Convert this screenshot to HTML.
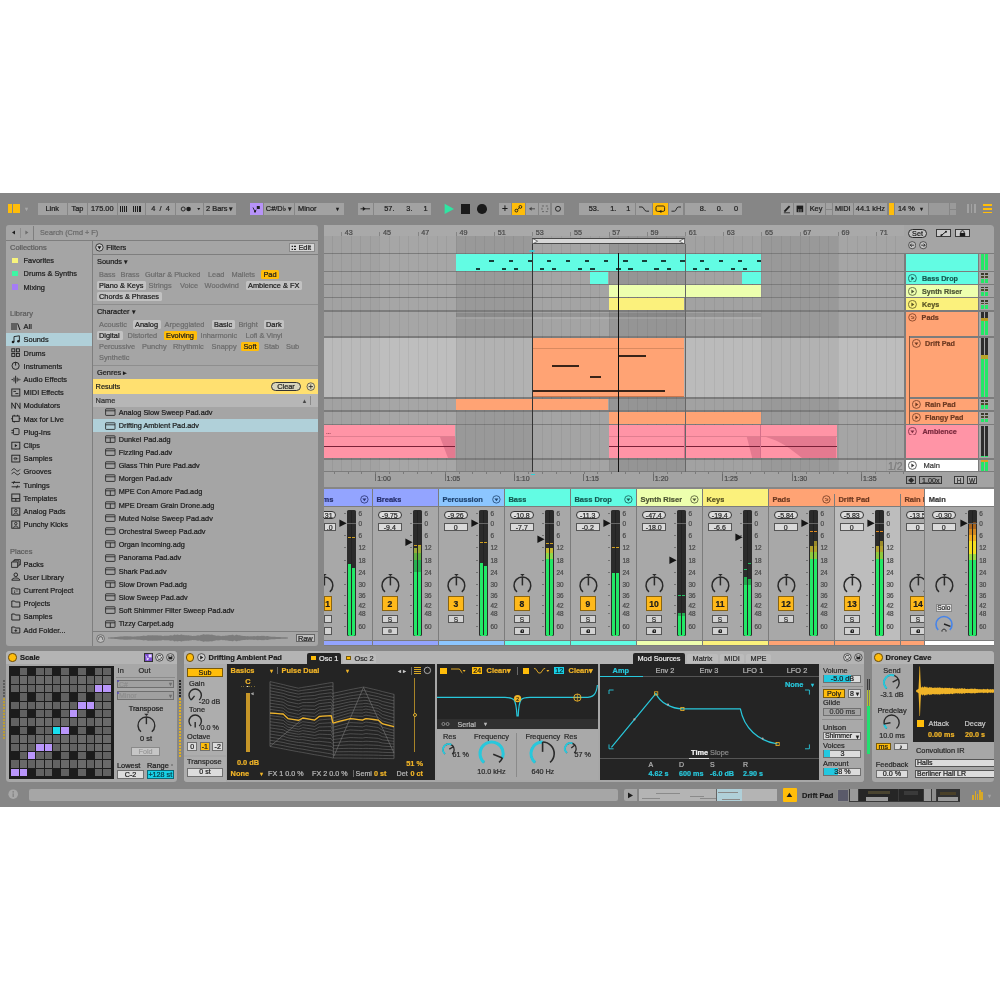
<!DOCTYPE html>
<html><head><meta charset="utf-8"><title>Live</title>
<style>
html,body{margin:0;padding:0;background:#fff;}
body{width:1000px;height:1000px;position:relative;overflow:hidden;font-family:"Liberation Sans",sans-serif;}
#app{position:absolute;left:0;top:0;width:1000px;height:1000px;overflow:hidden;will-change:transform;}
#app div,#app span,#app svg{position:absolute;box-sizing:border-box;}
#app span{white-space:nowrap;-webkit-text-stroke:0.22px currentColor;}
</style></head><body><div id="app">
<div style="left:0px;top:193px;width:1000px;height:614px;background:#868686;"></div>
<div style="left:8px;top:203.8px;width:3.6px;height:9.4px;background:#ffbd0a;"></div>
<div style="left:12.6px;top:203.8px;width:7.6px;height:9.4px;background:#ffbd0a;"></div>
<span style="top:204px;font-size:6px;line-height:10px;color:#a8a8a8;left:26px;transform:translateX(-50%);">&#9662;</span>
<div style="left:37.5px;top:203px;width:29.5px;height:11.6px;background:#a2a2a2;"></div>
<span style="top:204px;font-size:7.4px;line-height:10px;color:#1c1c1c;left:52.25px;transform:translateX(-50%);">Link</span>
<div style="left:68px;top:203px;width:19px;height:11.6px;background:#a2a2a2;"></div>
<span style="top:204px;font-size:7.4px;line-height:10px;color:#1c1c1c;left:77.5px;transform:translateX(-50%);">Tap</span>
<div style="left:88px;top:203px;width:28.5px;height:11.6px;background:#a2a2a2;"></div>
<span style="top:204px;font-size:7.4px;line-height:10px;color:#1c1c1c;left:102.25px;transform:translateX(-50%);">175.00</span>
<div style="left:117.5px;top:203px;width:27px;height:11.6px;background:#a2a2a2;"></div>
<div style="left:120px;top:205.5px;width:1px;height:6.6px;background:#1c1c1c;"></div>
<div style="left:122px;top:205.5px;width:1px;height:6.6px;background:#1c1c1c;"></div>
<div style="left:124px;top:205.5px;width:1px;height:6.6px;background:#1c1c1c;"></div>
<div style="left:126px;top:205.5px;width:1px;height:6.6px;background:#1c1c1c;"></div>
<div style="left:133px;top:205.5px;width:1px;height:6.6px;background:#1c1c1c;"></div>
<div style="left:135px;top:205.5px;width:1px;height:6.6px;background:#1c1c1c;"></div>
<div style="left:137px;top:205.5px;width:1px;height:6.6px;background:#1c1c1c;"></div>
<div style="left:139px;top:205.5px;width:1.6px;height:6.6px;background:#1c1c1c;"></div>
<div style="left:146px;top:203px;width:29px;height:11.6px;background:#a2a2a2;"></div>
<span style="top:204px;font-size:7.4px;line-height:10px;color:#1c1c1c;left:160.5px;transform:translateX(-50%);">4 &nbsp;/ &nbsp;4</span>
<div style="left:176px;top:203px;width:27px;height:11.6px;background:#a2a2a2;"></div>
<svg style="left:179px;top:204px;" width="24" height="10" viewBox="0 0 24 10"><circle cx="4.2" cy="5" r="2" fill="none" stroke="#1c1c1c" stroke-width="0.9"/><circle cx="9.6" cy="5" r="2.3" fill="#1c1c1c"/><path d="M18.2 4 l3 0 l-1.5 2.2z" fill="#1c1c1c"/></svg>
<div style="left:204px;top:203px;width:31.5px;height:11.6px;background:#a2a2a2;"></div>
<span style="top:204px;font-size:7.4px;line-height:10px;color:#1c1c1c;left:219.75px;transform:translateX(-50%);">2 Bars &#9662;</span>
<div style="left:250px;top:203px;width:12.5px;height:11.6px;background:#b793f8;"></div>
<svg style="left:250px;top:203px;" width="12.5" height="11.6" viewBox="0 0 12.5 11.6"><rect x="6.8" y="3" width="3" height="3" fill="#222"/><path d="M3 4.5 L4.6 7.8 L6.5 7" stroke="#222" stroke-width="0.9" fill="none"/><rect x="4" y="7.4" width="2" height="2" fill="#222"/></svg>
<div style="left:263.5px;top:203px;width:30.5px;height:11.6px;background:#a2a2a2;"></div>
<span style="top:204px;font-size:7.4px;line-height:10px;color:#1c1c1c;left:278.75px;transform:translateX(-50%);">C#/D&#9837; &#9662;</span>
<div style="left:295px;top:203px;width:48.8px;height:11.6px;background:#a2a2a2;"></div>
<span style="top:204px;font-size:7.4px;line-height:10px;color:#1c1c1c;left:298px;">Minor</span>
<span style="top:204px;font-size:6px;line-height:10px;color:#1c1c1c;left:337.5px;transform:translateX(-50%);">&#9662;</span>
<div style="left:358px;top:203px;width:15px;height:11.6px;background:#a2a2a2;"></div>
<svg style="left:358px;top:203px;" width="15" height="11.6" viewBox="0 0 15 11.6"><path d="M2.5 5.8 L12 5.8" stroke="#1c1c1c" stroke-width="0.9"/><path d="M4.8 3.6 L7.6 5.8 L4.8 8z" fill="#1c1c1c"/></svg>
<div style="left:374px;top:203px;width:56.8px;height:11.6px;background:#a2a2a2;"></div>
<span style="top:204px;font-size:7.4px;line-height:10px;color:#1c1c1c;left:394.5px;transform:translateX(-100%);">57.</span>
<span style="top:204px;font-size:7.4px;line-height:10px;color:#1c1c1c;left:412.5px;transform:translateX(-100%);">3.</span>
<span style="top:204px;font-size:7.4px;line-height:10px;color:#1c1c1c;left:427.5px;transform:translateX(-100%);">1</span>
<svg style="left:444px;top:203px;" width="11" height="12" viewBox="0 0 11 12"><path d="M0.6 0.8 L10 5.9 L0.6 11z" fill="#2fe5a3"/></svg>
<div style="left:460.5px;top:204px;width:9.6px;height:9.6px;background:#1a1a1a;"></div>
<div style="left:477px;top:204px;width:9.6px;height:9.6px;background:#1a1a1a;border-radius:50%;"></div>
<div style="left:499px;top:203px;width:12px;height:11.6px;background:#a2a2a2;"></div>
<span style="top:204px;font-size:10px;line-height:10px;color:#1c1c1c;left:505px;transform:translateX(-50%);">+</span>
<div style="left:512px;top:203px;width:12.5px;height:11.6px;background:#ffbd0a;"></div>
<svg style="left:512px;top:203px;" width="12.5" height="11.6" viewBox="0 0 12.5 11.6"><circle cx="4.4" cy="7.6" r="1.4" fill="none" stroke="#1c1c1c" stroke-width="0.9"/><circle cx="8.4" cy="3.9" r="1.4" fill="none" stroke="#1c1c1c" stroke-width="0.9"/><path d="M5.4 6.6 L7.4 4.9" stroke="#1c1c1c" stroke-width="0.9"/></svg>
<div style="left:525.5px;top:203px;width:12px;height:11.6px;background:#a2a2a2;"></div>
<svg style="left:525.5px;top:203px;" width="12" height="11.6" viewBox="0 0 12 11.6"><path d="M3.5 5.8 L9 5.8" stroke="#444" stroke-width="0.9"/><path d="M5.6 3.8 L3.2 5.8 L5.6 7.8z" fill="#444"/></svg>
<div style="left:538.8px;top:203px;width:11.7px;height:11.6px;background:#a2a2a2;"></div>
<svg style="left:538.8px;top:203px;" width="11.7" height="11.6" viewBox="0 0 11.7 11.6"><rect x="3" y="3" width="5.8" height="5.6" fill="none" stroke="#555" stroke-width="0.8" stroke-dasharray="2 1.8"/></svg>
<div style="left:551.8px;top:203px;width:12px;height:11.6px;background:#a2a2a2;"></div>
<svg style="left:551.8px;top:203px;" width="12" height="11.6" viewBox="0 0 12 11.6"><circle cx="6" cy="5.8" r="2.5" fill="none" stroke="#1c1c1c" stroke-width="0.9"/></svg>
<div style="left:578.8px;top:203px;width:56.2px;height:11.6px;background:#a2a2a2;"></div>
<span style="top:204px;font-size:7.4px;line-height:10px;color:#1c1c1c;left:599px;transform:translateX(-100%);">53.</span>
<span style="top:204px;font-size:7.4px;line-height:10px;color:#1c1c1c;left:616.4px;transform:translateX(-100%);">1.</span>
<span style="top:204px;font-size:7.4px;line-height:10px;color:#1c1c1c;left:630.4px;transform:translateX(-100%);">1</span>
<div style="left:636px;top:203px;width:16px;height:11.6px;background:#a2a2a2;"></div>
<svg style="left:636px;top:203px;" width="16" height="11.6" viewBox="0 0 16 11.6"><path d="M3 4 L6 4 C8 4 8 8.2 10.5 8.2 L13 8.2" stroke="#1c1c1c" stroke-width="0.9" fill="none"/></svg>
<div style="left:653px;top:203px;width:14.5px;height:11.6px;background:#ffbd0a;"></div>
<svg style="left:653px;top:203px;" width="14.5" height="11.6" viewBox="0 0 14.5 11.6"><rect x="3" y="3" width="8.6" height="5.4" rx="1.4" fill="none" stroke="#1c1c1c" stroke-width="0.9"/><path d="M6 8.4 l2.4 -1.6 l0 3.2z" fill="#1c1c1c"/></svg>
<div style="left:668.8px;top:203px;width:14.2px;height:11.6px;background:#a2a2a2;"></div>
<svg style="left:668.8px;top:203px;" width="14.2" height="11.6" viewBox="0 0 14.2 11.6"><path d="M2.5 8.2 L5.4 8.2 C7.6 8.2 7 4 9.4 4 L12 4" stroke="#1c1c1c" stroke-width="0.9" fill="none"/></svg>
<div style="left:685px;top:203px;width:56.5px;height:11.6px;background:#a2a2a2;"></div>
<span style="top:204px;font-size:7.4px;line-height:10px;color:#1c1c1c;left:706px;transform:translateX(-100%);">8.</span>
<span style="top:204px;font-size:7.4px;line-height:10px;color:#1c1c1c;left:723px;transform:translateX(-100%);">0.</span>
<span style="top:204px;font-size:7.4px;line-height:10px;color:#1c1c1c;left:738px;transform:translateX(-100%);">0</span>
<div style="left:780.5px;top:203px;width:12px;height:11.6px;background:#a2a2a2;"></div>
<svg style="left:780.5px;top:203px;" width="12" height="11.6" viewBox="0 0 12 11.6"><path d="M3.4 8.6 L8.6 3.2" stroke="#1c1c1c" stroke-width="1.8"/><path d="M2.8 9.8 L9 9.8" stroke="#1c1c1c" stroke-width="0.8"/></svg>
<div style="left:793.8px;top:203px;width:11.7px;height:11.6px;background:#a2a2a2;"></div>
<svg style="left:793.8px;top:203px;" width="11.7" height="11.6" viewBox="0 0 11.7 11.6"><rect x="2.6" y="2.6" width="6.6" height="6.6" fill="#1c1c1c"/><path d="M4.8 6 L4.8 9.2 M7 6 L7 9.2" stroke="#a2a2a2" stroke-width="0.7"/></svg>
<div style="left:807px;top:203px;width:18px;height:11.6px;background:#a2a2a2;"></div>
<span style="top:204px;font-size:7.4px;line-height:10px;color:#1c1c1c;left:816px;transform:translateX(-50%);">Key</span>
<div style="left:826px;top:203px;width:6px;height:11.6px;background:#a2a2a2;"></div>
<div style="left:826px;top:208.5px;width:6px;height:0.8px;background:#868686;"></div>
<div style="left:833px;top:203px;width:19.5px;height:11.6px;background:#a2a2a2;"></div>
<span style="top:204px;font-size:7.4px;line-height:10px;color:#1c1c1c;left:842.75px;transform:translateX(-50%);">MIDI</span>
<div style="left:853.8px;top:203px;width:33.2px;height:11.6px;background:#a2a2a2;"></div>
<span style="top:204px;font-size:7.4px;line-height:10px;color:#1c1c1c;left:870.4px;transform:translateX(-50%);">44.1 kHz</span>
<div style="left:888.8px;top:203px;width:5.5px;height:11.6px;background:#ffbd0a;"></div>
<div style="left:895px;top:203px;width:33px;height:11.6px;background:#a2a2a2;"></div>
<span style="top:204px;font-size:7.4px;line-height:10px;color:#1c1c1c;left:898px;">14 %</span>
<span style="top:204px;font-size:6px;line-height:10px;color:#1c1c1c;left:921.5px;transform:translateX(-50%);">&#9662;</span>
<div style="left:929px;top:203px;width:19.8px;height:11.6px;background:#9a9a9a;"></div>
<div style="left:950px;top:203px;width:5.5px;height:11.6px;background:#9a9a9a;"></div>
<div style="left:950px;top:208.5px;width:5.5px;height:0.8px;background:#868686;"></div>
<div style="left:967px;top:204.4px;width:1.6px;height:9px;background:#a2a2a2;"></div>
<div style="left:970.6px;top:204.4px;width:1.6px;height:9px;background:#a2a2a2;"></div>
<div style="left:974.2px;top:204.4px;width:1.6px;height:9px;background:#a2a2a2;"></div>
<div style="left:982.6px;top:204px;width:9.4px;height:1.8px;background:#ffbd0a;"></div>
<div style="left:982.6px;top:207.8px;width:9.4px;height:1.8px;background:#ffbd0a;"></div>
<div style="left:982.6px;top:211.6px;width:9.4px;height:1.8px;background:#ffbd0a;"></div>
<div style="left:6px;top:225px;width:311.6px;height:420.6px;background:#a5a5a5;border-radius:3px 3px 3px 3px;"></div>
<div style="left:6px;top:240px;width:311.6px;height:1px;background:#7e7e7e;"></div>
<svg style="left:10px;top:228px;" width="30" height="10" viewBox="0 0 30 10"><path d="M5 4.6 L2 2.6 L5 0.6z" transform="translate(0,2)" fill="#1c1c1c"/><path d="M15.4 2.6 L18.4 4.6 L15.4 6.6z" fill="#6c6c6c"/></svg>
<div style="left:19.6px;top:228px;width:0.8px;height:10px;background:#8e8e8e;"></div>
<div style="left:33.4px;top:226px;width:1px;height:14px;background:#7e7e7e;"></div>
<span style="top:228px;font-size:7.3px;line-height:10px;color:#6a6a6a;left:40px;">Search (Cmd + F)</span>
<div style="left:91.6px;top:241px;width:1.4px;height:404.6px;background:#7e7e7e;"></div>
<span style="top:243px;font-size:7.5px;line-height:10px;color:#5c5c5c;left:10px;">Collections</span>
<div style="left:12.4px;top:258px;width:5.2px;height:5.2px;background:#f7f47c;"></div>
<span style="top:256px;font-size:7.4px;line-height:10px;color:#1c1c1c;left:23.6px;">Favorites</span>
<div style="left:12.4px;top:271.2px;width:5.2px;height:5.2px;background:#3df5a4;"></div>
<span style="top:269px;font-size:7.4px;line-height:10px;color:#1c1c1c;left:23.6px;">Drums &amp; Synths</span>
<div style="left:12.4px;top:284.4px;width:5.2px;height:5.2px;background:#a57cf6;"></div>
<span style="top:283px;font-size:7.4px;line-height:10px;color:#1c1c1c;left:23.6px;">Mixing</span>
<span style="top:309px;font-size:7.5px;line-height:10px;color:#5c5c5c;left:10px;">Library</span>
<svg style="left:10.6px;top:321.8px;" width="10" height="10" viewBox="0 0 10 10"><path d="M1 1 V8 M3 1 V8 M5 1 V8 M6.6 1.4 L9 8" stroke="#1c1c1c" stroke-width="1" fill="none"/></svg>
<span style="top:322px;font-size:7.4px;line-height:10px;color:#1c1c1c;left:23.6px;">All</span>
<div style="left:6px;top:333.2px;width:85.6px;height:13.2px;background:#b0d0d9;"></div>
<svg style="left:10.6px;top:335px;" width="10" height="10" viewBox="0 0 10 10"><path d="M3 7 V1.6 L8.4 0.8 V6" stroke="#1c1c1c" stroke-width="0.9" fill="none"/><circle cx="2" cy="7" r="1.3" fill="#1c1c1c"/><circle cx="7.4" cy="6.2" r="1.3" fill="#1c1c1c"/></svg>
<span style="top:335px;font-size:7.4px;line-height:10px;color:#1c1c1c;left:23.6px;">Sounds</span>
<svg style="left:10.6px;top:348.2px;" width="10" height="10" viewBox="0 0 10 10"><rect x="0.8" y="0.8" width="3" height="3" fill="none" stroke="#1c1c1c" stroke-width="0.9"/><rect x="5.4" y="0.8" width="3" height="3" fill="none" stroke="#1c1c1c" stroke-width="0.9"/><rect x="0.8" y="5.4" width="3" height="3" fill="none" stroke="#1c1c1c" stroke-width="0.9"/><rect x="5.4" y="5.4" width="3" height="3" fill="none" stroke="#1c1c1c" stroke-width="0.9"/></svg>
<span style="top:349px;font-size:7.4px;line-height:10px;color:#1c1c1c;left:23.6px;">Drums</span>
<svg style="left:10.6px;top:361.4px;" width="10" height="10" viewBox="0 0 10 10"><circle cx="4.6" cy="4.8" r="3.6" fill="none" stroke="#1c1c1c" stroke-width="0.9"/><path d="M4.6 1 V4.6" stroke="#1c1c1c" stroke-width="0.9"/></svg>
<span style="top:362px;font-size:7.4px;line-height:10px;color:#1c1c1c;left:23.6px;">Instruments</span>
<svg style="left:10.6px;top:374.6px;" width="10" height="10" viewBox="0 0 10 10"><path d="M0.5 4.6 H2 M3 2.6 V6.6 M4.6 0.8 V8.4 M6.2 2.6 V6.6 M7.8 3.6 V5.6 M8.6 4.6 H9.4" stroke="#1c1c1c" stroke-width="0.9"/></svg>
<span style="top:375px;font-size:7.4px;line-height:10px;color:#1c1c1c;left:23.6px;">Audio Effects</span>
<svg style="left:10.6px;top:387.8px;" width="10" height="10" viewBox="0 0 10 10"><rect x="0.8" y="1" width="8" height="7" fill="none" stroke="#1c1c1c" stroke-width="0.9"/><path d="M2.4 3.4 H5 M4.4 5.6 H7.4" stroke="#1c1c1c" stroke-width="0.9"/></svg>
<span style="top:388px;font-size:7.4px;line-height:10px;color:#1c1c1c;left:23.6px;">MIDI Effects</span>
<svg style="left:10.6px;top:401px;" width="10" height="10" viewBox="0 0 10 10"><path d="M0.8 7.6 V1.8 L4.4 7.6 V1.8 M5.4 1.8 L9 7.6 V1.8" stroke="#1c1c1c" stroke-width="0.9" fill="none"/></svg>
<span style="top:401px;font-size:7.4px;line-height:10px;color:#1c1c1c;left:23.6px;">Modulators</span>
<svg style="left:10.6px;top:414.2px;" width="10" height="10" viewBox="0 0 10 10"><rect x="1.6" y="2" width="6.6" height="5.4" fill="none" stroke="#1c1c1c" stroke-width="0.9"/><path d="M0.2 4.7 H1.6 M8.2 4.7 H9.6 M3.2 0.8 V2 M6.6 0.8 V2 M3.2 7.4 V8.6" stroke="#1c1c1c" stroke-width="0.9"/></svg>
<span style="top:415px;font-size:7.4px;line-height:10px;color:#1c1c1c;left:23.6px;">Max for Live</span>
<svg style="left:10.6px;top:427.4px;" width="10" height="10" viewBox="0 0 10 10"><rect x="2.4" y="1.6" width="5.6" height="6" rx="1" fill="none" stroke="#1c1c1c" stroke-width="0.9"/><path d="M0.4 3.4 H2.4 M0.4 5.8 H2.4" stroke="#1c1c1c" stroke-width="0.9"/></svg>
<span style="top:428px;font-size:7.4px;line-height:10px;color:#1c1c1c;left:23.6px;">Plug-Ins</span>
<svg style="left:10.6px;top:440.6px;" width="10" height="10" viewBox="0 0 10 10"><rect x="0.8" y="1.2" width="8" height="6.8" fill="none" stroke="#1c1c1c" stroke-width="0.9"/><path d="M3.8 3 L6.4 4.6 L3.8 6.2z" fill="#1c1c1c"/></svg>
<span style="top:441px;font-size:7.4px;line-height:10px;color:#1c1c1c;left:23.6px;">Clips</span>
<svg style="left:10.6px;top:453.8px;" width="10" height="10" viewBox="0 0 10 10"><rect x="0.8" y="1.2" width="8" height="6.8" fill="none" stroke="#1c1c1c" stroke-width="0.9"/><path d="M2.6 4.6 H3.4 M4 3 V6.2 M5.6 3.6 V5.6 M6.6 4.6 H7.2" stroke="#1c1c1c" stroke-width="0.9"/></svg>
<span style="top:454px;font-size:7.4px;line-height:10px;color:#1c1c1c;left:23.6px;">Samples</span>
<svg style="left:10.6px;top:467px;" width="10" height="10" viewBox="0 0 10 10"><path d="M0.6 3.6 C2.4 1 3.6 1.4 4.8 3 C6 4.6 7.4 4.6 9 2.4 M0.6 7.2 C2.4 4.6 3.6 5 4.8 6.6 C6 8.2 7.4 8.2 9 6" stroke="#1c1c1c" stroke-width="0.9" fill="none"/></svg>
<span style="top:467px;font-size:7.4px;line-height:10px;color:#1c1c1c;left:23.6px;">Grooves</span>
<svg style="left:10.6px;top:480.2px;" width="10" height="10" viewBox="0 0 10 10"><path d="M0.6 2.4 H9 M0.6 6.8 H9 M3.4 1 L2.4 3.8 M6.6 5.4 L5.6 8.2" stroke="#1c1c1c" stroke-width="0.9" fill="none"/></svg>
<span style="top:481px;font-size:7.4px;line-height:10px;color:#1c1c1c;left:23.6px;">Tunings</span>
<svg style="left:10.6px;top:493.4px;" width="10" height="10" viewBox="0 0 10 10"><rect x="0.8" y="1" width="8" height="7.2" fill="none" stroke="#1c1c1c" stroke-width="0.9"/><path d="M0.8 5.6 H8.8 M4.8 5.6 V8.2" stroke="#1c1c1c" stroke-width="0.9"/></svg>
<span style="top:494px;font-size:7.4px;line-height:10px;color:#1c1c1c;left:23.6px;">Templates</span>
<svg style="left:10.6px;top:506.6px;" width="10" height="10" viewBox="0 0 10 10"><rect x="0.8" y="1" width="8" height="7.2" fill="none" stroke="#1c1c1c" stroke-width="0.9"/><circle cx="4.8" cy="3.6" r="1.2" fill="none" stroke="#1c1c1c" stroke-width="0.8"/><path d="M2.6 7.8 C2.8 5.4 6.8 5.4 7 7.8" stroke="#1c1c1c" stroke-width="0.8" fill="none"/></svg>
<span style="top:507px;font-size:7.4px;line-height:10px;color:#1c1c1c;left:23.6px;">Analog Pads</span>
<svg style="left:10.6px;top:519.8px;" width="10" height="10" viewBox="0 0 10 10"><rect x="0.8" y="1" width="8" height="7.2" fill="none" stroke="#1c1c1c" stroke-width="0.9"/><circle cx="4.8" cy="3.6" r="1.2" fill="none" stroke="#1c1c1c" stroke-width="0.8"/><path d="M2.6 7.8 C2.8 5.4 6.8 5.4 7 7.8" stroke="#1c1c1c" stroke-width="0.8" fill="none"/></svg>
<span style="top:520px;font-size:7.4px;line-height:10px;color:#1c1c1c;left:23.6px;">Punchy Kicks</span>
<span style="top:547px;font-size:7.5px;line-height:10px;color:#5c5c5c;left:10px;">Places</span>
<svg style="left:10.6px;top:559.2px;" width="10" height="10" viewBox="0 0 10 10"><path d="M0.6 3 H6.6 V8.4 H0.6z M2 3 V1.8 H8 V7 H6.6 M3.4 1.8 V0.6 H9.4 V5.8 H8" fill="none" stroke="#1c1c1c" stroke-width="0.8"/></svg>
<span style="top:560px;font-size:7.4px;line-height:10px;color:#1c1c1c;left:23.6px;">Packs</span>
<svg style="left:10.6px;top:572.4px;" width="10" height="10" viewBox="0 0 10 10"><circle cx="4.8" cy="2.8" r="1.8" fill="none" stroke="#1c1c1c" stroke-width="0.9"/><path d="M0.8 8.2 C1 5.2 8.6 5.2 8.8 8.2z" stroke="#1c1c1c" stroke-width="0.9" fill="none"/></svg>
<span style="top:573px;font-size:7.4px;line-height:10px;color:#1c1c1c;left:23.6px;">User Library</span>
<svg style="left:10.6px;top:585.6px;" width="10" height="10" viewBox="0 0 10 10"><path d="M0.8 2 H3.6 L4.4 3 H8.8 V8 H0.8z" fill="none" stroke="#1c1c1c" stroke-width="0.9"/><path d="M3 5 H4.2 M5.4 5 H6.6 M3 6.4 H4.2" stroke="#1c1c1c" stroke-width="0.8"/></svg>
<span style="top:586px;font-size:7.4px;line-height:10px;color:#1c1c1c;left:23.6px;">Current Project</span>
<svg style="left:10.6px;top:598.8px;" width="10" height="10" viewBox="0 0 10 10"><path d="M0.8 2 H3.6 L4.4 3 H8.8 V8 H0.8z" fill="none" stroke="#1c1c1c" stroke-width="0.9"/></svg>
<span style="top:599px;font-size:7.4px;line-height:10px;color:#1c1c1c;left:23.6px;">Projects</span>
<svg style="left:10.6px;top:612px;" width="10" height="10" viewBox="0 0 10 10"><path d="M0.8 2 H3.6 L4.4 3 H8.8 V8 H0.8z" fill="none" stroke="#1c1c1c" stroke-width="0.9"/></svg>
<span style="top:612px;font-size:7.4px;line-height:10px;color:#1c1c1c;left:23.6px;">Samples</span>
<svg style="left:10.6px;top:625.2px;" width="10" height="10" viewBox="0 0 10 10"><path d="M0.8 2 H3.6 L4.4 3 H8.8 V8 H0.8z" fill="none" stroke="#1c1c1c" stroke-width="0.9"/><path d="M4.8 4.2 V7 M3.4 5.6 H6.2" stroke="#1c1c1c" stroke-width="0.8"/></svg>
<span style="top:626px;font-size:7.4px;line-height:10px;color:#1c1c1c;left:23.6px;">Add Folder...</span>
<svg style="left:95.4px;top:243.2px;" width="9" height="9" viewBox="0 0 9 9"><circle cx="4.4" cy="4.4" r="3.7" fill="#c8c8c8" stroke="#1c1c1c" stroke-width="0.8"/><path d="M2.4 3.2 H6.4 L4.4 6.4z" fill="#1c1c1c"/></svg>
<span style="top:243px;font-size:7.4px;line-height:10px;color:#1c1c1c;left:106.2px;">Filters</span>
<div style="left:289px;top:243.4px;width:26.4px;height:8.6px;background:#d6d6d6;border:0.6px solid #8a8a8a;"></div>
<svg style="left:291px;top:244.6px;" width="6" height="6" viewBox="0 0 6 6"><path d="M0.6 1.4 H2 M0.6 4.4 H2 M3 1.4 H5 M3 4.4 H5" stroke="#1c1c1c" stroke-width="1.2"/></svg>
<span style="top:243px;font-size:7.4px;line-height:10px;color:#1c1c1c;left:298.4px;">Edit</span>
<div style="left:93px;top:254.4px;width:224.6px;height:0.8px;background:#7e7e7e;"></div>
<span style="top:257px;font-size:7.4px;line-height:10px;color:#1c1c1c;left:97px;">Sounds &#9662;</span>
<span style="top:270px;font-size:7.4px;line-height:10px;color:#6c6c6c;left:99px;">Bass</span>
<span style="top:270px;font-size:7.4px;line-height:10px;color:#6c6c6c;left:120.6px;">Brass</span>
<span style="top:270px;font-size:7.4px;line-height:10px;color:#6c6c6c;left:145px;">Guitar &amp; Plucked</span>
<span style="top:270px;font-size:7.4px;line-height:10px;color:#6c6c6c;left:208px;">Lead</span>
<span style="top:270px;font-size:7.4px;line-height:10px;color:#6c6c6c;left:231.6px;">Mallets</span>
<div style="left:261.4px;top:269.5px;width:17.77px;height:9px;background:#ffbd0a;border-radius:1.5px;"></div>
<span style="top:270px;font-size:7.4px;line-height:10px;color:#1c1c1c;left:263.4px;">Pad</span>
<div style="left:97px;top:280.5px;width:49.03px;height:9px;background:#c2c2c2;border-radius:1.5px;"></div>
<span style="top:281px;font-size:7.4px;line-height:10px;color:#1c1c1c;left:99px;">Piano &amp; Keys</span>
<span style="top:281px;font-size:7.4px;line-height:10px;color:#6c6c6c;left:148.6px;">Strings</span>
<span style="top:281px;font-size:7.4px;line-height:10px;color:#6c6c6c;left:180px;">Voice</span>
<span style="top:281px;font-size:7.4px;line-height:10px;color:#6c6c6c;left:204.6px;">Woodwind</span>
<div style="left:246px;top:280.5px;width:56.01px;height:9px;background:#c2c2c2;border-radius:1.5px;"></div>
<span style="top:281px;font-size:7.4px;line-height:10px;color:#1c1c1c;left:248px;">Ambience &amp; FX</span>
<div style="left:97px;top:291.7px;width:64.65px;height:9px;background:#c2c2c2;border-radius:1.5px;"></div>
<span style="top:292px;font-size:7.4px;line-height:10px;color:#1c1c1c;left:99px;">Chords &amp; Phrases</span>
<div style="left:93px;top:304.4px;width:224.6px;height:0.8px;background:#8e8e8e;"></div>
<span style="top:307px;font-size:7.4px;line-height:10px;color:#1c1c1c;left:97px;">Character &#9662;</span>
<span style="top:320px;font-size:7.4px;line-height:10px;color:#6c6c6c;left:99px;">Acoustic</span>
<div style="left:133px;top:319.5px;width:27.64px;height:9px;background:#c2c2c2;border-radius:1.5px;"></div>
<span style="top:320px;font-size:7.4px;line-height:10px;color:#1c1c1c;left:135px;">Analog</span>
<span style="top:320px;font-size:7.4px;line-height:10px;color:#6c6c6c;left:164.6px;">Arpeggiated</span>
<div style="left:212px;top:319.5px;width:22.7px;height:9px;background:#c2c2c2;border-radius:1.5px;"></div>
<span style="top:320px;font-size:7.4px;line-height:10px;color:#1c1c1c;left:214px;">Basic</span>
<span style="top:320px;font-size:7.4px;line-height:10px;color:#6c6c6c;left:238.4px;">Bright</span>
<div style="left:264px;top:319.5px;width:20.22px;height:9px;background:#c2c2c2;border-radius:1.5px;"></div>
<span style="top:320px;font-size:7.4px;line-height:10px;color:#1c1c1c;left:266px;">Dark</span>
<div style="left:97px;top:330.7px;width:25.6px;height:9px;background:#c2c2c2;border-radius:1.5px;"></div>
<span style="top:331px;font-size:7.4px;line-height:10px;color:#1c1c1c;left:99px;">Digital</span>
<span style="top:331px;font-size:7.4px;line-height:10px;color:#6c6c6c;left:127.6px;">Distorted</span>
<div style="left:164px;top:330.7px;width:32.57px;height:9px;background:#ffbd0a;border-radius:1.5px;"></div>
<span style="top:331px;font-size:7.4px;line-height:10px;color:#1c1c1c;left:166px;">Evolving</span>
<span style="top:331px;font-size:7.4px;line-height:10px;color:#6c6c6c;left:200.6px;">Inharmonic</span>
<span style="top:331px;font-size:7.4px;line-height:10px;color:#6c6c6c;left:245.6px;">Lofi &amp; Vinyl</span>
<span style="top:342px;font-size:7.4px;line-height:10px;color:#6c6c6c;left:99px;">Percussive</span>
<span style="top:342px;font-size:7.4px;line-height:10px;color:#6c6c6c;left:142px;">Punchy</span>
<span style="top:342px;font-size:7.4px;line-height:10px;color:#6c6c6c;left:173px;">Rhythmic</span>
<span style="top:342px;font-size:7.4px;line-height:10px;color:#6c6c6c;left:211.6px;">Snappy</span>
<div style="left:241.4px;top:341.7px;width:17.76px;height:9px;background:#ffbd0a;border-radius:1.5px;"></div>
<span style="top:342px;font-size:7.4px;line-height:10px;color:#1c1c1c;left:243.4px;">Soft</span>
<span style="top:342px;font-size:7.4px;line-height:10px;color:#6c6c6c;left:264px;">Stab</span>
<span style="top:342px;font-size:7.4px;line-height:10px;color:#6c6c6c;left:286px;">Sub</span>
<span style="top:353px;font-size:7.4px;line-height:10px;color:#6c6c6c;left:99px;">Synthetic</span>
<div style="left:93px;top:365.4px;width:224.6px;height:0.8px;background:#8e8e8e;"></div>
<span style="top:368px;font-size:7.4px;line-height:10px;color:#1c1c1c;left:97px;">Genres &#9656;</span>
<div style="left:93px;top:378.6px;width:224.6px;height:0.8px;background:#7e7e7e;"></div>
<div style="left:93px;top:379.4px;width:224.6px;height:14.6px;background:#ffe070;"></div>
<span style="top:382px;font-size:7.4px;line-height:10px;color:#1c1c1c;left:95.6px;">Results</span>
<div style="left:271px;top:382.4px;width:30px;height:8.6px;background:#d8d4bc;border:0.7px solid #333;border-radius:4.5px;"></div>
<span style="top:382px;font-size:7.4px;line-height:10px;color:#1c1c1c;left:286px;transform:translateX(-50%);">Clear</span>
<svg style="left:305.6px;top:382.2px;" width="10" height="10" viewBox="0 0 10 10"><circle cx="4.8" cy="4.6" r="3.8" fill="#e8e0b8" stroke="#333" stroke-width="0.7"/><path d="M4.8 2.4 V6.8 M2.6 4.6 H7" stroke="#1c1c1c" stroke-width="0.8"/></svg>
<div style="left:93px;top:394px;width:224.6px;height:12.6px;background:#b6b6b6;"></div>
<span style="top:396px;font-size:7.4px;line-height:10px;color:#333;left:95.6px;">Name</span>
<span style="top:396px;font-size:5.5px;line-height:10px;color:#444;left:304.4px;transform:translateX(-50%);">&#9650;</span>
<div style="left:309.6px;top:396px;width:0.8px;height:9px;background:#8a8a8a;"></div>
<svg style="left:105px;top:408.4px;" width="11" height="9" viewBox="0 0 11 9"><rect x="0.6" y="0.8" width="9.4" height="6.6" rx="0.6" fill="none" stroke="#1c1c1c" stroke-width="0.8"/><path d="M0.6 2.8 H10" stroke="#1c1c1c" stroke-width="0.8"/></svg>
<span style="top:408px;font-size:7.3px;line-height:10px;color:#1c1c1c;left:118.7px;">Analog Slow Sweep Pad.adv</span>
<div style="left:93px;top:419.2px;width:224.6px;height:13.2px;background:#b0d0d9;"></div>
<svg style="left:105px;top:421.6px;" width="11" height="9" viewBox="0 0 11 9"><rect x="0.6" y="0.8" width="9.4" height="6.6" rx="0.6" fill="none" stroke="#1c1c1c" stroke-width="0.8"/><path d="M0.6 2.8 H10" stroke="#1c1c1c" stroke-width="0.8"/></svg>
<span style="top:421px;font-size:7.3px;line-height:10px;color:#1c1c1c;left:118.7px;">Drifting Ambient Pad.adv</span>
<svg style="left:105px;top:434.8px;" width="11" height="9" viewBox="0 0 11 9"><rect x="0.6" y="0.8" width="9.4" height="6.6" rx="0.6" fill="none" stroke="#1c1c1c" stroke-width="0.8"/><path d="M0.6 2.8 H10 M5.3 2.8 V7.4" stroke="#1c1c1c" stroke-width="0.8"/></svg>
<span style="top:435px;font-size:7.3px;line-height:10px;color:#1c1c1c;left:118.7px;">Dunkel Pad.adg</span>
<svg style="left:105px;top:448px;" width="11" height="9" viewBox="0 0 11 9"><rect x="0.6" y="0.8" width="9.4" height="6.6" rx="0.6" fill="none" stroke="#1c1c1c" stroke-width="0.8"/><path d="M0.6 2.8 H10" stroke="#1c1c1c" stroke-width="0.8"/></svg>
<span style="top:448px;font-size:7.3px;line-height:10px;color:#1c1c1c;left:118.7px;">Fizzling Pad.adv</span>
<svg style="left:105px;top:461.2px;" width="11" height="9" viewBox="0 0 11 9"><rect x="0.6" y="0.8" width="9.4" height="6.6" rx="0.6" fill="none" stroke="#1c1c1c" stroke-width="0.8"/><path d="M0.6 2.8 H10" stroke="#1c1c1c" stroke-width="0.8"/></svg>
<span style="top:461px;font-size:7.3px;line-height:10px;color:#1c1c1c;left:118.7px;">Glass Thin Pure Pad.adv</span>
<svg style="left:105px;top:474.4px;" width="11" height="9" viewBox="0 0 11 9"><rect x="0.6" y="0.8" width="9.4" height="6.6" rx="0.6" fill="none" stroke="#1c1c1c" stroke-width="0.8"/><path d="M0.6 2.8 H10" stroke="#1c1c1c" stroke-width="0.8"/></svg>
<span style="top:474px;font-size:7.3px;line-height:10px;color:#1c1c1c;left:118.7px;">Morgen Pad.adv</span>
<svg style="left:105px;top:487.6px;" width="11" height="9" viewBox="0 0 11 9"><rect x="0.6" y="0.8" width="9.4" height="6.6" rx="0.6" fill="none" stroke="#1c1c1c" stroke-width="0.8"/><path d="M0.6 2.8 H10 M5.3 2.8 V7.4" stroke="#1c1c1c" stroke-width="0.8"/></svg>
<span style="top:487px;font-size:7.3px;line-height:10px;color:#1c1c1c;left:118.7px;">MPE Con Amore Pad.adg</span>
<svg style="left:105px;top:500.8px;" width="11" height="9" viewBox="0 0 11 9"><rect x="0.6" y="0.8" width="9.4" height="6.6" rx="0.6" fill="none" stroke="#1c1c1c" stroke-width="0.8"/><path d="M0.6 2.8 H10 M5.3 2.8 V7.4" stroke="#1c1c1c" stroke-width="0.8"/></svg>
<span style="top:501px;font-size:7.3px;line-height:10px;color:#1c1c1c;left:118.7px;">MPE Dream Grain Drone.adg</span>
<svg style="left:105px;top:514px;" width="11" height="9" viewBox="0 0 11 9"><rect x="0.6" y="0.8" width="9.4" height="6.6" rx="0.6" fill="none" stroke="#1c1c1c" stroke-width="0.8"/><path d="M0.6 2.8 H10" stroke="#1c1c1c" stroke-width="0.8"/></svg>
<span style="top:514px;font-size:7.3px;line-height:10px;color:#1c1c1c;left:118.7px;">Muted Noise Sweep Pad.adv</span>
<svg style="left:105px;top:527.2px;" width="11" height="9" viewBox="0 0 11 9"><rect x="0.6" y="0.8" width="9.4" height="6.6" rx="0.6" fill="none" stroke="#1c1c1c" stroke-width="0.8"/><path d="M0.6 2.8 H10" stroke="#1c1c1c" stroke-width="0.8"/></svg>
<span style="top:527px;font-size:7.3px;line-height:10px;color:#1c1c1c;left:118.7px;">Orchestral Sweep Pad.adv</span>
<svg style="left:105px;top:540.4px;" width="11" height="9" viewBox="0 0 11 9"><rect x="0.6" y="0.8" width="9.4" height="6.6" rx="0.6" fill="none" stroke="#1c1c1c" stroke-width="0.8"/><path d="M0.6 2.8 H10 M5.3 2.8 V7.4" stroke="#1c1c1c" stroke-width="0.8"/></svg>
<span style="top:540px;font-size:7.3px;line-height:10px;color:#1c1c1c;left:118.7px;">Organ Incoming.adg</span>
<svg style="left:105px;top:553.6px;" width="11" height="9" viewBox="0 0 11 9"><rect x="0.6" y="0.8" width="9.4" height="6.6" rx="0.6" fill="none" stroke="#1c1c1c" stroke-width="0.8"/><path d="M0.6 2.8 H10" stroke="#1c1c1c" stroke-width="0.8"/></svg>
<span style="top:553px;font-size:7.3px;line-height:10px;color:#1c1c1c;left:118.7px;">Panorama Pad.adv</span>
<svg style="left:105px;top:566.8px;" width="11" height="9" viewBox="0 0 11 9"><rect x="0.6" y="0.8" width="9.4" height="6.6" rx="0.6" fill="none" stroke="#1c1c1c" stroke-width="0.8"/><path d="M0.6 2.8 H10" stroke="#1c1c1c" stroke-width="0.8"/></svg>
<span style="top:567px;font-size:7.3px;line-height:10px;color:#1c1c1c;left:118.7px;">Shark Pad.adv</span>
<svg style="left:105px;top:580px;" width="11" height="9" viewBox="0 0 11 9"><rect x="0.6" y="0.8" width="9.4" height="6.6" rx="0.6" fill="none" stroke="#1c1c1c" stroke-width="0.8"/><path d="M0.6 2.8 H10 M5.3 2.8 V7.4" stroke="#1c1c1c" stroke-width="0.8"/></svg>
<span style="top:580px;font-size:7.3px;line-height:10px;color:#1c1c1c;left:118.7px;">Slow Drown Pad.adg</span>
<svg style="left:105px;top:593.2px;" width="11" height="9" viewBox="0 0 11 9"><rect x="0.6" y="0.8" width="9.4" height="6.6" rx="0.6" fill="none" stroke="#1c1c1c" stroke-width="0.8"/><path d="M0.6 2.8 H10" stroke="#1c1c1c" stroke-width="0.8"/></svg>
<span style="top:593px;font-size:7.3px;line-height:10px;color:#1c1c1c;left:118.7px;">Slow Sweep Pad.adv</span>
<svg style="left:105px;top:606.4px;" width="11" height="9" viewBox="0 0 11 9"><rect x="0.6" y="0.8" width="9.4" height="6.6" rx="0.6" fill="none" stroke="#1c1c1c" stroke-width="0.8"/><path d="M0.6 2.8 H10" stroke="#1c1c1c" stroke-width="0.8"/></svg>
<span style="top:606px;font-size:7.3px;line-height:10px;color:#1c1c1c;left:118.7px;">Soft Shimmer Filter Sweep Pad.adv</span>
<svg style="left:105px;top:619.6px;" width="11" height="9" viewBox="0 0 11 9"><rect x="0.6" y="0.8" width="9.4" height="6.6" rx="0.6" fill="none" stroke="#1c1c1c" stroke-width="0.8"/><path d="M0.6 2.8 H10 M5.3 2.8 V7.4" stroke="#1c1c1c" stroke-width="0.8"/></svg>
<span style="top:619px;font-size:7.3px;line-height:10px;color:#1c1c1c;left:118.7px;">Tizzy Carpet.adg</span>
<div style="left:93px;top:630.6px;width:224.6px;height:0.8px;background:#7e7e7e;"></div>
<svg style="left:95.6px;top:633.6px;" width="10" height="10" viewBox="0 0 10 10"><circle cx="4.6" cy="4.6" r="3.9" fill="#bcbcbc" stroke="#555" stroke-width="0.7"/><path d="M2.6 5.6 V4.6 C2.6 2 6.6 2 6.6 4.6 V5.6" stroke="#444" stroke-width="0.9" fill="none"/></svg>
<svg style="left:108px;top:634.2px;" width="182" height="8" viewBox="0 0 182 8"><path d="M0 3.6 L1 3.49 L2 3.43 L3 3.34 L4 3.27 L5 3.27 L6 3.21 L7 2.97 L8 3.01 L9 2.93 L10 2.63 L11 2.69 L12 2.49 L13 2.54 L14 2.41 L15 2.56 L16 2.32 L17 2.2 L18 2.34 L19 2.25 L20 2.29 L21 2.58 L22 2.32 L23 2.42 L24 2.56 L25 2.69 L26 2.39 L27 2.54 L28 2.43 L29 2.34 L30 2.35 L31 2.2 L32 2.34 L33 2.05 L34 2.12 L35 1.72 L36 1.62 L37 2 L38 1.87 L39 1.72 L40 1.06 L41 1.39 L42 1.19 L43 1.43 L44 1.25 L45 1.37 L46 1.44 L47 1.31 L48 1.39 L49 1.24 L50 1.5 L51 1.43 L52 1.58 L53 1.58 L54 1.83 L55 2.17 L56 1.78 L57 1.71 L58 1.7 L59 1.83 L60 1.65 L61 1.87 L62 1.31 L63 1.36 L64 1.46 L65 1.52 L66 0.69 L67 0.43 L68 1.21 L69 0.42 L70 0.77 L71 1.02 L72 0.88 L73 0.44 L74 0.41 L75 1.31 L76 0.87 L77 1.5 L78 1.04 L79 1.48 L80 1.18 L81 1.23 L82 1.66 L83 1.39 L84 1.88 L85 2.04 L86 1.68 L87 2.01 L88 1.83 L89 1.59 L90 1.32 L91 1.56 L92 1.54 L93 0.67 L94 1.06 L95 0.31 L96 0.27 L97 0.74 L98 0.62 L99 0.54 L100 0.44 L101 0.54 L102 0.66 L103 0.7 L104 0.53 L105 1.07 L106 1.27 L107 1.18 L108 1.68 L109 1.75 L110 1.39 L111 1.77 L112 1.81 L113 2.17 L114 1.92 L115 1.79 L116 2.09 L117 1.63 L118 1.52 L119 1.84 L120 1.31 L121 1.33 L122 1.05 L123 1.25 L124 0.86 L125 0.78 L126 1.42 L127 1.39 L128 0.86 L129 0.66 L130 1.37 L131 1.29 L132 1.29 L133 1.63 L134 1.72 L135 1.88 L136 1.96 L137 1.94 L138 2.2 L139 2.23 L140 2.1 L141 2.49 L142 2.26 L143 2.18 L144 2.35 L145 2.36 L146 2.03 L147 2.26 L148 2.24 L149 2.05 L150 1.85 L151 2.16 L152 2.01 L153 1.99 L154 1.7 L155 1.96 L156 1.77 L157 2.22 L158 2.19 L159 2.12 L160 2.11 L161 2.41 L162 2.6 L163 2.72 L164 2.67 L165 2.86 L166 2.77 L167 2.84 L168 3.04 L169 3.07 L170 3 L171 3.07 L172 3.07 L173 3.17 L174 3.22 L175 3.23 L176 3.2 L177 3.31 L178 3.36 L179 3.44 L180 3.6 L180 4.4 L179 4.56 L178 4.64 L177 4.69 L176 4.8 L175 4.77 L174 4.78 L173 4.83 L172 4.93 L171 4.93 L170 5 L169 4.93 L168 4.96 L167 5.16 L166 5.23 L165 5.14 L164 5.33 L163 5.28 L162 5.4 L161 5.59 L160 5.89 L159 5.88 L158 5.81 L157 5.78 L156 6.23 L155 6.04 L154 6.3 L153 6.01 L152 5.99 L151 5.84 L150 6.15 L149 5.95 L148 5.76 L147 5.74 L146 5.97 L145 5.64 L144 5.65 L143 5.82 L142 5.74 L141 5.51 L140 5.9 L139 5.77 L138 5.8 L137 6.06 L136 6.04 L135 6.12 L134 6.28 L133 6.37 L132 6.71 L131 6.71 L130 6.63 L129 7.34 L128 7.14 L127 6.61 L126 6.58 L125 7.22 L124 7.14 L123 6.75 L122 6.95 L121 6.67 L120 6.69 L119 6.16 L118 6.48 L117 6.37 L116 5.91 L115 6.21 L114 6.08 L113 5.83 L112 6.19 L111 6.23 L110 6.61 L109 6.25 L108 6.32 L107 6.82 L106 6.73 L105 6.93 L104 7.47 L103 7.3 L102 7.34 L101 7.46 L100 7.56 L99 7.46 L98 7.38 L97 7.26 L96 7.73 L95 7.69 L94 6.94 L93 7.33 L92 6.46 L91 6.44 L90 6.68 L89 6.41 L88 6.17 L87 5.99 L86 6.32 L85 5.96 L84 6.12 L83 6.61 L82 6.34 L81 6.77 L80 6.82 L79 6.52 L78 6.96 L77 6.5 L76 7.13 L75 6.69 L74 7.59 L73 7.56 L72 7.12 L71 6.98 L70 7.23 L69 7.58 L68 6.79 L67 7.57 L66 7.31 L65 6.48 L64 6.54 L63 6.64 L62 6.69 L61 6.13 L60 6.35 L59 6.17 L58 6.3 L57 6.29 L56 6.22 L55 5.83 L54 6.17 L53 6.42 L52 6.42 L51 6.57 L50 6.5 L49 6.76 L48 6.61 L47 6.69 L46 6.56 L45 6.63 L44 6.75 L43 6.57 L42 6.81 L41 6.61 L40 6.94 L39 6.28 L38 6.13 L37 6 L36 6.38 L35 6.28 L34 5.88 L33 5.95 L32 5.66 L31 5.8 L30 5.65 L29 5.66 L28 5.57 L27 5.46 L26 5.61 L25 5.31 L24 5.44 L23 5.58 L22 5.68 L21 5.42 L20 5.71 L19 5.75 L18 5.66 L17 5.8 L16 5.68 L15 5.44 L14 5.59 L13 5.46 L12 5.51 L11 5.31 L10 5.37 L9 5.07 L8 4.99 L7 5.03 L6 4.79 L5 4.73 L4 4.73 L3 4.66 L2 4.57 L1 4.51 L0 4.4z" fill="#7c7c7c"/></svg>
<div style="left:296px;top:633.6px;width:18.6px;height:8.8px;background:#c0c0c0;border:0.6px solid #666;"></div>
<span style="top:634px;font-size:7.4px;line-height:10px;color:#1c1c1c;left:305.3px;transform:translateX(-50%);">Raw</span>
<div style="left:323.6px;top:225px;width:670.4px;height:262px;background:#7c7c7c;border-radius:0 3.5px 0 0;"></div>
<div style="left:323.6px;top:225px;width:580.4px;height:11.4px;background:#a9a9a9;"></div>
<div style="left:340.5px;top:231.5px;width:1px;height:5.5px;background:#858585;"></div>
<span style="top:228px;font-size:7.2px;line-height:10px;color:#4a4a4a;left:344.85px;">43</span>
<div style="left:378.5px;top:231.5px;width:1px;height:5.5px;background:#858585;"></div>
<span style="top:228px;font-size:7.2px;line-height:10px;color:#4a4a4a;left:383.05px;">45</span>
<div style="left:417.5px;top:231.5px;width:1px;height:5.5px;background:#858585;"></div>
<span style="top:228px;font-size:7.2px;line-height:10px;color:#4a4a4a;left:421.25px;">47</span>
<div style="left:455.5px;top:231.5px;width:1px;height:5.5px;background:#858585;"></div>
<span style="top:228px;font-size:7.2px;line-height:10px;color:#4a4a4a;left:459.45px;">49</span>
<div style="left:493.5px;top:231.5px;width:1px;height:5.5px;background:#858585;"></div>
<span style="top:228px;font-size:7.2px;line-height:10px;color:#4a4a4a;left:497.65px;">51</span>
<div style="left:531.5px;top:231.5px;width:1px;height:5.5px;background:#858585;"></div>
<span style="top:228px;font-size:7.2px;line-height:10px;color:#4a4a4a;left:535.85px;">53</span>
<div style="left:569.5px;top:231.5px;width:1px;height:5.5px;background:#858585;"></div>
<span style="top:228px;font-size:7.2px;line-height:10px;color:#4a4a4a;left:574.05px;">55</span>
<div style="left:608.5px;top:231.5px;width:1px;height:5.5px;background:#858585;"></div>
<span style="top:228px;font-size:7.2px;line-height:10px;color:#4a4a4a;left:612.25px;">57</span>
<div style="left:646.5px;top:231.5px;width:1px;height:5.5px;background:#858585;"></div>
<span style="top:228px;font-size:7.2px;line-height:10px;color:#4a4a4a;left:650.45px;">59</span>
<div style="left:684.5px;top:231.5px;width:1px;height:5.5px;background:#858585;"></div>
<span style="top:228px;font-size:7.2px;line-height:10px;color:#4a4a4a;left:688.65px;">61</span>
<div style="left:722.5px;top:231.5px;width:1px;height:5.5px;background:#858585;"></div>
<span style="top:228px;font-size:7.2px;line-height:10px;color:#4a4a4a;left:726.85px;">63</span>
<div style="left:760.5px;top:231.5px;width:1px;height:5.5px;background:#858585;"></div>
<span style="top:228px;font-size:7.2px;line-height:10px;color:#4a4a4a;left:765.05px;">65</span>
<div style="left:799.5px;top:231.5px;width:1px;height:5.5px;background:#858585;"></div>
<span style="top:228px;font-size:7.2px;line-height:10px;color:#4a4a4a;left:803.25px;">67</span>
<div style="left:837.5px;top:231.5px;width:1px;height:5.5px;background:#858585;"></div>
<span style="top:228px;font-size:7.2px;line-height:10px;color:#4a4a4a;left:841.45px;">69</span>
<div style="left:875.5px;top:231.5px;width:1px;height:5.5px;background:#858585;"></div>
<span style="top:228px;font-size:7.2px;line-height:10px;color:#4a4a4a;left:879.65px;">71</span>
<div style="left:323.6px;top:236.4px;width:55.85px;height:16.4px;background:#a2a2a2;"></div>
<div style="left:379.45px;top:236.4px;width:76.4px;height:16.4px;background:#a6a6a6;"></div>
<div style="left:455.85px;top:236.4px;width:76.4px;height:16.4px;background:#999999;"></div>
<div style="left:532.25px;top:236.4px;width:76.4px;height:16.4px;background:#a4a4a4;"></div>
<div style="left:608.65px;top:236.4px;width:76.4px;height:16.4px;background:#959595;"></div>
<div style="left:685.05px;top:236.4px;width:76.4px;height:16.4px;background:#a2a2a2;"></div>
<div style="left:761.45px;top:236.4px;width:76.4px;height:16.4px;background:#999999;"></div>
<div style="left:837.85px;top:236.4px;width:66.15px;height:16.4px;background:#a5a5a5;"></div>
<div style="left:323.6px;top:253.6px;width:55.85px;height:17.4px;background:#a2a2a2;"></div>
<div style="left:379.45px;top:253.6px;width:76.4px;height:17.4px;background:#a6a6a6;"></div>
<div style="left:455.85px;top:253.6px;width:76.4px;height:17.4px;background:#999999;"></div>
<div style="left:532.25px;top:253.6px;width:76.4px;height:17.4px;background:#a4a4a4;"></div>
<div style="left:608.65px;top:253.6px;width:76.4px;height:17.4px;background:#959595;"></div>
<div style="left:685.05px;top:253.6px;width:76.4px;height:17.4px;background:#a2a2a2;"></div>
<div style="left:761.45px;top:253.6px;width:76.4px;height:17.4px;background:#999999;"></div>
<div style="left:837.85px;top:253.6px;width:66.15px;height:17.4px;background:#a5a5a5;"></div>
<div style="left:323.6px;top:272px;width:55.85px;height:12px;background:#a2a2a2;"></div>
<div style="left:379.45px;top:272px;width:76.4px;height:12px;background:#a6a6a6;"></div>
<div style="left:455.85px;top:272px;width:76.4px;height:12px;background:#999999;"></div>
<div style="left:532.25px;top:272px;width:76.4px;height:12px;background:#a4a4a4;"></div>
<div style="left:608.65px;top:272px;width:76.4px;height:12px;background:#959595;"></div>
<div style="left:685.05px;top:272px;width:76.4px;height:12px;background:#a2a2a2;"></div>
<div style="left:761.45px;top:272px;width:76.4px;height:12px;background:#999999;"></div>
<div style="left:837.85px;top:272px;width:66.15px;height:12px;background:#a5a5a5;"></div>
<div style="left:323.6px;top:285.2px;width:55.85px;height:12px;background:#a2a2a2;"></div>
<div style="left:379.45px;top:285.2px;width:76.4px;height:12px;background:#a6a6a6;"></div>
<div style="left:455.85px;top:285.2px;width:76.4px;height:12px;background:#999999;"></div>
<div style="left:532.25px;top:285.2px;width:76.4px;height:12px;background:#a4a4a4;"></div>
<div style="left:608.65px;top:285.2px;width:76.4px;height:12px;background:#959595;"></div>
<div style="left:685.05px;top:285.2px;width:76.4px;height:12px;background:#a2a2a2;"></div>
<div style="left:761.45px;top:285.2px;width:76.4px;height:12px;background:#999999;"></div>
<div style="left:837.85px;top:285.2px;width:66.15px;height:12px;background:#a5a5a5;"></div>
<div style="left:323.6px;top:298.4px;width:55.85px;height:12px;background:#a2a2a2;"></div>
<div style="left:379.45px;top:298.4px;width:76.4px;height:12px;background:#a6a6a6;"></div>
<div style="left:455.85px;top:298.4px;width:76.4px;height:12px;background:#999999;"></div>
<div style="left:532.25px;top:298.4px;width:76.4px;height:12px;background:#a4a4a4;"></div>
<div style="left:608.65px;top:298.4px;width:76.4px;height:12px;background:#959595;"></div>
<div style="left:685.05px;top:298.4px;width:76.4px;height:12px;background:#a2a2a2;"></div>
<div style="left:761.45px;top:298.4px;width:76.4px;height:12px;background:#999999;"></div>
<div style="left:837.85px;top:298.4px;width:66.15px;height:12px;background:#a5a5a5;"></div>
<div style="left:323.6px;top:311.6px;width:55.85px;height:24.4px;background:#a2a2a2;"></div>
<div style="left:379.45px;top:311.6px;width:76.4px;height:24.4px;background:#a6a6a6;"></div>
<div style="left:455.85px;top:311.6px;width:76.4px;height:24.4px;background:#999999;"></div>
<div style="left:532.25px;top:311.6px;width:76.4px;height:24.4px;background:#a4a4a4;"></div>
<div style="left:608.65px;top:311.6px;width:76.4px;height:24.4px;background:#959595;"></div>
<div style="left:685.05px;top:311.6px;width:76.4px;height:24.4px;background:#a2a2a2;"></div>
<div style="left:761.45px;top:311.6px;width:76.4px;height:24.4px;background:#999999;"></div>
<div style="left:837.85px;top:311.6px;width:66.15px;height:24.4px;background:#a5a5a5;"></div>
<div style="left:323.6px;top:337.6px;width:55.85px;height:59.8px;background:#bababa;"></div>
<div style="left:379.45px;top:337.6px;width:76.4px;height:59.8px;background:#bebebe;"></div>
<div style="left:455.85px;top:337.6px;width:76.4px;height:59.8px;background:#b2b2b2;"></div>
<div style="left:532.25px;top:337.6px;width:76.4px;height:59.8px;background:#bcbcbc;"></div>
<div style="left:608.65px;top:337.6px;width:76.4px;height:59.8px;background:#b0b0b0;"></div>
<div style="left:685.05px;top:337.6px;width:76.4px;height:59.8px;background:#bbbbbb;"></div>
<div style="left:761.45px;top:337.6px;width:76.4px;height:59.8px;background:#b2b2b2;"></div>
<div style="left:837.85px;top:337.6px;width:66.15px;height:59.8px;background:#bdbdbd;"></div>
<div style="left:323.6px;top:398.6px;width:55.85px;height:11.8px;background:#a2a2a2;"></div>
<div style="left:379.45px;top:398.6px;width:76.4px;height:11.8px;background:#a6a6a6;"></div>
<div style="left:455.85px;top:398.6px;width:76.4px;height:11.8px;background:#999999;"></div>
<div style="left:532.25px;top:398.6px;width:76.4px;height:11.8px;background:#a4a4a4;"></div>
<div style="left:608.65px;top:398.6px;width:76.4px;height:11.8px;background:#959595;"></div>
<div style="left:685.05px;top:398.6px;width:76.4px;height:11.8px;background:#a2a2a2;"></div>
<div style="left:761.45px;top:398.6px;width:76.4px;height:11.8px;background:#999999;"></div>
<div style="left:837.85px;top:398.6px;width:66.15px;height:11.8px;background:#a5a5a5;"></div>
<div style="left:323.6px;top:412px;width:55.85px;height:11.6px;background:#a2a2a2;"></div>
<div style="left:379.45px;top:412px;width:76.4px;height:11.6px;background:#a6a6a6;"></div>
<div style="left:455.85px;top:412px;width:76.4px;height:11.6px;background:#999999;"></div>
<div style="left:532.25px;top:412px;width:76.4px;height:11.6px;background:#a4a4a4;"></div>
<div style="left:608.65px;top:412px;width:76.4px;height:11.6px;background:#959595;"></div>
<div style="left:685.05px;top:412px;width:76.4px;height:11.6px;background:#a2a2a2;"></div>
<div style="left:761.45px;top:412px;width:76.4px;height:11.6px;background:#999999;"></div>
<div style="left:837.85px;top:412px;width:66.15px;height:11.6px;background:#a5a5a5;"></div>
<div style="left:323.6px;top:425px;width:55.85px;height:33px;background:#a2a2a2;"></div>
<div style="left:379.45px;top:425px;width:76.4px;height:33px;background:#a6a6a6;"></div>
<div style="left:455.85px;top:425px;width:76.4px;height:33px;background:#999999;"></div>
<div style="left:532.25px;top:425px;width:76.4px;height:33px;background:#a4a4a4;"></div>
<div style="left:608.65px;top:425px;width:76.4px;height:33px;background:#959595;"></div>
<div style="left:685.05px;top:425px;width:76.4px;height:33px;background:#a2a2a2;"></div>
<div style="left:761.45px;top:425px;width:76.4px;height:33px;background:#999999;"></div>
<div style="left:837.85px;top:425px;width:66.15px;height:33px;background:#a5a5a5;"></div>
<div style="left:323.6px;top:459.6px;width:55.85px;height:11.8px;background:#a2a2a2;"></div>
<div style="left:379.45px;top:459.6px;width:76.4px;height:11.8px;background:#a6a6a6;"></div>
<div style="left:455.85px;top:459.6px;width:76.4px;height:11.8px;background:#999999;"></div>
<div style="left:532.25px;top:459.6px;width:76.4px;height:11.8px;background:#a4a4a4;"></div>
<div style="left:608.65px;top:459.6px;width:76.4px;height:11.8px;background:#959595;"></div>
<div style="left:685.05px;top:459.6px;width:76.4px;height:11.8px;background:#a2a2a2;"></div>
<div style="left:761.45px;top:459.6px;width:76.4px;height:11.8px;background:#999999;"></div>
<div style="left:837.85px;top:459.6px;width:66.15px;height:11.8px;background:#a5a5a5;"></div>
<div style="left:331.5px;top:236.4px;width:1px;height:235px;background:rgba(0,0,0,0.05);"></div>
<div style="left:340.5px;top:236.4px;width:1px;height:235px;background:rgba(0,0,0,0.05);"></div>
<div style="left:350.5px;top:236.4px;width:1px;height:235px;background:rgba(0,0,0,0.05);"></div>
<div style="left:359.5px;top:236.4px;width:1px;height:235px;background:rgba(0,0,0,0.05);"></div>
<div style="left:369.5px;top:236.4px;width:1px;height:235px;background:rgba(0,0,0,0.05);"></div>
<div style="left:378.5px;top:236.4px;width:1px;height:235px;background:rgba(0,0,0,0.05);"></div>
<div style="left:388.5px;top:236.4px;width:1px;height:235px;background:rgba(0,0,0,0.05);"></div>
<div style="left:398.5px;top:236.4px;width:1px;height:235px;background:rgba(0,0,0,0.05);"></div>
<div style="left:407.5px;top:236.4px;width:1px;height:235px;background:rgba(0,0,0,0.05);"></div>
<div style="left:417.5px;top:236.4px;width:1px;height:235px;background:rgba(0,0,0,0.05);"></div>
<div style="left:426.5px;top:236.4px;width:1px;height:235px;background:rgba(0,0,0,0.05);"></div>
<div style="left:436.5px;top:236.4px;width:1px;height:235px;background:rgba(0,0,0,0.05);"></div>
<div style="left:445.5px;top:236.4px;width:1px;height:235px;background:rgba(0,0,0,0.05);"></div>
<div style="left:455.5px;top:236.4px;width:1px;height:235px;background:rgba(0,0,0,0.05);"></div>
<div style="left:464.5px;top:236.4px;width:1px;height:235px;background:rgba(0,0,0,0.05);"></div>
<div style="left:474.5px;top:236.4px;width:1px;height:235px;background:rgba(0,0,0,0.05);"></div>
<div style="left:483.5px;top:236.4px;width:1px;height:235px;background:rgba(0,0,0,0.05);"></div>
<div style="left:493.5px;top:236.4px;width:1px;height:235px;background:rgba(0,0,0,0.05);"></div>
<div style="left:503.5px;top:236.4px;width:1px;height:235px;background:rgba(0,0,0,0.05);"></div>
<div style="left:512.5px;top:236.4px;width:1px;height:235px;background:rgba(0,0,0,0.05);"></div>
<div style="left:522.5px;top:236.4px;width:1px;height:235px;background:rgba(0,0,0,0.05);"></div>
<div style="left:531.5px;top:236.4px;width:1px;height:235px;background:rgba(0,0,0,0.05);"></div>
<div style="left:541.5px;top:236.4px;width:1px;height:235px;background:rgba(0,0,0,0.05);"></div>
<div style="left:550.5px;top:236.4px;width:1px;height:235px;background:rgba(0,0,0,0.05);"></div>
<div style="left:560.5px;top:236.4px;width:1px;height:235px;background:rgba(0,0,0,0.05);"></div>
<div style="left:569.5px;top:236.4px;width:1px;height:235px;background:rgba(0,0,0,0.05);"></div>
<div style="left:579.5px;top:236.4px;width:1px;height:235px;background:rgba(0,0,0,0.05);"></div>
<div style="left:589.5px;top:236.4px;width:1px;height:235px;background:rgba(0,0,0,0.05);"></div>
<div style="left:598.5px;top:236.4px;width:1px;height:235px;background:rgba(0,0,0,0.05);"></div>
<div style="left:608.5px;top:236.4px;width:1px;height:235px;background:rgba(0,0,0,0.05);"></div>
<div style="left:617.5px;top:236.4px;width:1px;height:235px;background:rgba(0,0,0,0.05);"></div>
<div style="left:627.5px;top:236.4px;width:1px;height:235px;background:rgba(0,0,0,0.05);"></div>
<div style="left:636.5px;top:236.4px;width:1px;height:235px;background:rgba(0,0,0,0.05);"></div>
<div style="left:646.5px;top:236.4px;width:1px;height:235px;background:rgba(0,0,0,0.05);"></div>
<div style="left:655.5px;top:236.4px;width:1px;height:235px;background:rgba(0,0,0,0.05);"></div>
<div style="left:665.5px;top:236.4px;width:1px;height:235px;background:rgba(0,0,0,0.05);"></div>
<div style="left:675.5px;top:236.4px;width:1px;height:235px;background:rgba(0,0,0,0.05);"></div>
<div style="left:684.5px;top:236.4px;width:1px;height:235px;background:rgba(0,0,0,0.05);"></div>
<div style="left:694.5px;top:236.4px;width:1px;height:235px;background:rgba(0,0,0,0.05);"></div>
<div style="left:703.5px;top:236.4px;width:1px;height:235px;background:rgba(0,0,0,0.05);"></div>
<div style="left:713.5px;top:236.4px;width:1px;height:235px;background:rgba(0,0,0,0.05);"></div>
<div style="left:722.5px;top:236.4px;width:1px;height:235px;background:rgba(0,0,0,0.05);"></div>
<div style="left:732.5px;top:236.4px;width:1px;height:235px;background:rgba(0,0,0,0.05);"></div>
<div style="left:741.5px;top:236.4px;width:1px;height:235px;background:rgba(0,0,0,0.05);"></div>
<div style="left:751.5px;top:236.4px;width:1px;height:235px;background:rgba(0,0,0,0.05);"></div>
<div style="left:760.5px;top:236.4px;width:1px;height:235px;background:rgba(0,0,0,0.05);"></div>
<div style="left:770.5px;top:236.4px;width:1px;height:235px;background:rgba(0,0,0,0.05);"></div>
<div style="left:780.5px;top:236.4px;width:1px;height:235px;background:rgba(0,0,0,0.05);"></div>
<div style="left:789.5px;top:236.4px;width:1px;height:235px;background:rgba(0,0,0,0.05);"></div>
<div style="left:799.5px;top:236.4px;width:1px;height:235px;background:rgba(0,0,0,0.05);"></div>
<div style="left:808.5px;top:236.4px;width:1px;height:235px;background:rgba(0,0,0,0.05);"></div>
<div style="left:818.5px;top:236.4px;width:1px;height:235px;background:rgba(0,0,0,0.05);"></div>
<div style="left:827.5px;top:236.4px;width:1px;height:235px;background:rgba(0,0,0,0.05);"></div>
<div style="left:837.5px;top:236.4px;width:1px;height:235px;background:rgba(0,0,0,0.05);"></div>
<div style="left:846.5px;top:236.4px;width:1px;height:235px;background:rgba(0,0,0,0.05);"></div>
<div style="left:856.5px;top:236.4px;width:1px;height:235px;background:rgba(0,0,0,0.05);"></div>
<div style="left:865.5px;top:236.4px;width:1px;height:235px;background:rgba(0,0,0,0.05);"></div>
<div style="left:875.5px;top:236.4px;width:1px;height:235px;background:rgba(0,0,0,0.05);"></div>
<div style="left:885.5px;top:236.4px;width:1px;height:235px;background:rgba(0,0,0,0.05);"></div>
<div style="left:894.5px;top:236.4px;width:1px;height:235px;background:rgba(0,0,0,0.05);"></div>
<div style="left:455.85px;top:253.6px;width:305px;height:17.4px;background:#62fce3;"></div>
<div style="left:475.55px;top:267.8px;width:4.4px;height:2px;background:#15403a;"></div>
<div style="left:513.75px;top:267.8px;width:4.4px;height:2px;background:#15403a;"></div>
<div style="left:551.95px;top:267.8px;width:4.4px;height:2px;background:#15403a;"></div>
<div style="left:590.15px;top:267.8px;width:4.4px;height:2px;background:#15403a;"></div>
<div style="left:628.35px;top:267.8px;width:4.4px;height:2px;background:#15403a;"></div>
<div style="left:666.55px;top:267.8px;width:4.4px;height:2px;background:#15403a;"></div>
<div style="left:704.75px;top:267.8px;width:4.4px;height:2px;background:#15403a;"></div>
<div style="left:742.95px;top:267.8px;width:4.4px;height:2px;background:#15403a;"></div>
<div style="left:501.69px;top:267.8px;width:4.4px;height:2px;background:#15403a;"></div>
<div style="left:539.89px;top:267.8px;width:4.4px;height:2px;background:#15403a;"></div>
<div style="left:578.09px;top:267.8px;width:4.4px;height:2px;background:#15403a;"></div>
<div style="left:616.29px;top:267.8px;width:4.4px;height:2px;background:#15403a;"></div>
<div style="left:654.49px;top:267.8px;width:4.4px;height:2px;background:#15403a;"></div>
<div style="left:692.69px;top:267.8px;width:4.4px;height:2px;background:#15403a;"></div>
<div style="left:730.89px;top:267.8px;width:4.4px;height:2px;background:#15403a;"></div>
<div style="left:489.47px;top:259.5px;width:4.4px;height:2px;background:#15403a;"></div>
<div style="left:508.57px;top:259.5px;width:4.4px;height:2px;background:#15403a;"></div>
<div style="left:527.67px;top:259.5px;width:4.4px;height:2px;background:#15403a;"></div>
<div style="left:546.77px;top:259.5px;width:4.4px;height:2px;background:#15403a;"></div>
<div style="left:565.87px;top:259.5px;width:4.4px;height:2px;background:#15403a;"></div>
<div style="left:584.97px;top:259.5px;width:4.4px;height:2px;background:#15403a;"></div>
<div style="left:604.07px;top:259.5px;width:4.4px;height:2px;background:#15403a;"></div>
<div style="left:623.17px;top:259.5px;width:4.4px;height:2px;background:#15403a;"></div>
<div style="left:642.27px;top:259.5px;width:4.4px;height:2px;background:#15403a;"></div>
<div style="left:661.37px;top:259.5px;width:4.4px;height:2px;background:#15403a;"></div>
<div style="left:680.47px;top:259.5px;width:4.4px;height:2px;background:#15403a;"></div>
<div style="left:699.57px;top:259.5px;width:4.4px;height:2px;background:#15403a;"></div>
<div style="left:718.67px;top:259.5px;width:4.4px;height:2px;background:#15403a;"></div>
<div style="left:737.77px;top:259.5px;width:4.4px;height:2px;background:#15403a;"></div>
<div style="left:756.87px;top:259.5px;width:4.4px;height:2px;background:#15403a;"></div>
<div style="left:589.55px;top:272px;width:18.5px;height:12px;background:#62fce3;"></div>
<div style="left:742.35px;top:272px;width:18.5px;height:12px;background:#62fce3;"></div>
<div style="left:608.65px;top:285.2px;width:152.2px;height:12px;background:#edffae;"></div>
<div style="left:608.65px;top:298.4px;width:75.8px;height:12px;background:#fbf17c;"></div>
<div style="left:455.85px;top:312.5px;width:305.6px;height:4.7px;background:rgba(0,0,0,0.09);"></div>
<div style="left:455.85px;top:317.2px;width:305.6px;height:2.2px;background:rgba(255,255,255,0.10);"></div>
<div style="left:532.25px;top:337.6px;width:152.2px;height:59.8px;background:#ffa374;"></div>
<div style="left:532.25px;top:348px;width:152.2px;height:0.7px;background:#d98a60;"></div>
<div style="left:552px;top:365.2px;width:26.6px;height:1.9px;background:#3a2418;"></div>
<div style="left:590px;top:375.8px;width:11.4px;height:1.9px;background:#3a2418;"></div>
<div style="left:618.6px;top:354.8px;width:27.4px;height:1.9px;background:#3a2418;"></div>
<div style="left:532.4px;top:390.4px;width:132.6px;height:1.9px;background:#3a2418;"></div>
<div style="left:532.25px;top:396.4px;width:152.2px;height:1px;background:#c87850;"></div>
<div style="left:455.85px;top:398.6px;width:152.2px;height:11.8px;background:#ffa374;"></div>
<div style="left:608.65px;top:412px;width:152.2px;height:11.6px;background:#ffa374;"></div>
<div style="left:323.6px;top:425px;width:131.65px;height:33px;background:#ff94a6;"></div>
<div style="left:608.65px;top:425px;width:75.8px;height:33px;background:#ff94a6;"></div>
<div style="left:685.05px;top:425px;width:75.8px;height:33px;background:#ff94a6;"></div>
<div style="left:761.45px;top:425px;width:75.8px;height:33px;background:#ff94a6;"></div>
<div style="left:323.6px;top:436.2px;width:131.65px;height:0.7px;background:#e07e90;"></div>
<div style="left:608.65px;top:436.2px;width:228.6px;height:0.7px;background:#e07e90;"></div>
<span style="top:427px;font-size:6px;line-height:10px;color:#7a3040;left:326px;">...</span>
<svg style="left:436px;top:436px;" width="21" height="22.2" viewBox="0 0 21 22.2"><path d="M4 0.9 H19.4 V22 H12z" fill="#e47a90"/></svg>
<svg style="left:740px;top:436px;" width="98" height="22.2" viewBox="0 0 98 22.2"><path d="M6.8 0.9 H20.8 V22 H12.2z" fill="#e47a90"/><path d="M26 0.9 H96.2 V22 H62 C50 12 40 5 26 0.9z" fill="#e47a90"/></svg>
<div style="left:323.6px;top:445.8px;width:131.65px;height:1.4px;background:#7a2038;"></div>
<div style="left:608.65px;top:445.8px;width:228.6px;height:1.4px;background:#7a2038;"></div>
<div style="left:684px;top:425px;width:1px;height:33px;background:#d4708a;"></div>
<div style="left:760px;top:425px;width:1px;height:33px;background:#d4708a;"></div>
<div style="left:532.25px;top:237.8px;width:153.2px;height:6.4px;background:#d6d6d6;border:0.7px solid #4a4a4a;"></div>
<svg style="left:532.25px;top:237.8px;" width="7" height="6.4" viewBox="0 0 7 6.4"><path d="M0.4 0.4 L5.6 3.2 L0.4 6z" fill="#f0f0f0" stroke="#333" stroke-width="0.6"/></svg>
<svg style="left:678.45px;top:237.8px;" width="7" height="6.4" viewBox="0 0 7 6.4"><path d="M6.6 0.4 L1.4 3.2 L6.6 6z" fill="#f0f0f0" stroke="#333" stroke-width="0.6"/></svg>
<div style="left:532px;top:244px;width:0.9px;height:228px;background:#333;"></div>
<div style="left:685.2px;top:244px;width:0.9px;height:228px;background:#666;"></div>
<div style="left:618.2px;top:253px;width:0.9px;height:219px;background:#111;"></div>
<div style="left:529px;top:250px;width:6px;height:2px;background:#30d0d8;border-radius:50%;"></div>
<div style="left:323.6px;top:472px;width:580.4px;height:15px;background:#a3a3a3;"></div>
<div style="left:375.2px;top:474px;width:0.8px;height:6.6px;background:#6a6a6a;"></div>
<span style="top:474px;font-size:7px;line-height:10px;color:#4a4a4a;left:377.2px;">1:00</span>
<div style="left:444.6px;top:474px;width:0.8px;height:6.6px;background:#6a6a6a;"></div>
<span style="top:474px;font-size:7px;line-height:10px;color:#4a4a4a;left:446.6px;">1:05</span>
<div style="left:514px;top:474px;width:0.8px;height:6.6px;background:#6a6a6a;"></div>
<span style="top:474px;font-size:7px;line-height:10px;color:#4a4a4a;left:516px;">1:10</span>
<div style="left:583.4px;top:474px;width:0.8px;height:6.6px;background:#6a6a6a;"></div>
<span style="top:474px;font-size:7px;line-height:10px;color:#4a4a4a;left:585.4px;">1:15</span>
<div style="left:652.8px;top:474px;width:0.8px;height:6.6px;background:#6a6a6a;"></div>
<span style="top:474px;font-size:7px;line-height:10px;color:#4a4a4a;left:654.8px;">1:20</span>
<div style="left:722.2px;top:474px;width:0.8px;height:6.6px;background:#6a6a6a;"></div>
<span style="top:474px;font-size:7px;line-height:10px;color:#4a4a4a;left:724.2px;">1:25</span>
<div style="left:791.6px;top:474px;width:0.8px;height:6.6px;background:#6a6a6a;"></div>
<span style="top:474px;font-size:7px;line-height:10px;color:#4a4a4a;left:793.6px;">1:30</span>
<div style="left:861px;top:474px;width:0.8px;height:6.6px;background:#6a6a6a;"></div>
<span style="top:474px;font-size:7px;line-height:10px;color:#4a4a4a;left:863px;">1:35</span>
<div style="left:333.66px;top:472px;width:0.6px;height:1.6px;background:#7a7a7a;"></div>
<div style="left:347.54px;top:472px;width:0.6px;height:1.6px;background:#7a7a7a;"></div>
<div style="left:361.42px;top:472px;width:0.6px;height:1.6px;background:#7a7a7a;"></div>
<div style="left:375.3px;top:472px;width:0.6px;height:1.6px;background:#7a7a7a;"></div>
<div style="left:389.18px;top:472px;width:0.6px;height:1.6px;background:#7a7a7a;"></div>
<div style="left:403.06px;top:472px;width:0.6px;height:1.6px;background:#7a7a7a;"></div>
<div style="left:416.94px;top:472px;width:0.6px;height:1.6px;background:#7a7a7a;"></div>
<div style="left:430.82px;top:472px;width:0.6px;height:1.6px;background:#7a7a7a;"></div>
<div style="left:444.7px;top:472px;width:0.6px;height:1.6px;background:#7a7a7a;"></div>
<div style="left:458.58px;top:472px;width:0.6px;height:1.6px;background:#7a7a7a;"></div>
<div style="left:472.46px;top:472px;width:0.6px;height:1.6px;background:#7a7a7a;"></div>
<div style="left:486.34px;top:472px;width:0.6px;height:1.6px;background:#7a7a7a;"></div>
<div style="left:500.22px;top:472px;width:0.6px;height:1.6px;background:#7a7a7a;"></div>
<div style="left:514.1px;top:472px;width:0.6px;height:1.6px;background:#7a7a7a;"></div>
<div style="left:527.98px;top:472px;width:0.6px;height:1.6px;background:#7a7a7a;"></div>
<div style="left:541.86px;top:472px;width:0.6px;height:1.6px;background:#7a7a7a;"></div>
<div style="left:555.74px;top:472px;width:0.6px;height:1.6px;background:#7a7a7a;"></div>
<div style="left:569.62px;top:472px;width:0.6px;height:1.6px;background:#7a7a7a;"></div>
<div style="left:583.5px;top:472px;width:0.6px;height:1.6px;background:#7a7a7a;"></div>
<div style="left:597.38px;top:472px;width:0.6px;height:1.6px;background:#7a7a7a;"></div>
<div style="left:611.26px;top:472px;width:0.6px;height:1.6px;background:#7a7a7a;"></div>
<div style="left:625.14px;top:472px;width:0.6px;height:1.6px;background:#7a7a7a;"></div>
<div style="left:639.02px;top:472px;width:0.6px;height:1.6px;background:#7a7a7a;"></div>
<div style="left:652.9px;top:472px;width:0.6px;height:1.6px;background:#7a7a7a;"></div>
<div style="left:666.78px;top:472px;width:0.6px;height:1.6px;background:#7a7a7a;"></div>
<div style="left:680.66px;top:472px;width:0.6px;height:1.6px;background:#7a7a7a;"></div>
<div style="left:694.54px;top:472px;width:0.6px;height:1.6px;background:#7a7a7a;"></div>
<div style="left:708.42px;top:472px;width:0.6px;height:1.6px;background:#7a7a7a;"></div>
<div style="left:722.3px;top:472px;width:0.6px;height:1.6px;background:#7a7a7a;"></div>
<div style="left:736.18px;top:472px;width:0.6px;height:1.6px;background:#7a7a7a;"></div>
<div style="left:750.06px;top:472px;width:0.6px;height:1.6px;background:#7a7a7a;"></div>
<div style="left:763.94px;top:472px;width:0.6px;height:1.6px;background:#7a7a7a;"></div>
<div style="left:777.82px;top:472px;width:0.6px;height:1.6px;background:#7a7a7a;"></div>
<div style="left:791.7px;top:472px;width:0.6px;height:1.6px;background:#7a7a7a;"></div>
<div style="left:805.58px;top:472px;width:0.6px;height:1.6px;background:#7a7a7a;"></div>
<div style="left:819.46px;top:472px;width:0.6px;height:1.6px;background:#7a7a7a;"></div>
<div style="left:833.34px;top:472px;width:0.6px;height:1.6px;background:#7a7a7a;"></div>
<div style="left:847.22px;top:472px;width:0.6px;height:1.6px;background:#7a7a7a;"></div>
<div style="left:861.1px;top:472px;width:0.6px;height:1.6px;background:#7a7a7a;"></div>
<div style="left:874.98px;top:472px;width:0.6px;height:1.6px;background:#7a7a7a;"></div>
<div style="left:888.86px;top:472px;width:0.6px;height:1.6px;background:#7a7a7a;"></div>
<div style="left:902.74px;top:472px;width:0.6px;height:1.6px;background:#7a7a7a;"></div>
<div style="left:531px;top:473.6px;width:3.6px;height:1.8px;background:#30d0d8;"></div>
<div style="left:904px;top:225px;width:90px;height:28px;background:#a5a5a5;border-radius:0 3.5px 0 0;"></div>
<div style="left:904px;top:253px;width:1.6px;height:234px;background:#7c7c7c;"></div>
<div style="left:978px;top:253px;width:16px;height:219px;background:#a5a5a5;"></div>
<div style="left:978px;top:253px;width:1px;height:219px;background:#7c7c7c;"></div>
<div style="left:978px;top:252.8px;width:16px;height:0.8px;background:#7c7c7c;"></div>
<div style="left:978px;top:271px;width:16px;height:1px;background:#7c7c7c;"></div>
<div style="left:978px;top:284px;width:16px;height:1.2px;background:#7c7c7c;"></div>
<div style="left:978px;top:297.2px;width:16px;height:1.2px;background:#7c7c7c;"></div>
<div style="left:978px;top:310.4px;width:16px;height:1.2px;background:#7c7c7c;"></div>
<div style="left:978px;top:336px;width:16px;height:1.6px;background:#7c7c7c;"></div>
<div style="left:978px;top:397.4px;width:16px;height:1.2px;background:#7c7c7c;"></div>
<div style="left:978px;top:410.4px;width:16px;height:1.6px;background:#7c7c7c;"></div>
<div style="left:978px;top:423.6px;width:16px;height:1.4px;background:#7c7c7c;"></div>
<div style="left:978px;top:458px;width:16px;height:1.6px;background:#7c7c7c;"></div>
<div style="left:978px;top:471.4px;width:16px;height:0.6px;background:#7c7c7c;"></div>
<div style="left:904px;top:472px;width:90px;height:15px;background:#a3a3a3;"></div>
<div style="left:907.6px;top:228.6px;width:19.8px;height:9px;background:#c2c2c2;border:0.7px solid #2a2a2a;border-radius:4.6px;"></div>
<span style="top:229px;font-size:7.2px;line-height:10px;color:#1c1c1c;left:917.5px;transform:translateX(-50%);">Set</span>
<div style="left:935.6px;top:228.6px;width:15.4px;height:8.8px;background:#cacaca;border:0.7px solid #3a3a3a;"></div>
<svg style="left:935.6px;top:228.6px;" width="15.4" height="8.8" viewBox="0 0 15.4 8.8"><path d="M5.4 6.4 L10 2.6" stroke="#1c1c1c" stroke-width="1"/><circle cx="5.4" cy="6.2" r="1" fill="#1c1c1c"/><circle cx="10" cy="2.8" r="1" fill="#1c1c1c"/></svg>
<div style="left:955px;top:228.6px;width:15px;height:8.8px;background:#cacaca;border:0.7px solid #3a3a3a;"></div>
<svg style="left:955px;top:228.6px;" width="15" height="8.8" viewBox="0 0 15 8.8"><rect x="4.8" y="4" width="5.4" height="3.4" fill="#1c1c1c"/><path d="M5.8 4 V3 C5.8 1.2 9.2 1.2 9.2 3 V4" stroke="#1c1c1c" stroke-width="0.9" fill="none"/></svg>
<svg style="left:907.8px;top:241.2px;" width="8.4" height="8.4" viewBox="0 0 8.4 8.4"><circle cx="4.2" cy="4.2" r="3.6" fill="#c4c4c4" stroke="#2a2a2a" stroke-width="0.7"/><path d="M6.2 4.2 H2.2 M3.8000000000000003 2.6 L2.2 4.2 L3.8000000000000003 5.8" stroke="#1c1c1c" stroke-width="0.8" fill="none"/></svg>
<svg style="left:918.8px;top:241.2px;" width="8.4" height="8.4" viewBox="0 0 8.4 8.4"><circle cx="4.2" cy="4.2" r="3.6" fill="#c4c4c4" stroke="#2a2a2a" stroke-width="0.7"/><path d="M2.2 4.2 H6.2 M4.6000000000000005 2.6 L6.2 4.2 L4.6000000000000005 5.8" stroke="#1c1c1c" stroke-width="0.8" fill="none"/></svg>
<div style="left:905.6px;top:253.6px;width:72.4px;height:17.4px;background:#62fce3;"></div>
<div style="left:905.6px;top:272px;width:72.4px;height:12px;background:#62fce3;"></div>
<svg style="left:908px;top:273.6px;" width="8.8" height="8.8" viewBox="0 0 8.8 8.8"><circle cx="4.4" cy="4.4" r="4" fill="none" stroke="#155a52" stroke-width="0.8"/><path d="M3.4 2.4 L6.4 4.4 L3.4 6.4z" fill="#155a52"/></svg>
<span style="top:274px;font-size:7.2px;line-height:10px;color:#155a52;left:922px;font-weight:bold;">Bass Drop</span>
<div style="left:905.6px;top:285.2px;width:72.4px;height:12px;background:#edffae;"></div>
<svg style="left:908px;top:286.8px;" width="8.8" height="8.8" viewBox="0 0 8.8 8.8"><circle cx="4.4" cy="4.4" r="4" fill="none" stroke="#4c5434" stroke-width="0.8"/><path d="M3.4 2.4 L6.4 4.4 L3.4 6.4z" fill="#4c5434"/></svg>
<span style="top:287px;font-size:7.2px;line-height:10px;color:#4c5434;left:922px;font-weight:bold;">Synth Riser</span>
<div style="left:905.6px;top:298.4px;width:72.4px;height:12px;background:#fbf17c;"></div>
<svg style="left:908px;top:300px;" width="8.8" height="8.8" viewBox="0 0 8.8 8.8"><circle cx="4.4" cy="4.4" r="4" fill="none" stroke="#5a5424" stroke-width="0.8"/><path d="M3.4 2.4 L6.4 4.4 L3.4 6.4z" fill="#5a5424"/></svg>
<span style="top:300px;font-size:7.2px;line-height:10px;color:#5a5424;left:922px;font-weight:bold;">Keys</span>
<div style="left:905.6px;top:311.6px;width:72.4px;height:24.4px;background:#ffa374;"></div>
<div style="left:905.6px;top:336px;width:4px;height:87.6px;background:#ffa374;"></div>
<svg style="left:908px;top:313.4px;" width="8.8" height="8.8" viewBox="0 0 8.8 8.8"><circle cx="4.4" cy="4.4" r="3.7" fill="none" stroke="#7a3c22" stroke-width="0.8"/><path d="M2.8 3.2 L5.8 4.4 M3.2 5.4 H5.8 V3.6" stroke="#7a3c22" stroke-width="0.7" fill="none"/></svg>
<span style="top:313px;font-size:7.2px;line-height:10px;color:#6e3a22;left:921.6px;font-weight:bold;">Pads</span>
<div style="left:909.6px;top:337.6px;width:68.4px;height:59.8px;background:#ffa374;"></div>
<div style="left:909.6px;top:336px;width:68.4px;height:1.6px;background:#7c7c7c;"></div>
<div style="left:909px;top:336px;width:1px;height:87.6px;background:#8a5a40;"></div>
<svg style="left:912px;top:339px;" width="8.8" height="8.8" viewBox="0 0 8.8 8.8"><circle cx="4.4" cy="4.4" r="4" fill="none" stroke="#6e3a22" stroke-width="0.8"/><path d="M2.4 3.4 H6.4 L4.4 6.2z" fill="#6e3a22"/></svg>
<span style="top:339px;font-size:7.2px;line-height:10px;color:#6e3a22;left:925px;font-weight:bold;">Drift Pad</span>
<div style="left:909.6px;top:398.6px;width:68.4px;height:11.8px;background:#ffa374;"></div>
<svg style="left:912px;top:400.1px;" width="8.8" height="8.8" viewBox="0 0 8.8 8.8"><circle cx="4.4" cy="4.4" r="4" fill="none" stroke="#6e3a22" stroke-width="0.8"/><path d="M3.4 2.4 L6.4 4.4 L3.4 6.4z" fill="#6e3a22"/></svg>
<span style="top:400px;font-size:7.2px;line-height:10px;color:#6e3a22;left:925px;font-weight:bold;">Rain Pad</span>
<div style="left:909.6px;top:412px;width:68.4px;height:11.6px;background:#ffa374;"></div>
<svg style="left:912px;top:413.4px;" width="8.8" height="8.8" viewBox="0 0 8.8 8.8"><circle cx="4.4" cy="4.4" r="4" fill="none" stroke="#6e3a22" stroke-width="0.8"/><path d="M3.4 2.4 L6.4 4.4 L3.4 6.4z" fill="#6e3a22"/></svg>
<span style="top:413px;font-size:7.2px;line-height:10px;color:#6e3a22;left:925px;font-weight:bold;">Flangy Pad</span>
<div style="left:905.6px;top:425px;width:72.4px;height:33px;background:#ff94a6;"></div>
<svg style="left:908.4px;top:426.6px;" width="8.8" height="8.8" viewBox="0 0 8.8 8.8"><circle cx="4.4" cy="4.4" r="4" fill="none" stroke="#7a2a3e" stroke-width="0.8"/><path d="M2.4 3.4 H6.4 L4.4 6.2z" fill="#7a2a3e"/></svg>
<span style="top:427px;font-size:7.2px;line-height:10px;color:#7a2a3e;left:922.4px;font-weight:bold;">Ambience</span>
<div style="left:905.6px;top:459.6px;width:72.4px;height:11.8px;background:#ffffff;"></div>
<svg style="left:908.4px;top:461.1px;" width="8.8" height="8.8" viewBox="0 0 8.8 8.8"><circle cx="4.4" cy="4.4" r="4" fill="none" stroke="#3a3a3a" stroke-width="0.8"/><path d="M3.4 2.4 L6.4 4.4 L3.4 6.4z" fill="#3a3a3a"/></svg>
<span style="top:461px;font-size:7.5px;line-height:10px;color:#3a3a3a;left:923.6px;">Main</span>
<span style="top:461px;font-size:10.5px;line-height:10px;color:#7c7c7c;left:902.5px;transform:translateX(-100%);">1/2</span>
<div style="left:981px;top:254.4px;width:3px;height:15.6px;background:#22e866;"></div>
<div style="left:985px;top:254.4px;width:3px;height:15.6px;background:#22e866;"></div>
<div style="left:981.4px;top:273.4px;width:2.2px;height:1.8px;background:#3a3a2a;"></div>
<div style="left:985.4px;top:273.4px;width:2.2px;height:1.8px;background:#3a3a2a;"></div>
<div style="left:981.4px;top:276.2px;width:2.2px;height:1.8px;background:#4a4a2a;"></div>
<div style="left:985.4px;top:276.2px;width:2.2px;height:1.8px;background:#4a4a2a;"></div>
<div style="left:981.4px;top:278.8px;width:2.2px;height:4px;background:#22e866;"></div>
<div style="left:985.4px;top:278.8px;width:2.2px;height:4px;background:#22e866;"></div>
<div style="left:981.4px;top:286.6px;width:2.2px;height:1.8px;background:#3a3a2a;"></div>
<div style="left:985.4px;top:286.6px;width:2.2px;height:1.8px;background:#3a3a2a;"></div>
<div style="left:981.4px;top:289.4px;width:2.2px;height:1.8px;background:#4a4a2a;"></div>
<div style="left:985.4px;top:289.4px;width:2.2px;height:1.8px;background:#4a4a2a;"></div>
<div style="left:981.4px;top:292px;width:2.2px;height:4px;background:#22e866;"></div>
<div style="left:985.4px;top:292px;width:2.2px;height:4px;background:#22e866;"></div>
<div style="left:981.4px;top:299.8px;width:2.2px;height:1.8px;background:#3a3a2a;"></div>
<div style="left:985.4px;top:299.8px;width:2.2px;height:1.8px;background:#3a3a2a;"></div>
<div style="left:981.4px;top:302.6px;width:2.2px;height:1.8px;background:#4a4a2a;"></div>
<div style="left:985.4px;top:302.6px;width:2.2px;height:1.8px;background:#4a4a2a;"></div>
<div style="left:981.4px;top:305.2px;width:2.2px;height:4px;background:#22e866;"></div>
<div style="left:985.4px;top:305.2px;width:2.2px;height:4px;background:#22e866;"></div>
<div style="left:981.4px;top:400px;width:2.2px;height:1.8px;background:#3a3a2a;"></div>
<div style="left:985.4px;top:400px;width:2.2px;height:1.8px;background:#3a3a2a;"></div>
<div style="left:981.4px;top:402.8px;width:2.2px;height:1.8px;background:#4a4a2a;"></div>
<div style="left:985.4px;top:402.8px;width:2.2px;height:1.8px;background:#4a4a2a;"></div>
<div style="left:981.4px;top:405.4px;width:2.2px;height:3.8px;background:#22e866;"></div>
<div style="left:985.4px;top:405.4px;width:2.2px;height:3.8px;background:#22e866;"></div>
<div style="left:981.4px;top:413.4px;width:2.2px;height:1.8px;background:#3a3a2a;"></div>
<div style="left:985.4px;top:413.4px;width:2.2px;height:1.8px;background:#3a3a2a;"></div>
<div style="left:981.4px;top:416.2px;width:2.2px;height:1.8px;background:#4a4a2a;"></div>
<div style="left:985.4px;top:416.2px;width:2.2px;height:1.8px;background:#4a4a2a;"></div>
<div style="left:981.4px;top:418.8px;width:2.2px;height:3.6px;background:#22e866;"></div>
<div style="left:985.4px;top:418.8px;width:2.2px;height:3.6px;background:#22e866;"></div>
<div style="left:981px;top:312.4px;width:3px;height:22.8px;background:#2c2c2c;"></div>
<div style="left:985px;top:312.4px;width:3px;height:22.8px;background:#2c2c2c;"></div>
<div style="left:981px;top:321px;width:3px;height:14.2px;background:#22e866;"></div>
<div style="left:985px;top:321px;width:3px;height:14.2px;background:#22e866;"></div>
<div style="left:981px;top:318px;width:7px;height:3px;background:#b89a20;"></div>
<div style="left:981px;top:338.4px;width:3px;height:58.2px;background:#2c2c2c;"></div>
<div style="left:985px;top:338.4px;width:3px;height:58.2px;background:#2c2c2c;"></div>
<div style="left:981px;top:359px;width:3px;height:37.6px;background:#22e866;"></div>
<div style="left:985px;top:359px;width:3px;height:37.6px;background:#22e866;"></div>
<div style="left:981px;top:354.6px;width:7px;height:4.4px;background:#b8a428;"></div>
<div style="left:981px;top:426px;width:3px;height:31.2px;background:#2c2c2c;"></div>
<div style="left:985px;top:426px;width:3px;height:31.2px;background:#2c2c2c;"></div>
<div style="left:981px;top:455.6px;width:3px;height:1.6px;background:#22e866;"></div>
<div style="left:985px;top:455.6px;width:3px;height:1.6px;background:#22e866;"></div>
<div style="left:981px;top:460.4px;width:3px;height:10.2px;background:#22e866;"></div>
<div style="left:985px;top:460.4px;width:3px;height:10.2px;background:#22e866;"></div>
<div style="left:981px;top:460.4px;width:7px;height:1.2px;background:#e0a020;"></div>
<div style="left:906px;top:476px;width:10.4px;height:8.4px;background:#9c9c9c;border:0.7px solid #3a3a3a;"></div>
<svg style="left:906px;top:476px;" width="10.4" height="8.4" viewBox="0 0 10.4 8.4"><path d="M5.2 1.4 L8.2 4.2 L5.2 7 L2.2 4.2z" fill="#2a2a2a"/></svg>
<div style="left:919px;top:476px;width:23.4px;height:8.4px;background:#9c9c9c;border:0.7px solid #3a3a3a;"></div>
<span style="top:476px;font-size:7.2px;line-height:10px;color:#2a2a2a;left:930.7px;transform:translateX(-50%);">1.00x</span>
<div style="left:954.4px;top:476px;width:9.6px;height:8.4px;background:#b4b4b4;border:0.7px solid #3a3a3a;"></div>
<span style="top:476px;font-size:6.6px;line-height:10px;color:#2a2a2a;left:959.2px;transform:translateX(-50%);">H</span>
<div style="left:967px;top:476px;width:10px;height:8.4px;background:#b4b4b4;border:0.7px solid #3a3a3a;"></div>
<span style="top:476px;font-size:6.6px;line-height:10px;color:#2a2a2a;left:972px;transform:translateX(-50%);">W</span>
<div style="left:323.6px;top:489px;width:670.4px;height:156.6px;background:#7c7c7c;"></div>
<div style="left:323.6px;top:489px;width:48px;height:16.6px;background:#93a4ff;"></div>
<div style="left:323.6px;top:489px;width:40px;height:16.6px;overflow:hidden;">
<span style="top:6px;font-size:7.5px;line-height:10px;color:#27306e;left:-14px;font-weight:bold;">Drums</span>
</div>
<svg style="left:360px;top:495px;" width="8.8" height="8.8" viewBox="0 0 8.8 8.8"><circle cx="4.4" cy="4.4" r="3.7" fill="none" stroke="#27306e" stroke-width="0.8"/><path d="M2.4 3.4 H6.4 L4.4 6.2z" fill="#27306e"/></svg>
<div style="left:323.6px;top:507px;width:48px;height:133px;background:#a8a8a8;"></div>
<div style="left:323.6px;top:641px;width:48px;height:4.4px;background:#93a4ff;"></div>
<div style="left:323.6px;top:511px;width:12px;height:8.2px;overflow:hidden;"><div style="left:-11.6px;top:0;width:23.6px;height:8.2px;background:#dcdcdc;border:0.7px solid #333;border-radius:4.2px;"></div></div>
<span style="top:511px;font-size:7px;line-height:10px;color:#2a2a2a;left:332.6px;transform:translateX(-100%);">.31</span>
<div style="left:323.6px;top:523.4px;width:12px;height:8px;background:#dadada;border:0.6px solid #555;"></div>
<span style="top:523px;font-size:7px;line-height:10px;color:#2a2a2a;left:332.6px;transform:translateX(-100%);">.0</span>
<div style="left:347px;top:510px;width:9px;height:125.6px;background:#2b2b2b;border-radius:1.6px;"></div>
<div style="left:347.6px;top:564px;width:3.6px;height:70.6px;background:#22e866;"></div>
<div style="left:351.9px;top:568.4px;width:3.5px;height:66.2px;background:#22e866;"></div>
<div style="left:347.6px;top:536.6px;width:3.6px;height:1px;background:#d0a020;"></div>
<div style="left:351.9px;top:536.6px;width:3.5px;height:1px;background:#d0a020;"></div>
<div style="left:347.6px;top:634.4px;width:7.8px;height:1.2px;background:#22e866;border-radius:0 0 1.4px 1.4px;"></div>
<div style="left:351.2px;top:510.6px;width:0.7px;height:124.4px;background:#222;"></div>
<div style="left:347px;top:523.2px;width:9px;height:0.8px;background:#666;"></div>
<span style="top:509px;font-size:6.4px;line-height:10px;color:#4a4a4a;left:358.4px;">6</span>
<div style="left:344px;top:513.3px;width:2px;height:0.6px;background:#707070;"></div>
<span style="top:519px;font-size:6.4px;line-height:10px;color:#4a4a4a;left:358.4px;">0</span>
<div style="left:344px;top:523.3px;width:2px;height:0.6px;background:#707070;"></div>
<span style="top:531px;font-size:6.4px;line-height:10px;color:#4a4a4a;left:358.4px;">6</span>
<div style="left:344px;top:535.1px;width:2px;height:0.6px;background:#707070;"></div>
<span style="top:543px;font-size:6.4px;line-height:10px;color:#4a4a4a;left:358.4px;">12</span>
<div style="left:344px;top:547.3px;width:2px;height:0.6px;background:#707070;"></div>
<span style="top:556px;font-size:6.4px;line-height:10px;color:#4a4a4a;left:358.4px;">18</span>
<div style="left:344px;top:560.1px;width:2px;height:0.6px;background:#707070;"></div>
<span style="top:568px;font-size:6.4px;line-height:10px;color:#4a4a4a;left:358.4px;">24</span>
<div style="left:344px;top:572.1px;width:2px;height:0.6px;background:#707070;"></div>
<span style="top:580px;font-size:6.4px;line-height:10px;color:#4a4a4a;left:358.4px;">30</span>
<div style="left:344px;top:584.3px;width:2px;height:0.6px;background:#707070;"></div>
<span style="top:591px;font-size:6.4px;line-height:10px;color:#4a4a4a;left:358.4px;">36</span>
<div style="left:344px;top:595.3px;width:2px;height:0.6px;background:#707070;"></div>
<span style="top:601px;font-size:6.4px;line-height:10px;color:#4a4a4a;left:358.4px;">42</span>
<div style="left:344px;top:604.7px;width:2px;height:0.6px;background:#707070;"></div>
<span style="top:609px;font-size:6.4px;line-height:10px;color:#4a4a4a;left:358.4px;">48</span>
<div style="left:344px;top:612.9px;width:2px;height:0.6px;background:#707070;"></div>
<span style="top:622px;font-size:6.4px;line-height:10px;color:#4a4a4a;left:358.4px;">60</span>
<div style="left:344px;top:626.3px;width:2px;height:0.6px;background:#707070;"></div>
<svg style="left:338.8px;top:519.4px;" width="8" height="8.4" viewBox="0 0 8 8.4"><path d="M0.4 0.4 L7.6 4.2 L0.4 8z" fill="#151515"/></svg>
<div style="left:323.6px;top:570px;width:12.4px;height:30px;overflow:hidden;">
<svg style="left:-11px;top:4.2px;" width="22.8" height="22.8" viewBox="0 0 22.8 22.8"><path d="M6 17.83 A8.4 8.4 0 1 1 16.8 17.83" fill="none" stroke="#2a2a2a" stroke-width="1.5"/><path d="M11.4 11.4 V3" stroke="#2a2a2a" stroke-width="1.5"/><path d="M9.2 0 H13.600000000000001 L11.4 2.2z" fill="#2a2a2a"/></svg>
</div>
<div style="left:323.6px;top:596.4px;width:8px;height:15px;background:#ffb91a;border:0.5px solid #8a6410;"></div>
<span style="top:599px;font-size:8.6px;line-height:10px;color:#1c1c1c;left:330.1px;transform:translateX(-100%);font-weight:bold;">1</span>
<div style="left:323.6px;top:615px;width:8px;height:8.4px;background:#d2d2d2;border:0.6px solid #555;"></div>
<div style="left:323.6px;top:626.6px;width:8px;height:8.8px;background:#d2d2d2;border:0.6px solid #555;"></div>
<div style="left:373px;top:489px;width:64.6px;height:16.6px;background:#93a4ff;"></div>
<span style="top:495px;font-size:7.5px;line-height:10px;color:#27306e;left:376.4px;font-weight:bold;max-width:60.6px;overflow:hidden;">Breaks</span>
<div style="left:373px;top:507px;width:64.6px;height:133px;background:#a8a8a8;"></div>
<div style="left:373px;top:641px;width:64.6px;height:4.4px;background:#93a4ff;"></div>
<div style="left:378px;top:511px;width:23.6px;height:8.2px;overflow:hidden;"><div style="left:0px;top:0;width:23.6px;height:8.2px;background:#dcdcdc;border:0.7px solid #333;border-radius:4.2px;"></div></div>
<span style="top:511px;font-size:7px;line-height:10px;color:#2a2a2a;left:389.8px;transform:translateX(-50%);">-9.75</span>
<div style="left:378px;top:523.4px;width:23.6px;height:8px;background:#dadada;border:0.6px solid #555;"></div>
<span style="top:523px;font-size:7px;line-height:10px;color:#2a2a2a;left:389.8px;transform:translateX(-50%);">-9.4</span>
<div style="left:413px;top:510px;width:9px;height:125.6px;background:#2b2b2b;border-radius:1.6px;"></div>
<div style="left:413.6px;top:572px;width:3.6px;height:62.6px;background:#22e866;"></div>
<div style="left:417.9px;top:572px;width:3.5px;height:62.6px;background:#22e866;"></div>
<div style="left:413.6px;top:560px;width:3.6px;height:12px;background:#26b050;"></div>
<div style="left:417.9px;top:560px;width:3.5px;height:12px;background:#26b050;"></div>
<div style="left:413.6px;top:553px;width:3.6px;height:7px;background:#5cae40;"></div>
<div style="left:417.9px;top:553px;width:3.5px;height:7px;background:#5cae40;"></div>
<div style="left:413.6px;top:547.6px;width:3.6px;height:5.4px;background:#9aa838;"></div>
<div style="left:417.9px;top:545.8px;width:3.5px;height:7.2px;background:#9aa838;"></div>
<div style="left:413.6px;top:544.6px;width:3.6px;height:0.8px;background:#d0a020;"></div>
<div style="left:417.9px;top:544.6px;width:3.5px;height:0.8px;background:#d0a020;"></div>
<div style="left:413.6px;top:634.4px;width:7.8px;height:1.2px;background:#22e866;border-radius:0 0 1.4px 1.4px;"></div>
<div style="left:417.2px;top:510.6px;width:0.7px;height:124.4px;background:#222;"></div>
<div style="left:413px;top:523.2px;width:9px;height:0.8px;background:#666;"></div>
<span style="top:509px;font-size:6.4px;line-height:10px;color:#4a4a4a;left:424.4px;">6</span>
<div style="left:410px;top:513.3px;width:2px;height:0.6px;background:#707070;"></div>
<span style="top:519px;font-size:6.4px;line-height:10px;color:#4a4a4a;left:424.4px;">0</span>
<div style="left:410px;top:523.3px;width:2px;height:0.6px;background:#707070;"></div>
<span style="top:531px;font-size:6.4px;line-height:10px;color:#4a4a4a;left:424.4px;">6</span>
<div style="left:410px;top:535.1px;width:2px;height:0.6px;background:#707070;"></div>
<span style="top:543px;font-size:6.4px;line-height:10px;color:#4a4a4a;left:424.4px;">12</span>
<div style="left:410px;top:547.3px;width:2px;height:0.6px;background:#707070;"></div>
<span style="top:556px;font-size:6.4px;line-height:10px;color:#4a4a4a;left:424.4px;">18</span>
<div style="left:410px;top:560.1px;width:2px;height:0.6px;background:#707070;"></div>
<span style="top:568px;font-size:6.4px;line-height:10px;color:#4a4a4a;left:424.4px;">24</span>
<div style="left:410px;top:572.1px;width:2px;height:0.6px;background:#707070;"></div>
<span style="top:580px;font-size:6.4px;line-height:10px;color:#4a4a4a;left:424.4px;">30</span>
<div style="left:410px;top:584.3px;width:2px;height:0.6px;background:#707070;"></div>
<span style="top:591px;font-size:6.4px;line-height:10px;color:#4a4a4a;left:424.4px;">36</span>
<div style="left:410px;top:595.3px;width:2px;height:0.6px;background:#707070;"></div>
<span style="top:601px;font-size:6.4px;line-height:10px;color:#4a4a4a;left:424.4px;">42</span>
<div style="left:410px;top:604.7px;width:2px;height:0.6px;background:#707070;"></div>
<span style="top:609px;font-size:6.4px;line-height:10px;color:#4a4a4a;left:424.4px;">48</span>
<div style="left:410px;top:612.9px;width:2px;height:0.6px;background:#707070;"></div>
<span style="top:622px;font-size:6.4px;line-height:10px;color:#4a4a4a;left:424.4px;">60</span>
<div style="left:410px;top:626.3px;width:2px;height:0.6px;background:#707070;"></div>
<svg style="left:404.8px;top:538.4px;" width="8" height="8.4" viewBox="0 0 8 8.4"><path d="M0.4 0.4 L7.6 4.2 L0.4 8z" fill="#151515"/></svg>
<svg style="left:378.6px;top:574.2px;" width="22.8" height="22.8" viewBox="0 0 22.8 22.8"><path d="M6 17.83 A8.4 8.4 0 1 1 16.8 17.83" fill="none" stroke="#2a2a2a" stroke-width="1.5"/><path d="M11.4 11.4 V3" stroke="#2a2a2a" stroke-width="1.5"/><path d="M9.2 0 H13.600000000000001 L11.4 2.2z" fill="#2a2a2a"/></svg>
<div style="left:382.4px;top:596.4px;width:15.2px;height:15px;background:#ffb91a;border:0.5px solid #8a6410;"></div>
<span style="top:599px;font-size:8.6px;line-height:10px;color:#1c1c1c;left:390px;transform:translateX(-50%);font-weight:bold;">2</span>
<div style="left:382.4px;top:615px;width:15.2px;height:8.4px;background:#d2d2d2;border:0.6px solid #555;"></div>
<span style="top:615px;font-size:6.6px;line-height:10px;color:#2a2a2a;left:390px;transform:translateX(-50%);">S</span>
<div style="left:382.4px;top:626.6px;width:15.2px;height:8.8px;background:#d2d2d2;border:0.6px solid #555;"></div>
<div style="left:388.4px;top:629.4px;width:3.2px;height:3.2px;background:#777;border-radius:50%;"></div>
<div style="left:439px;top:489px;width:64.6px;height:16.6px;background:#8cc6ff;"></div>
<span style="top:495px;font-size:7.5px;line-height:10px;color:#1e4470;left:442.4px;font-weight:bold;max-width:60.6px;overflow:hidden;">Percussion</span>
<svg style="left:492px;top:495px;" width="8.8" height="8.8" viewBox="0 0 8.8 8.8"><circle cx="4.4" cy="4.4" r="3.7" fill="none" stroke="#1e4470" stroke-width="0.8"/><path d="M2.4 3.4 H6.4 L4.4 6.2z" fill="#1e4470"/></svg>
<div style="left:439px;top:507px;width:64.6px;height:133px;background:#a8a8a8;"></div>
<div style="left:439px;top:641px;width:64.6px;height:4.4px;background:#8cc6ff;"></div>
<div style="left:444px;top:511px;width:23.6px;height:8.2px;overflow:hidden;"><div style="left:0px;top:0;width:23.6px;height:8.2px;background:#dcdcdc;border:0.7px solid #333;border-radius:4.2px;"></div></div>
<span style="top:511px;font-size:7px;line-height:10px;color:#2a2a2a;left:455.8px;transform:translateX(-50%);">-9.26</span>
<div style="left:444px;top:523.4px;width:23.6px;height:8px;background:#dadada;border:0.6px solid #555;"></div>
<span style="top:523px;font-size:7px;line-height:10px;color:#2a2a2a;left:455.8px;transform:translateX(-50%);">0</span>
<div style="left:479px;top:510px;width:9px;height:125.6px;background:#2b2b2b;border-radius:1.6px;"></div>
<div style="left:479.6px;top:563.4px;width:3.6px;height:71.2px;background:#22e866;"></div>
<div style="left:483.9px;top:566px;width:3.5px;height:68.6px;background:#22e866;"></div>
<div style="left:479.6px;top:542.4px;width:3.6px;height:1px;background:#d0a020;"></div>
<div style="left:483.9px;top:542.4px;width:3.5px;height:1px;background:#d0a020;"></div>
<div style="left:479.6px;top:634.4px;width:7.8px;height:1.2px;background:#22e866;border-radius:0 0 1.4px 1.4px;"></div>
<div style="left:483.2px;top:510.6px;width:0.7px;height:124.4px;background:#222;"></div>
<div style="left:479px;top:523.2px;width:9px;height:0.8px;background:#666;"></div>
<span style="top:509px;font-size:6.4px;line-height:10px;color:#4a4a4a;left:490.4px;">6</span>
<div style="left:476px;top:513.3px;width:2px;height:0.6px;background:#707070;"></div>
<span style="top:519px;font-size:6.4px;line-height:10px;color:#4a4a4a;left:490.4px;">0</span>
<div style="left:476px;top:523.3px;width:2px;height:0.6px;background:#707070;"></div>
<span style="top:531px;font-size:6.4px;line-height:10px;color:#4a4a4a;left:490.4px;">6</span>
<div style="left:476px;top:535.1px;width:2px;height:0.6px;background:#707070;"></div>
<span style="top:543px;font-size:6.4px;line-height:10px;color:#4a4a4a;left:490.4px;">12</span>
<div style="left:476px;top:547.3px;width:2px;height:0.6px;background:#707070;"></div>
<span style="top:556px;font-size:6.4px;line-height:10px;color:#4a4a4a;left:490.4px;">18</span>
<div style="left:476px;top:560.1px;width:2px;height:0.6px;background:#707070;"></div>
<span style="top:568px;font-size:6.4px;line-height:10px;color:#4a4a4a;left:490.4px;">24</span>
<div style="left:476px;top:572.1px;width:2px;height:0.6px;background:#707070;"></div>
<span style="top:580px;font-size:6.4px;line-height:10px;color:#4a4a4a;left:490.4px;">30</span>
<div style="left:476px;top:584.3px;width:2px;height:0.6px;background:#707070;"></div>
<span style="top:591px;font-size:6.4px;line-height:10px;color:#4a4a4a;left:490.4px;">36</span>
<div style="left:476px;top:595.3px;width:2px;height:0.6px;background:#707070;"></div>
<span style="top:601px;font-size:6.4px;line-height:10px;color:#4a4a4a;left:490.4px;">42</span>
<div style="left:476px;top:604.7px;width:2px;height:0.6px;background:#707070;"></div>
<span style="top:609px;font-size:6.4px;line-height:10px;color:#4a4a4a;left:490.4px;">48</span>
<div style="left:476px;top:612.9px;width:2px;height:0.6px;background:#707070;"></div>
<span style="top:622px;font-size:6.4px;line-height:10px;color:#4a4a4a;left:490.4px;">60</span>
<div style="left:476px;top:626.3px;width:2px;height:0.6px;background:#707070;"></div>
<svg style="left:470.8px;top:519.4px;" width="8" height="8.4" viewBox="0 0 8 8.4"><path d="M0.4 0.4 L7.6 4.2 L0.4 8z" fill="#151515"/></svg>
<svg style="left:444.6px;top:574.2px;" width="22.8" height="22.8" viewBox="0 0 22.8 22.8"><path d="M6 17.83 A8.4 8.4 0 1 1 16.8 17.83" fill="none" stroke="#2a2a2a" stroke-width="1.5"/><path d="M11.4 11.4 V3" stroke="#2a2a2a" stroke-width="1.5"/><path d="M9.2 0 H13.600000000000001 L11.4 2.2z" fill="#2a2a2a"/></svg>
<div style="left:448.4px;top:596.4px;width:15.2px;height:15px;background:#ffb91a;border:0.5px solid #8a6410;"></div>
<span style="top:599px;font-size:8.6px;line-height:10px;color:#1c1c1c;left:456px;transform:translateX(-50%);font-weight:bold;">3</span>
<div style="left:448.4px;top:615px;width:15.2px;height:8.4px;background:#d2d2d2;border:0.6px solid #555;"></div>
<span style="top:615px;font-size:6.6px;line-height:10px;color:#2a2a2a;left:456px;transform:translateX(-50%);">S</span>
<div style="left:505px;top:489px;width:64.6px;height:16.6px;background:#62fce3;"></div>
<span style="top:495px;font-size:7.5px;line-height:10px;color:#155a52;left:508.4px;font-weight:bold;max-width:60.6px;overflow:hidden;">Bass</span>
<div style="left:505px;top:507px;width:64.6px;height:133px;background:#a8a8a8;"></div>
<div style="left:505px;top:641px;width:64.6px;height:4.4px;background:#62fce3;"></div>
<div style="left:510px;top:511px;width:23.6px;height:8.2px;overflow:hidden;"><div style="left:0px;top:0;width:23.6px;height:8.2px;background:#dcdcdc;border:0.7px solid #333;border-radius:4.2px;"></div></div>
<span style="top:511px;font-size:7px;line-height:10px;color:#2a2a2a;left:521.8px;transform:translateX(-50%);">-10.8</span>
<div style="left:510px;top:523.4px;width:23.6px;height:8px;background:#dadada;border:0.6px solid #555;"></div>
<span style="top:523px;font-size:7px;line-height:10px;color:#2a2a2a;left:521.8px;transform:translateX(-50%);">-7.7</span>
<div style="left:545px;top:510px;width:9px;height:125.6px;background:#2b2b2b;border-radius:1.6px;"></div>
<div style="left:545.6px;top:558.6px;width:3.6px;height:76px;background:#22e866;"></div>
<div style="left:549.9px;top:558.6px;width:3.5px;height:76px;background:#22e866;"></div>
<div style="left:545.6px;top:553px;width:3.6px;height:5.6px;background:#8cd84a;"></div>
<div style="left:549.9px;top:553px;width:3.5px;height:5.6px;background:#8cd84a;"></div>
<div style="left:545.6px;top:547.6px;width:3.6px;height:5.4px;background:#c4b830;"></div>
<div style="left:549.9px;top:547.6px;width:3.5px;height:5.4px;background:#c4b830;"></div>
<div style="left:545.6px;top:542.6px;width:3.6px;height:1px;background:#d0a020;"></div>
<div style="left:549.9px;top:542.6px;width:3.5px;height:1px;background:#d0a020;"></div>
<div style="left:545.6px;top:634.4px;width:7.8px;height:1.2px;background:#22e866;border-radius:0 0 1.4px 1.4px;"></div>
<div style="left:549.2px;top:510.6px;width:0.7px;height:124.4px;background:#222;"></div>
<div style="left:545px;top:523.2px;width:9px;height:0.8px;background:#666;"></div>
<span style="top:509px;font-size:6.4px;line-height:10px;color:#4a4a4a;left:556.4px;">6</span>
<div style="left:542px;top:513.3px;width:2px;height:0.6px;background:#707070;"></div>
<span style="top:519px;font-size:6.4px;line-height:10px;color:#4a4a4a;left:556.4px;">0</span>
<div style="left:542px;top:523.3px;width:2px;height:0.6px;background:#707070;"></div>
<span style="top:531px;font-size:6.4px;line-height:10px;color:#4a4a4a;left:556.4px;">6</span>
<div style="left:542px;top:535.1px;width:2px;height:0.6px;background:#707070;"></div>
<span style="top:543px;font-size:6.4px;line-height:10px;color:#4a4a4a;left:556.4px;">12</span>
<div style="left:542px;top:547.3px;width:2px;height:0.6px;background:#707070;"></div>
<span style="top:556px;font-size:6.4px;line-height:10px;color:#4a4a4a;left:556.4px;">18</span>
<div style="left:542px;top:560.1px;width:2px;height:0.6px;background:#707070;"></div>
<span style="top:568px;font-size:6.4px;line-height:10px;color:#4a4a4a;left:556.4px;">24</span>
<div style="left:542px;top:572.1px;width:2px;height:0.6px;background:#707070;"></div>
<span style="top:580px;font-size:6.4px;line-height:10px;color:#4a4a4a;left:556.4px;">30</span>
<div style="left:542px;top:584.3px;width:2px;height:0.6px;background:#707070;"></div>
<span style="top:591px;font-size:6.4px;line-height:10px;color:#4a4a4a;left:556.4px;">36</span>
<div style="left:542px;top:595.3px;width:2px;height:0.6px;background:#707070;"></div>
<span style="top:601px;font-size:6.4px;line-height:10px;color:#4a4a4a;left:556.4px;">42</span>
<div style="left:542px;top:604.7px;width:2px;height:0.6px;background:#707070;"></div>
<span style="top:609px;font-size:6.4px;line-height:10px;color:#4a4a4a;left:556.4px;">48</span>
<div style="left:542px;top:612.9px;width:2px;height:0.6px;background:#707070;"></div>
<span style="top:622px;font-size:6.4px;line-height:10px;color:#4a4a4a;left:556.4px;">60</span>
<div style="left:542px;top:626.3px;width:2px;height:0.6px;background:#707070;"></div>
<svg style="left:536.8px;top:535.3px;" width="8" height="8.4" viewBox="0 0 8 8.4"><path d="M0.4 0.4 L7.6 4.2 L0.4 8z" fill="#151515"/></svg>
<svg style="left:510.6px;top:574.2px;" width="22.8" height="22.8" viewBox="0 0 22.8 22.8"><path d="M6 17.83 A8.4 8.4 0 1 1 16.8 17.83" fill="none" stroke="#2a2a2a" stroke-width="1.5"/><path d="M11.4 11.4 V3" stroke="#2a2a2a" stroke-width="1.5"/><path d="M9.2 0 H13.600000000000001 L11.4 2.2z" fill="#2a2a2a"/></svg>
<div style="left:514.4px;top:596.4px;width:15.2px;height:15px;background:#ffb91a;border:0.5px solid #8a6410;"></div>
<span style="top:599px;font-size:8.6px;line-height:10px;color:#1c1c1c;left:522px;transform:translateX(-50%);font-weight:bold;">8</span>
<div style="left:514.4px;top:615px;width:15.2px;height:8.4px;background:#d2d2d2;border:0.6px solid #555;"></div>
<span style="top:615px;font-size:6.6px;line-height:10px;color:#2a2a2a;left:522px;transform:translateX(-50%);">S</span>
<div style="left:514.4px;top:626.6px;width:15.2px;height:8.8px;background:#d2d2d2;border:0.6px solid #555;"></div>
<svg style="left:519.6px;top:628.6px;" width="4.8" height="4.8" viewBox="0 0 4.8 4.8"><circle cx="2.4" cy="2.4" r="2.1" fill="#222"/><path d="M2.4 1 V2.4 L3.2 3.2" stroke="#ddd" stroke-width="0.6" fill="none"/></svg>
<div style="left:571px;top:489px;width:64.6px;height:16.6px;background:#62fce3;"></div>
<span style="top:495px;font-size:7.5px;line-height:10px;color:#155a52;left:574.4px;font-weight:bold;max-width:60.6px;overflow:hidden;">Bass Drop</span>
<svg style="left:624px;top:495px;" width="8.8" height="8.8" viewBox="0 0 8.8 8.8"><circle cx="4.4" cy="4.4" r="3.7" fill="none" stroke="#155a52" stroke-width="0.8"/><path d="M2.4 3.4 H6.4 L4.4 6.2z" fill="#155a52"/></svg>
<div style="left:571px;top:507px;width:64.6px;height:133px;background:#a8a8a8;"></div>
<div style="left:571px;top:641px;width:64.6px;height:4.4px;background:#62fce3;"></div>
<div style="left:576px;top:511px;width:23.6px;height:8.2px;overflow:hidden;"><div style="left:0px;top:0;width:23.6px;height:8.2px;background:#dcdcdc;border:0.7px solid #333;border-radius:4.2px;"></div></div>
<span style="top:511px;font-size:7px;line-height:10px;color:#2a2a2a;left:587.8px;transform:translateX(-50%);">-11.3</span>
<div style="left:576px;top:523.4px;width:23.6px;height:8px;background:#dadada;border:0.6px solid #555;"></div>
<span style="top:523px;font-size:7px;line-height:10px;color:#2a2a2a;left:587.8px;transform:translateX(-50%);">-0.2</span>
<div style="left:611px;top:510px;width:9px;height:125.6px;background:#2b2b2b;border-radius:1.6px;"></div>
<div style="left:611.6px;top:572.6px;width:3.6px;height:62px;background:#22e866;"></div>
<div style="left:615.9px;top:572.6px;width:3.5px;height:62px;background:#22e866;"></div>
<div style="left:611.6px;top:546.6px;width:3.6px;height:1px;background:#d0a020;"></div>
<div style="left:615.9px;top:546.6px;width:3.5px;height:1px;background:#d0a020;"></div>
<div style="left:611.6px;top:634.4px;width:7.8px;height:1.2px;background:#22e866;border-radius:0 0 1.4px 1.4px;"></div>
<div style="left:615.2px;top:510.6px;width:0.7px;height:124.4px;background:#222;"></div>
<div style="left:611px;top:523.2px;width:9px;height:0.8px;background:#666;"></div>
<span style="top:509px;font-size:6.4px;line-height:10px;color:#4a4a4a;left:622.4px;">6</span>
<div style="left:608px;top:513.3px;width:2px;height:0.6px;background:#707070;"></div>
<span style="top:519px;font-size:6.4px;line-height:10px;color:#4a4a4a;left:622.4px;">0</span>
<div style="left:608px;top:523.3px;width:2px;height:0.6px;background:#707070;"></div>
<span style="top:531px;font-size:6.4px;line-height:10px;color:#4a4a4a;left:622.4px;">6</span>
<div style="left:608px;top:535.1px;width:2px;height:0.6px;background:#707070;"></div>
<span style="top:543px;font-size:6.4px;line-height:10px;color:#4a4a4a;left:622.4px;">12</span>
<div style="left:608px;top:547.3px;width:2px;height:0.6px;background:#707070;"></div>
<span style="top:556px;font-size:6.4px;line-height:10px;color:#4a4a4a;left:622.4px;">18</span>
<div style="left:608px;top:560.1px;width:2px;height:0.6px;background:#707070;"></div>
<span style="top:568px;font-size:6.4px;line-height:10px;color:#4a4a4a;left:622.4px;">24</span>
<div style="left:608px;top:572.1px;width:2px;height:0.6px;background:#707070;"></div>
<span style="top:580px;font-size:6.4px;line-height:10px;color:#4a4a4a;left:622.4px;">30</span>
<div style="left:608px;top:584.3px;width:2px;height:0.6px;background:#707070;"></div>
<span style="top:591px;font-size:6.4px;line-height:10px;color:#4a4a4a;left:622.4px;">36</span>
<div style="left:608px;top:595.3px;width:2px;height:0.6px;background:#707070;"></div>
<span style="top:601px;font-size:6.4px;line-height:10px;color:#4a4a4a;left:622.4px;">42</span>
<div style="left:608px;top:604.7px;width:2px;height:0.6px;background:#707070;"></div>
<span style="top:609px;font-size:6.4px;line-height:10px;color:#4a4a4a;left:622.4px;">48</span>
<div style="left:608px;top:612.9px;width:2px;height:0.6px;background:#707070;"></div>
<span style="top:622px;font-size:6.4px;line-height:10px;color:#4a4a4a;left:622.4px;">60</span>
<div style="left:608px;top:626.3px;width:2px;height:0.6px;background:#707070;"></div>
<svg style="left:602.8px;top:519.4px;" width="8" height="8.4" viewBox="0 0 8 8.4"><path d="M0.4 0.4 L7.6 4.2 L0.4 8z" fill="#151515"/></svg>
<svg style="left:576.6px;top:574.2px;" width="22.8" height="22.8" viewBox="0 0 22.8 22.8"><path d="M6 17.83 A8.4 8.4 0 1 1 16.8 17.83" fill="none" stroke="#2a2a2a" stroke-width="1.5"/><path d="M11.4 11.4 V3" stroke="#2a2a2a" stroke-width="1.5"/><path d="M9.2 0 H13.600000000000001 L11.4 2.2z" fill="#2a2a2a"/></svg>
<div style="left:580.4px;top:596.4px;width:15.2px;height:15px;background:#ffb91a;border:0.5px solid #8a6410;"></div>
<span style="top:599px;font-size:8.6px;line-height:10px;color:#1c1c1c;left:588px;transform:translateX(-50%);font-weight:bold;">9</span>
<div style="left:580.4px;top:615px;width:15.2px;height:8.4px;background:#d2d2d2;border:0.6px solid #555;"></div>
<span style="top:615px;font-size:6.6px;line-height:10px;color:#2a2a2a;left:588px;transform:translateX(-50%);">S</span>
<div style="left:580.4px;top:626.6px;width:15.2px;height:8.8px;background:#d2d2d2;border:0.6px solid #555;"></div>
<svg style="left:585.6px;top:628.6px;" width="4.8" height="4.8" viewBox="0 0 4.8 4.8"><circle cx="2.4" cy="2.4" r="2.1" fill="#222"/><path d="M2.4 1 V2.4 L3.2 3.2" stroke="#ddd" stroke-width="0.6" fill="none"/></svg>
<div style="left:637px;top:489px;width:64.6px;height:16.6px;background:#edffae;"></div>
<span style="top:495px;font-size:7.5px;line-height:10px;color:#4c5434;left:640.4px;font-weight:bold;max-width:60.6px;overflow:hidden;">Synth Riser</span>
<svg style="left:690px;top:495px;" width="8.8" height="8.8" viewBox="0 0 8.8 8.8"><circle cx="4.4" cy="4.4" r="3.7" fill="none" stroke="#4c5434" stroke-width="0.8"/><path d="M2.4 3.4 H6.4 L4.4 6.2z" fill="#4c5434"/></svg>
<div style="left:637px;top:507px;width:64.6px;height:133px;background:#a8a8a8;"></div>
<div style="left:637px;top:641px;width:64.6px;height:4.4px;background:#edffae;"></div>
<div style="left:642px;top:511px;width:23.6px;height:8.2px;overflow:hidden;"><div style="left:0px;top:0;width:23.6px;height:8.2px;background:#dcdcdc;border:0.7px solid #333;border-radius:4.2px;"></div></div>
<span style="top:511px;font-size:7px;line-height:10px;color:#2a2a2a;left:653.8px;transform:translateX(-50%);">-47.4</span>
<div style="left:642px;top:523.4px;width:23.6px;height:8px;background:#dadada;border:0.6px solid #555;"></div>
<span style="top:523px;font-size:7px;line-height:10px;color:#2a2a2a;left:653.8px;transform:translateX(-50%);">-18.0</span>
<div style="left:677px;top:510px;width:9px;height:125.6px;background:#2b2b2b;border-radius:1.6px;"></div>
<div style="left:677.6px;top:616.4px;width:3.6px;height:18.2px;background:#22e866;"></div>
<div style="left:681.9px;top:616.4px;width:3.5px;height:18.2px;background:#22e866;"></div>
<div style="left:677.6px;top:613px;width:3.6px;height:3.4px;background:#1fb050;"></div>
<div style="left:681.9px;top:613px;width:3.5px;height:3.4px;background:#1fb050;"></div>
<div style="left:677.6px;top:594.6px;width:3.6px;height:1px;background:#20c060;"></div>
<div style="left:681.9px;top:594.6px;width:3.5px;height:1px;background:#20c060;"></div>
<div style="left:677.6px;top:634.4px;width:7.8px;height:1.2px;background:#22e866;border-radius:0 0 1.4px 1.4px;"></div>
<div style="left:681.2px;top:510.6px;width:0.7px;height:124.4px;background:#222;"></div>
<div style="left:677px;top:523.2px;width:9px;height:0.8px;background:#666;"></div>
<span style="top:509px;font-size:6.4px;line-height:10px;color:#4a4a4a;left:688.4px;">6</span>
<div style="left:674px;top:513.3px;width:2px;height:0.6px;background:#707070;"></div>
<span style="top:519px;font-size:6.4px;line-height:10px;color:#4a4a4a;left:688.4px;">0</span>
<div style="left:674px;top:523.3px;width:2px;height:0.6px;background:#707070;"></div>
<span style="top:531px;font-size:6.4px;line-height:10px;color:#4a4a4a;left:688.4px;">6</span>
<div style="left:674px;top:535.1px;width:2px;height:0.6px;background:#707070;"></div>
<span style="top:543px;font-size:6.4px;line-height:10px;color:#4a4a4a;left:688.4px;">12</span>
<div style="left:674px;top:547.3px;width:2px;height:0.6px;background:#707070;"></div>
<span style="top:556px;font-size:6.4px;line-height:10px;color:#4a4a4a;left:688.4px;">18</span>
<div style="left:674px;top:560.1px;width:2px;height:0.6px;background:#707070;"></div>
<span style="top:568px;font-size:6.4px;line-height:10px;color:#4a4a4a;left:688.4px;">24</span>
<div style="left:674px;top:572.1px;width:2px;height:0.6px;background:#707070;"></div>
<span style="top:580px;font-size:6.4px;line-height:10px;color:#4a4a4a;left:688.4px;">30</span>
<div style="left:674px;top:584.3px;width:2px;height:0.6px;background:#707070;"></div>
<span style="top:591px;font-size:6.4px;line-height:10px;color:#4a4a4a;left:688.4px;">36</span>
<div style="left:674px;top:595.3px;width:2px;height:0.6px;background:#707070;"></div>
<span style="top:601px;font-size:6.4px;line-height:10px;color:#4a4a4a;left:688.4px;">42</span>
<div style="left:674px;top:604.7px;width:2px;height:0.6px;background:#707070;"></div>
<span style="top:609px;font-size:6.4px;line-height:10px;color:#4a4a4a;left:688.4px;">48</span>
<div style="left:674px;top:612.9px;width:2px;height:0.6px;background:#707070;"></div>
<span style="top:622px;font-size:6.4px;line-height:10px;color:#4a4a4a;left:688.4px;">60</span>
<div style="left:674px;top:626.3px;width:2px;height:0.6px;background:#707070;"></div>
<svg style="left:668.8px;top:556.4px;" width="8" height="8.4" viewBox="0 0 8 8.4"><path d="M0.4 0.4 L7.6 4.2 L0.4 8z" fill="#151515"/></svg>
<svg style="left:642.6px;top:574.2px;" width="22.8" height="22.8" viewBox="0 0 22.8 22.8"><path d="M6 17.83 A8.4 8.4 0 1 1 16.8 17.83" fill="none" stroke="#2a2a2a" stroke-width="1.5"/><path d="M11.4 11.4 V3" stroke="#2a2a2a" stroke-width="1.5"/><path d="M9.2 0 H13.600000000000001 L11.4 2.2z" fill="#2a2a2a"/></svg>
<div style="left:646.4px;top:596.4px;width:15.2px;height:15px;background:#ffb91a;border:0.5px solid #8a6410;"></div>
<span style="top:599px;font-size:8.6px;line-height:10px;color:#1c1c1c;left:654px;transform:translateX(-50%);font-weight:bold;">10</span>
<div style="left:646.4px;top:615px;width:15.2px;height:8.4px;background:#d2d2d2;border:0.6px solid #555;"></div>
<span style="top:615px;font-size:6.6px;line-height:10px;color:#2a2a2a;left:654px;transform:translateX(-50%);">S</span>
<div style="left:646.4px;top:626.6px;width:15.2px;height:8.8px;background:#d2d2d2;border:0.6px solid #555;"></div>
<svg style="left:651.6px;top:628.6px;" width="4.8" height="4.8" viewBox="0 0 4.8 4.8"><circle cx="2.4" cy="2.4" r="2.1" fill="#222"/><path d="M2.4 1 V2.4 L3.2 3.2" stroke="#ddd" stroke-width="0.6" fill="none"/></svg>
<div style="left:703px;top:489px;width:64.6px;height:16.6px;background:#fbf17c;"></div>
<span style="top:495px;font-size:7.5px;line-height:10px;color:#5a5424;left:706.4px;font-weight:bold;max-width:60.6px;overflow:hidden;">Keys</span>
<div style="left:703px;top:507px;width:64.6px;height:133px;background:#a8a8a8;"></div>
<div style="left:703px;top:641px;width:64.6px;height:4.4px;background:#fbf17c;"></div>
<div style="left:708px;top:511px;width:23.6px;height:8.2px;overflow:hidden;"><div style="left:0px;top:0;width:23.6px;height:8.2px;background:#dcdcdc;border:0.7px solid #333;border-radius:4.2px;"></div></div>
<span style="top:511px;font-size:7px;line-height:10px;color:#2a2a2a;left:719.8px;transform:translateX(-50%);">-19.4</span>
<div style="left:708px;top:523.4px;width:23.6px;height:8px;background:#dadada;border:0.6px solid #555;"></div>
<span style="top:523px;font-size:7px;line-height:10px;color:#2a2a2a;left:719.8px;transform:translateX(-50%);">-6.6</span>
<div style="left:743px;top:510px;width:9px;height:125.6px;background:#2b2b2b;border-radius:1.6px;"></div>
<div style="left:743.6px;top:585px;width:3.6px;height:49.6px;background:#22e866;"></div>
<div style="left:747.9px;top:585px;width:3.5px;height:49.6px;background:#22e866;"></div>
<div style="left:743.6px;top:577px;width:3.6px;height:8px;background:#1fae4e;"></div>
<div style="left:747.9px;top:579px;width:3.5px;height:6px;background:#1fae4e;"></div>
<div style="left:743.6px;top:568.6px;width:3.6px;height:1px;background:#20c060;"></div>
<div style="left:747.9px;top:562.6px;width:3.5px;height:1px;background:#20c060;"></div>
<div style="left:743.6px;top:634.4px;width:7.8px;height:1.2px;background:#22e866;border-radius:0 0 1.4px 1.4px;"></div>
<div style="left:747.2px;top:510.6px;width:0.7px;height:124.4px;background:#222;"></div>
<div style="left:743px;top:523.2px;width:9px;height:0.8px;background:#666;"></div>
<span style="top:509px;font-size:6.4px;line-height:10px;color:#4a4a4a;left:754.4px;">6</span>
<div style="left:740px;top:513.3px;width:2px;height:0.6px;background:#707070;"></div>
<span style="top:519px;font-size:6.4px;line-height:10px;color:#4a4a4a;left:754.4px;">0</span>
<div style="left:740px;top:523.3px;width:2px;height:0.6px;background:#707070;"></div>
<span style="top:531px;font-size:6.4px;line-height:10px;color:#4a4a4a;left:754.4px;">6</span>
<div style="left:740px;top:535.1px;width:2px;height:0.6px;background:#707070;"></div>
<span style="top:543px;font-size:6.4px;line-height:10px;color:#4a4a4a;left:754.4px;">12</span>
<div style="left:740px;top:547.3px;width:2px;height:0.6px;background:#707070;"></div>
<span style="top:556px;font-size:6.4px;line-height:10px;color:#4a4a4a;left:754.4px;">18</span>
<div style="left:740px;top:560.1px;width:2px;height:0.6px;background:#707070;"></div>
<span style="top:568px;font-size:6.4px;line-height:10px;color:#4a4a4a;left:754.4px;">24</span>
<div style="left:740px;top:572.1px;width:2px;height:0.6px;background:#707070;"></div>
<span style="top:580px;font-size:6.4px;line-height:10px;color:#4a4a4a;left:754.4px;">30</span>
<div style="left:740px;top:584.3px;width:2px;height:0.6px;background:#707070;"></div>
<span style="top:591px;font-size:6.4px;line-height:10px;color:#4a4a4a;left:754.4px;">36</span>
<div style="left:740px;top:595.3px;width:2px;height:0.6px;background:#707070;"></div>
<span style="top:601px;font-size:6.4px;line-height:10px;color:#4a4a4a;left:754.4px;">42</span>
<div style="left:740px;top:604.7px;width:2px;height:0.6px;background:#707070;"></div>
<span style="top:609px;font-size:6.4px;line-height:10px;color:#4a4a4a;left:754.4px;">48</span>
<div style="left:740px;top:612.9px;width:2px;height:0.6px;background:#707070;"></div>
<span style="top:622px;font-size:6.4px;line-height:10px;color:#4a4a4a;left:754.4px;">60</span>
<div style="left:740px;top:626.3px;width:2px;height:0.6px;background:#707070;"></div>
<svg style="left:734.8px;top:532.8px;" width="8" height="8.4" viewBox="0 0 8 8.4"><path d="M0.4 0.4 L7.6 4.2 L0.4 8z" fill="#151515"/></svg>
<svg style="left:708.6px;top:574.2px;" width="22.8" height="22.8" viewBox="0 0 22.8 22.8"><path d="M6 17.83 A8.4 8.4 0 1 1 16.8 17.83" fill="none" stroke="#2a2a2a" stroke-width="1.5"/><path d="M11.4 11.4 V3" stroke="#2a2a2a" stroke-width="1.5"/><path d="M9.2 0 H13.600000000000001 L11.4 2.2z" fill="#2a2a2a"/></svg>
<div style="left:712.4px;top:596.4px;width:15.2px;height:15px;background:#ffb91a;border:0.5px solid #8a6410;"></div>
<span style="top:599px;font-size:8.6px;line-height:10px;color:#1c1c1c;left:720px;transform:translateX(-50%);font-weight:bold;">11</span>
<div style="left:712.4px;top:615px;width:15.2px;height:8.4px;background:#d2d2d2;border:0.6px solid #555;"></div>
<span style="top:615px;font-size:6.6px;line-height:10px;color:#2a2a2a;left:720px;transform:translateX(-50%);">S</span>
<div style="left:712.4px;top:626.6px;width:15.2px;height:8.8px;background:#d2d2d2;border:0.6px solid #555;"></div>
<svg style="left:717.6px;top:628.6px;" width="4.8" height="4.8" viewBox="0 0 4.8 4.8"><circle cx="2.4" cy="2.4" r="2.1" fill="#222"/><path d="M2.4 1 V2.4 L3.2 3.2" stroke="#ddd" stroke-width="0.6" fill="none"/></svg>
<div style="left:769px;top:489px;width:64.6px;height:16.6px;background:#ffa374;"></div>
<span style="top:495px;font-size:7.5px;line-height:10px;color:#6e3a22;left:772.4px;font-weight:bold;max-width:60.6px;overflow:hidden;">Pads</span>
<svg style="left:822px;top:495px;" width="8.8" height="8.8" viewBox="0 0 8.8 8.8"><circle cx="4.4" cy="4.4" r="3.7" fill="none" stroke="#6e3a22" stroke-width="0.8"/><path d="M2.8 3.2 L5.8 4.4 M3.2 5.4 H5.8 V3.6" stroke="#6e3a22" stroke-width="0.7" fill="none"/></svg>
<div style="left:769px;top:507px;width:64.6px;height:133px;background:#a8a8a8;"></div>
<div style="left:769px;top:641px;width:64.6px;height:4.4px;background:#ffa374;"></div>
<div style="left:774px;top:511px;width:23.6px;height:8.2px;overflow:hidden;"><div style="left:0px;top:0;width:23.6px;height:8.2px;background:#dcdcdc;border:0.7px solid #333;border-radius:4.2px;"></div></div>
<span style="top:511px;font-size:7px;line-height:10px;color:#2a2a2a;left:785.8px;transform:translateX(-50%);">-5.84</span>
<div style="left:774px;top:523.4px;width:23.6px;height:8px;background:#dadada;border:0.6px solid #555;"></div>
<span style="top:523px;font-size:7px;line-height:10px;color:#2a2a2a;left:785.8px;transform:translateX(-50%);">0</span>
<div style="left:809px;top:510px;width:9px;height:125.6px;background:#2b2b2b;border-radius:1.6px;"></div>
<div style="left:809.6px;top:559px;width:3.6px;height:75.6px;background:#22e866;"></div>
<div style="left:813.9px;top:559px;width:3.5px;height:75.6px;background:#22e866;"></div>
<div style="left:809.6px;top:552px;width:3.6px;height:7px;background:#8cc83c;"></div>
<div style="left:813.9px;top:552px;width:3.5px;height:7px;background:#8cc83c;"></div>
<div style="left:809.6px;top:546px;width:3.6px;height:6px;background:#b0a02c;"></div>
<div style="left:813.9px;top:546px;width:3.5px;height:6px;background:#b0a02c;"></div>
<div style="left:813.9px;top:541px;width:3.5px;height:5px;background:#9a8a2a;"></div>
<div style="left:809.6px;top:530.6px;width:3.6px;height:1px;background:#e08a20;"></div>
<div style="left:813.9px;top:530.6px;width:3.5px;height:1px;background:#e08a20;"></div>
<div style="left:809.6px;top:634.4px;width:7.8px;height:1.2px;background:#22e866;border-radius:0 0 1.4px 1.4px;"></div>
<div style="left:813.2px;top:510.6px;width:0.7px;height:124.4px;background:#222;"></div>
<div style="left:809px;top:523.2px;width:9px;height:0.8px;background:#666;"></div>
<span style="top:509px;font-size:6.4px;line-height:10px;color:#4a4a4a;left:820.4px;">6</span>
<div style="left:806px;top:513.3px;width:2px;height:0.6px;background:#707070;"></div>
<span style="top:519px;font-size:6.4px;line-height:10px;color:#4a4a4a;left:820.4px;">0</span>
<div style="left:806px;top:523.3px;width:2px;height:0.6px;background:#707070;"></div>
<span style="top:531px;font-size:6.4px;line-height:10px;color:#4a4a4a;left:820.4px;">6</span>
<div style="left:806px;top:535.1px;width:2px;height:0.6px;background:#707070;"></div>
<span style="top:543px;font-size:6.4px;line-height:10px;color:#4a4a4a;left:820.4px;">12</span>
<div style="left:806px;top:547.3px;width:2px;height:0.6px;background:#707070;"></div>
<span style="top:556px;font-size:6.4px;line-height:10px;color:#4a4a4a;left:820.4px;">18</span>
<div style="left:806px;top:560.1px;width:2px;height:0.6px;background:#707070;"></div>
<span style="top:568px;font-size:6.4px;line-height:10px;color:#4a4a4a;left:820.4px;">24</span>
<div style="left:806px;top:572.1px;width:2px;height:0.6px;background:#707070;"></div>
<span style="top:580px;font-size:6.4px;line-height:10px;color:#4a4a4a;left:820.4px;">30</span>
<div style="left:806px;top:584.3px;width:2px;height:0.6px;background:#707070;"></div>
<span style="top:591px;font-size:6.4px;line-height:10px;color:#4a4a4a;left:820.4px;">36</span>
<div style="left:806px;top:595.3px;width:2px;height:0.6px;background:#707070;"></div>
<span style="top:601px;font-size:6.4px;line-height:10px;color:#4a4a4a;left:820.4px;">42</span>
<div style="left:806px;top:604.7px;width:2px;height:0.6px;background:#707070;"></div>
<span style="top:609px;font-size:6.4px;line-height:10px;color:#4a4a4a;left:820.4px;">48</span>
<div style="left:806px;top:612.9px;width:2px;height:0.6px;background:#707070;"></div>
<span style="top:622px;font-size:6.4px;line-height:10px;color:#4a4a4a;left:820.4px;">60</span>
<div style="left:806px;top:626.3px;width:2px;height:0.6px;background:#707070;"></div>
<svg style="left:800.8px;top:519.4px;" width="8" height="8.4" viewBox="0 0 8 8.4"><path d="M0.4 0.4 L7.6 4.2 L0.4 8z" fill="#151515"/></svg>
<svg style="left:774.6px;top:574.2px;" width="22.8" height="22.8" viewBox="0 0 22.8 22.8"><path d="M6 17.83 A8.4 8.4 0 1 1 16.8 17.83" fill="none" stroke="#2a2a2a" stroke-width="1.5"/><path d="M11.4 11.4 V3" stroke="#2a2a2a" stroke-width="1.5"/><path d="M9.2 0 H13.600000000000001 L11.4 2.2z" fill="#2a2a2a"/></svg>
<div style="left:778.4px;top:596.4px;width:15.2px;height:15px;background:#ffb91a;border:0.5px solid #8a6410;"></div>
<span style="top:599px;font-size:8.6px;line-height:10px;color:#1c1c1c;left:786px;transform:translateX(-50%);font-weight:bold;">12</span>
<div style="left:778.4px;top:615px;width:15.2px;height:8.4px;background:#d2d2d2;border:0.6px solid #555;"></div>
<span style="top:615px;font-size:6.6px;line-height:10px;color:#2a2a2a;left:786px;transform:translateX(-50%);">S</span>
<div style="left:833.4px;top:489px;width:67.8px;height:5px;background:#ffa374;"></div>
<div style="left:835px;top:494px;width:64.6px;height:11.6px;background:#ffa374;"></div>
<span style="top:495px;font-size:7.5px;line-height:10px;color:#6e3a22;left:838.4px;font-weight:bold;max-width:60.6px;overflow:hidden;">Drift Pad</span>
<div style="left:835px;top:507px;width:64.6px;height:133px;background:#bdbdbd;"></div>
<div style="left:835px;top:641px;width:64.6px;height:4.4px;background:#ffa374;"></div>
<div style="left:840px;top:511px;width:23.6px;height:8.2px;overflow:hidden;"><div style="left:0px;top:0;width:23.6px;height:8.2px;background:#dcdcdc;border:0.7px solid #333;border-radius:4.2px;"></div></div>
<span style="top:511px;font-size:7px;line-height:10px;color:#2a2a2a;left:851.8px;transform:translateX(-50%);">-5.83</span>
<div style="left:840px;top:523.4px;width:23.6px;height:8px;background:#dadada;border:0.6px solid #555;"></div>
<span style="top:523px;font-size:7px;line-height:10px;color:#2a2a2a;left:851.8px;transform:translateX(-50%);">0</span>
<div style="left:875px;top:510px;width:9px;height:125.6px;background:#2b2b2b;border-radius:1.6px;"></div>
<div style="left:875.6px;top:559px;width:3.6px;height:75.6px;background:#22e866;"></div>
<div style="left:879.9px;top:559px;width:3.5px;height:75.6px;background:#22e866;"></div>
<div style="left:875.6px;top:552px;width:3.6px;height:7px;background:#8cc83c;"></div>
<div style="left:879.9px;top:552px;width:3.5px;height:7px;background:#8cc83c;"></div>
<div style="left:875.6px;top:546px;width:3.6px;height:6px;background:#b0a02c;"></div>
<div style="left:879.9px;top:546px;width:3.5px;height:6px;background:#b0a02c;"></div>
<div style="left:879.9px;top:541px;width:3.5px;height:5px;background:#9a8a2a;"></div>
<div style="left:875.6px;top:530.6px;width:3.6px;height:1px;background:#e08a20;"></div>
<div style="left:879.9px;top:530.6px;width:3.5px;height:1px;background:#e08a20;"></div>
<div style="left:875.6px;top:634.4px;width:7.8px;height:1.2px;background:#22e866;border-radius:0 0 1.4px 1.4px;"></div>
<div style="left:879.2px;top:510.6px;width:0.7px;height:124.4px;background:#222;"></div>
<div style="left:875px;top:523.2px;width:9px;height:0.8px;background:#666;"></div>
<span style="top:509px;font-size:6.4px;line-height:10px;color:#4a4a4a;left:886.4px;">6</span>
<div style="left:872px;top:513.3px;width:2px;height:0.6px;background:#707070;"></div>
<span style="top:519px;font-size:6.4px;line-height:10px;color:#4a4a4a;left:886.4px;">0</span>
<div style="left:872px;top:523.3px;width:2px;height:0.6px;background:#707070;"></div>
<span style="top:531px;font-size:6.4px;line-height:10px;color:#4a4a4a;left:886.4px;">6</span>
<div style="left:872px;top:535.1px;width:2px;height:0.6px;background:#707070;"></div>
<span style="top:543px;font-size:6.4px;line-height:10px;color:#4a4a4a;left:886.4px;">12</span>
<div style="left:872px;top:547.3px;width:2px;height:0.6px;background:#707070;"></div>
<span style="top:556px;font-size:6.4px;line-height:10px;color:#4a4a4a;left:886.4px;">18</span>
<div style="left:872px;top:560.1px;width:2px;height:0.6px;background:#707070;"></div>
<span style="top:568px;font-size:6.4px;line-height:10px;color:#4a4a4a;left:886.4px;">24</span>
<div style="left:872px;top:572.1px;width:2px;height:0.6px;background:#707070;"></div>
<span style="top:580px;font-size:6.4px;line-height:10px;color:#4a4a4a;left:886.4px;">30</span>
<div style="left:872px;top:584.3px;width:2px;height:0.6px;background:#707070;"></div>
<span style="top:591px;font-size:6.4px;line-height:10px;color:#4a4a4a;left:886.4px;">36</span>
<div style="left:872px;top:595.3px;width:2px;height:0.6px;background:#707070;"></div>
<span style="top:601px;font-size:6.4px;line-height:10px;color:#4a4a4a;left:886.4px;">42</span>
<div style="left:872px;top:604.7px;width:2px;height:0.6px;background:#707070;"></div>
<span style="top:609px;font-size:6.4px;line-height:10px;color:#4a4a4a;left:886.4px;">48</span>
<div style="left:872px;top:612.9px;width:2px;height:0.6px;background:#707070;"></div>
<span style="top:622px;font-size:6.4px;line-height:10px;color:#4a4a4a;left:886.4px;">60</span>
<div style="left:872px;top:626.3px;width:2px;height:0.6px;background:#707070;"></div>
<svg style="left:866.8px;top:519.4px;" width="8" height="8.4" viewBox="0 0 8 8.4"><path d="M0.4 0.4 L7.6 4.2 L0.4 8z" fill="#151515"/></svg>
<svg style="left:840.6px;top:574.2px;" width="22.8" height="22.8" viewBox="0 0 22.8 22.8"><path d="M6 17.83 A8.4 8.4 0 1 1 16.8 17.83" fill="none" stroke="#2a2a2a" stroke-width="1.5"/><path d="M11.4 11.4 V3" stroke="#2a2a2a" stroke-width="1.5"/><path d="M9.2 0 H13.600000000000001 L11.4 2.2z" fill="#2a2a2a"/></svg>
<div style="left:844.4px;top:596.4px;width:15.2px;height:15px;background:#ffb91a;border:0.5px solid #8a6410;"></div>
<span style="top:599px;font-size:8.6px;line-height:10px;color:#1c1c1c;left:852px;transform:translateX(-50%);font-weight:bold;">13</span>
<div style="left:844.4px;top:615px;width:15.2px;height:8.4px;background:#d2d2d2;border:0.6px solid #555;"></div>
<span style="top:615px;font-size:6.6px;line-height:10px;color:#2a2a2a;left:852px;transform:translateX(-50%);">S</span>
<div style="left:844.4px;top:626.6px;width:15.2px;height:8.8px;background:#d2d2d2;border:0.6px solid #555;"></div>
<svg style="left:849.6px;top:628.6px;" width="4.8" height="4.8" viewBox="0 0 4.8 4.8"><circle cx="2.4" cy="2.4" r="2.1" fill="#222"/><path d="M2.4 1 V2.4 L3.2 3.2" stroke="#ddd" stroke-width="0.6" fill="none"/></svg>
<div style="left:899.4px;top:489px;width:67.8px;height:5px;background:#ffa374;"></div>
<div style="left:901px;top:494px;width:64.6px;height:11.6px;background:#ffa374;"></div>
<span style="top:495px;font-size:7.5px;line-height:10px;color:#6e3a22;left:904.4px;font-weight:bold;max-width:60.6px;overflow:hidden;">Rain Pad</span>
<div style="left:901px;top:507px;width:64.6px;height:133px;background:#a8a8a8;"></div>
<div style="left:901px;top:641px;width:64.6px;height:4.4px;background:#ffa374;"></div>
<div style="left:906px;top:511px;width:23.6px;height:8.2px;overflow:hidden;"><div style="left:0px;top:0;width:23.6px;height:8.2px;background:#dcdcdc;border:0.7px solid #333;border-radius:4.2px;"></div></div>
<span style="top:511px;font-size:7px;line-height:10px;color:#2a2a2a;left:917.8px;transform:translateX(-50%);">-13.5</span>
<div style="left:906px;top:523.4px;width:23.6px;height:8px;background:#dadada;border:0.6px solid #555;"></div>
<span style="top:523px;font-size:7px;line-height:10px;color:#2a2a2a;left:917.8px;transform:translateX(-50%);">0</span>
<div style="left:941px;top:510px;width:9px;height:125.6px;background:#2b2b2b;border-radius:1.6px;"></div>
<div style="left:941.6px;top:580px;width:3.6px;height:54.6px;background:#22e866;"></div>
<div style="left:945.9px;top:580px;width:3.5px;height:54.6px;background:#22e866;"></div>
<div style="left:941.6px;top:634.4px;width:7.8px;height:1.2px;background:#22e866;border-radius:0 0 1.4px 1.4px;"></div>
<div style="left:945.2px;top:510.6px;width:0.7px;height:124.4px;background:#222;"></div>
<div style="left:941px;top:523.2px;width:9px;height:0.8px;background:#666;"></div>
<span style="top:509px;font-size:6.4px;line-height:10px;color:#4a4a4a;left:952.4px;">6</span>
<div style="left:938px;top:513.3px;width:2px;height:0.6px;background:#707070;"></div>
<span style="top:519px;font-size:6.4px;line-height:10px;color:#4a4a4a;left:952.4px;">0</span>
<div style="left:938px;top:523.3px;width:2px;height:0.6px;background:#707070;"></div>
<span style="top:531px;font-size:6.4px;line-height:10px;color:#4a4a4a;left:952.4px;">6</span>
<div style="left:938px;top:535.1px;width:2px;height:0.6px;background:#707070;"></div>
<span style="top:543px;font-size:6.4px;line-height:10px;color:#4a4a4a;left:952.4px;">12</span>
<div style="left:938px;top:547.3px;width:2px;height:0.6px;background:#707070;"></div>
<span style="top:556px;font-size:6.4px;line-height:10px;color:#4a4a4a;left:952.4px;">18</span>
<div style="left:938px;top:560.1px;width:2px;height:0.6px;background:#707070;"></div>
<span style="top:568px;font-size:6.4px;line-height:10px;color:#4a4a4a;left:952.4px;">24</span>
<div style="left:938px;top:572.1px;width:2px;height:0.6px;background:#707070;"></div>
<span style="top:580px;font-size:6.4px;line-height:10px;color:#4a4a4a;left:952.4px;">30</span>
<div style="left:938px;top:584.3px;width:2px;height:0.6px;background:#707070;"></div>
<span style="top:591px;font-size:6.4px;line-height:10px;color:#4a4a4a;left:952.4px;">36</span>
<div style="left:938px;top:595.3px;width:2px;height:0.6px;background:#707070;"></div>
<span style="top:601px;font-size:6.4px;line-height:10px;color:#4a4a4a;left:952.4px;">42</span>
<div style="left:938px;top:604.7px;width:2px;height:0.6px;background:#707070;"></div>
<span style="top:609px;font-size:6.4px;line-height:10px;color:#4a4a4a;left:952.4px;">48</span>
<div style="left:938px;top:612.9px;width:2px;height:0.6px;background:#707070;"></div>
<span style="top:622px;font-size:6.4px;line-height:10px;color:#4a4a4a;left:952.4px;">60</span>
<div style="left:938px;top:626.3px;width:2px;height:0.6px;background:#707070;"></div>
<svg style="left:932.8px;top:519.4px;" width="8" height="8.4" viewBox="0 0 8 8.4"><path d="M0.4 0.4 L7.6 4.2 L0.4 8z" fill="#151515"/></svg>
<svg style="left:906.6px;top:574.2px;" width="22.8" height="22.8" viewBox="0 0 22.8 22.8"><path d="M6 17.83 A8.4 8.4 0 1 1 16.8 17.83" fill="none" stroke="#2a2a2a" stroke-width="1.5"/><path d="M11.4 11.4 V3" stroke="#2a2a2a" stroke-width="1.5"/><path d="M9.2 0 H13.600000000000001 L11.4 2.2z" fill="#2a2a2a"/></svg>
<div style="left:910.4px;top:596.4px;width:15.2px;height:15px;background:#ffb91a;border:0.5px solid #8a6410;"></div>
<span style="top:599px;font-size:8.6px;line-height:10px;color:#1c1c1c;left:918px;transform:translateX(-50%);font-weight:bold;">14</span>
<div style="left:910.4px;top:615px;width:15.2px;height:8.4px;background:#d2d2d2;border:0.6px solid #555;"></div>
<span style="top:615px;font-size:6.6px;line-height:10px;color:#2a2a2a;left:918px;transform:translateX(-50%);">S</span>
<div style="left:910.4px;top:626.6px;width:15.2px;height:8.8px;background:#d2d2d2;border:0.6px solid #555;"></div>
<svg style="left:915.6px;top:628.6px;" width="4.8" height="4.8" viewBox="0 0 4.8 4.8"><circle cx="2.4" cy="2.4" r="2.1" fill="#222"/><path d="M2.4 1 V2.4 L3.2 3.2" stroke="#ddd" stroke-width="0.6" fill="none"/></svg>
<div style="left:923.8px;top:489px;width:1.5px;height:156.6px;background:#7c7c7c;"></div>
<div style="left:925.3px;top:489px;width:68.7px;height:16.6px;background:#ffffff;"></div>
<span style="top:495px;font-size:7.5px;line-height:10px;color:#3a3a3a;left:928.7px;font-weight:bold;max-width:64.7px;overflow:hidden;">Main</span>
<div style="left:925.3px;top:507px;width:68.7px;height:133px;background:#a8a8a8;"></div>
<div style="left:925.3px;top:641px;width:68.7px;height:4.4px;background:#ffffff;"></div>
<div style="left:932px;top:511px;width:23.6px;height:8.2px;overflow:hidden;"><div style="left:0px;top:0;width:23.6px;height:8.2px;background:#dcdcdc;border:0.7px solid #333;border-radius:4.2px;"></div></div>
<span style="top:511px;font-size:7px;line-height:10px;color:#2a2a2a;left:943.8px;transform:translateX(-50%);">-0.30</span>
<div style="left:932px;top:523.4px;width:23.6px;height:8px;background:#dadada;border:0.6px solid #555;"></div>
<span style="top:523px;font-size:7px;line-height:10px;color:#2a2a2a;left:943.8px;transform:translateX(-50%);">0</span>
<div style="left:967.9px;top:510px;width:9px;height:125.6px;background:#2b2b2b;border-radius:1.6px;"></div>
<div style="left:968.5px;top:560px;width:3.6px;height:74.6px;background:#22e866;"></div>
<div style="left:972.8px;top:560px;width:3.5px;height:74.6px;background:#22e866;"></div>
<div style="left:968.5px;top:554px;width:3.6px;height:6px;background:#9adc40;"></div>
<div style="left:972.8px;top:554px;width:3.5px;height:6px;background:#9adc40;"></div>
<div style="left:968.5px;top:541px;width:3.6px;height:13px;background:#f4e020;"></div>
<div style="left:972.8px;top:541px;width:3.5px;height:13px;background:#f4e020;"></div>
<div style="left:968.5px;top:535px;width:3.6px;height:6px;background:#f0b020;"></div>
<div style="left:972.8px;top:535px;width:3.5px;height:6px;background:#f0b020;"></div>
<div style="left:968.5px;top:529px;width:3.6px;height:6px;background:#d08820;"></div>
<div style="left:972.8px;top:529px;width:3.5px;height:6px;background:#d08820;"></div>
<div style="left:968.5px;top:524.4px;width:3.6px;height:4.6px;background:#a8641c;"></div>
<div style="left:972.8px;top:524.4px;width:3.5px;height:4.6px;background:#a8641c;"></div>
<div style="left:972.8px;top:522px;width:3.5px;height:2.4px;background:#7a4818;"></div>
<div style="left:968.5px;top:634.4px;width:7.8px;height:1.2px;background:#22e866;border-radius:0 0 1.4px 1.4px;"></div>
<div style="left:972.1px;top:510.6px;width:0.7px;height:124.4px;background:#222;"></div>
<div style="left:967.9px;top:523.2px;width:9px;height:0.8px;background:#666;"></div>
<span style="top:509px;font-size:6.4px;line-height:10px;color:#4a4a4a;left:979.3px;">6</span>
<div style="left:964.9px;top:513.3px;width:2px;height:0.6px;background:#707070;"></div>
<span style="top:519px;font-size:6.4px;line-height:10px;color:#4a4a4a;left:979.3px;">0</span>
<div style="left:964.9px;top:523.3px;width:2px;height:0.6px;background:#707070;"></div>
<span style="top:531px;font-size:6.4px;line-height:10px;color:#4a4a4a;left:979.3px;">6</span>
<div style="left:964.9px;top:535.1px;width:2px;height:0.6px;background:#707070;"></div>
<span style="top:543px;font-size:6.4px;line-height:10px;color:#4a4a4a;left:979.3px;">12</span>
<div style="left:964.9px;top:547.3px;width:2px;height:0.6px;background:#707070;"></div>
<span style="top:556px;font-size:6.4px;line-height:10px;color:#4a4a4a;left:979.3px;">18</span>
<div style="left:964.9px;top:560.1px;width:2px;height:0.6px;background:#707070;"></div>
<span style="top:568px;font-size:6.4px;line-height:10px;color:#4a4a4a;left:979.3px;">24</span>
<div style="left:964.9px;top:572.1px;width:2px;height:0.6px;background:#707070;"></div>
<span style="top:580px;font-size:6.4px;line-height:10px;color:#4a4a4a;left:979.3px;">30</span>
<div style="left:964.9px;top:584.3px;width:2px;height:0.6px;background:#707070;"></div>
<span style="top:591px;font-size:6.4px;line-height:10px;color:#4a4a4a;left:979.3px;">36</span>
<div style="left:964.9px;top:595.3px;width:2px;height:0.6px;background:#707070;"></div>
<span style="top:601px;font-size:6.4px;line-height:10px;color:#4a4a4a;left:979.3px;">42</span>
<div style="left:964.9px;top:604.7px;width:2px;height:0.6px;background:#707070;"></div>
<span style="top:609px;font-size:6.4px;line-height:10px;color:#4a4a4a;left:979.3px;">48</span>
<div style="left:964.9px;top:612.9px;width:2px;height:0.6px;background:#707070;"></div>
<span style="top:622px;font-size:6.4px;line-height:10px;color:#4a4a4a;left:979.3px;">60</span>
<div style="left:964.9px;top:626.3px;width:2px;height:0.6px;background:#707070;"></div>
<svg style="left:959.7px;top:519.4px;" width="8" height="8.4" viewBox="0 0 8 8.4"><path d="M0.4 0.4 L7.6 4.2 L0.4 8z" fill="#151515"/></svg>
<svg style="left:932.6px;top:574.2px;" width="22.8" height="22.8" viewBox="0 0 22.8 22.8"><path d="M6 17.83 A8.4 8.4 0 1 1 16.8 17.83" fill="none" stroke="#2a2a2a" stroke-width="1.5"/><path d="M11.4 11.4 V3" stroke="#2a2a2a" stroke-width="1.5"/><path d="M9.2 0 H13.600000000000001 L11.4 2.2z" fill="#2a2a2a"/></svg>
<div style="left:935.5px;top:603.6px;width:16.5px;height:8.4px;background:#e4e4e4;border:0.6px solid #888;"></div>
<span style="top:603px;font-size:6.6px;line-height:10px;color:#2a2a2a;left:943.8px;transform:translateX(-50%);">Solo</span>
<svg style="left:934px;top:614.4px;" width="20" height="20" viewBox="0 0 20 20"><path d="M4.2 16 A8 8 0 1 1 15.8 16" fill="none" stroke="#4684ea" stroke-width="1.6"/><path d="M10 10 L16.4 12.4" stroke="#222" stroke-width="1.5"/><path d="M8 17.6 C7.4 14.4 12.6 14.4 12 17.6" stroke="#222" stroke-width="1" fill="none"/></svg>
<div style="left:3px;top:680px;width:1.6px;height:2px;background:#5c5c5c;"></div>
<div style="left:3px;top:683px;width:1.6px;height:2px;background:#5c5c5c;"></div>
<div style="left:3px;top:686px;width:1.6px;height:2px;background:#5c5c5c;"></div>
<div style="left:3px;top:689px;width:1.6px;height:2px;background:#5c5c5c;"></div>
<div style="left:3px;top:692px;width:1.6px;height:2px;background:#5c5c5c;"></div>
<div style="left:3px;top:695px;width:1.6px;height:2px;background:#5c5c5c;"></div>
<div style="left:3px;top:698px;width:1.6px;height:2px;background:#b89c38;"></div>
<div style="left:3px;top:701px;width:1.6px;height:2px;background:#b89c38;"></div>
<div style="left:3px;top:704px;width:1.6px;height:2px;background:#b89c38;"></div>
<div style="left:3px;top:707px;width:1.6px;height:2px;background:#b89c38;"></div>
<div style="left:3px;top:710px;width:1.6px;height:2px;background:#b89c38;"></div>
<div style="left:3px;top:713px;width:1.6px;height:2px;background:#b89c38;"></div>
<div style="left:3px;top:716px;width:1.6px;height:2px;background:#b89c38;"></div>
<div style="left:3px;top:719px;width:1.6px;height:2px;background:#b89c38;"></div>
<div style="left:3px;top:722px;width:1.6px;height:2px;background:#b89c38;"></div>
<div style="left:3px;top:725px;width:1.6px;height:2px;background:#b89c38;"></div>
<div style="left:3px;top:728px;width:1.6px;height:2px;background:#b89c38;"></div>
<div style="left:3px;top:731px;width:1.6px;height:2px;background:#b89c38;"></div>
<div style="left:3px;top:734px;width:1.6px;height:2px;background:#b89c38;"></div>
<div style="left:3px;top:737px;width:1.6px;height:2px;background:#b89c38;"></div>
<div style="left:179px;top:680px;width:2px;height:2px;background:#2a2a2a;"></div>
<div style="left:179px;top:683px;width:2px;height:2px;background:#2a2a2a;"></div>
<div style="left:179px;top:686px;width:2px;height:2px;background:#2a2a2a;"></div>
<div style="left:179px;top:689px;width:2px;height:2px;background:#2a2a2a;"></div>
<div style="left:179px;top:692px;width:2px;height:2px;background:#2a2a2a;"></div>
<div style="left:179px;top:695px;width:2px;height:2px;background:#2a2a2a;"></div>
<div style="left:179px;top:698px;width:2px;height:2px;background:#e0b020;"></div>
<div style="left:179px;top:701px;width:2px;height:2px;background:#e0b020;"></div>
<div style="left:179px;top:704px;width:2px;height:2px;background:#e0b020;"></div>
<div style="left:179px;top:707px;width:2px;height:2px;background:#e0b020;"></div>
<div style="left:179px;top:710px;width:2px;height:2px;background:#e0b020;"></div>
<div style="left:179px;top:713px;width:2px;height:2px;background:#e0b020;"></div>
<div style="left:179px;top:716px;width:2px;height:2px;background:#e0b020;"></div>
<div style="left:179px;top:719px;width:2px;height:2px;background:#e0b020;"></div>
<div style="left:179px;top:722px;width:2px;height:2px;background:#e0b020;"></div>
<div style="left:179px;top:725px;width:2px;height:2px;background:#e0b020;"></div>
<div style="left:179px;top:728px;width:2px;height:2px;background:#e0b020;"></div>
<div style="left:179px;top:731px;width:2px;height:2px;background:#e0b020;"></div>
<div style="left:179px;top:734px;width:2px;height:2px;background:#e0b020;"></div>
<div style="left:179px;top:737px;width:2px;height:2px;background:#e0b020;"></div>
<div style="left:179px;top:740px;width:2px;height:2px;background:#e0b020;"></div>
<div style="left:179px;top:743px;width:2px;height:2px;background:#e0b020;"></div>
<div style="left:179px;top:746px;width:2px;height:2px;background:#e0b020;"></div>
<div style="left:179px;top:749px;width:2px;height:2px;background:#e0b020;"></div>
<div style="left:179px;top:752px;width:2px;height:2px;background:#e0b020;"></div>
<div style="left:179px;top:755px;width:2px;height:2px;background:#e0b020;"></div>
<div style="left:6px;top:651px;width:171px;height:131px;background:#a7a7a7;border-radius:3.5px;"></div>
<div style="left:6px;top:651px;width:171px;height:12.6px;background:#b4b4b4;border-radius:3.5px 3.5px 0 0;"></div>
<div style="left:8.4px;top:653.4px;width:8.4px;height:8.4px;background:#ffbd0a;border-radius:50%;border:0.7px solid #6a4a08;"></div>
<span style="top:653px;font-size:7.6px;line-height:10px;color:#1c1c1c;left:20px;font-weight:bold;">Scale</span>
<div style="left:144px;top:653px;width:9px;height:9px;background:#7a4ad0;border:0.6px solid #333;"></div>
<svg style="left:144px;top:653px;" width="9" height="9" viewBox="0 0 9 9"><rect x="4.6" y="1.4" width="3" height="3" fill="#e8dcff"/><path d="M2 2.6 L3.4 6 L5 5.4" stroke="#e8dcff" stroke-width="0.8" fill="none"/><rect x="2.6" y="5.4" width="1.8" height="1.8" fill="#e8dcff"/></svg>
<svg style="left:155px;top:653.2px;" width="9" height="9" viewBox="0 0 9 9"><circle cx="4.4" cy="4.4" r="3.8" fill="#d0d0d0" stroke="#222" stroke-width="0.7"/><path d="M2.4 4.8 A2.1 2.1 0 0 1 6 3 M6.4 4 A2.1 2.1 0 0 1 2.8 5.8" stroke="#222" stroke-width="0.8" fill="none"/></svg>
<svg style="left:166px;top:653.2px;" width="9" height="9" viewBox="0 0 9 9"><circle cx="4.4" cy="4.4" r="3.8" fill="#d0d0d0" stroke="#222" stroke-width="0.7"/><rect x="2.4" y="2.4" width="4" height="4" fill="#222"/><rect x="3.2" y="2.4" width="2.2" height="1.4" fill="#d0d0d0"/></svg>
<div style="left:9.2px;top:666px;width:104.4px;height:113px;background:#1c1c1c;"></div>
<div style="left:20px;top:668px;width:7px;height:7px;background:#626262;"></div>
<div style="left:36px;top:668px;width:8px;height:7px;background:#626262;"></div>
<div style="left:45px;top:668px;width:7px;height:7px;background:#626262;"></div>
<div style="left:61px;top:668px;width:8px;height:7px;background:#626262;"></div>
<div style="left:78px;top:668px;width:8px;height:7px;background:#626262;"></div>
<div style="left:95px;top:668px;width:7px;height:7px;background:#626262;"></div>
<div style="left:103px;top:668px;width:8px;height:7px;background:#626262;"></div>
<div style="left:11px;top:676px;width:8px;height:8px;background:#626262;"></div>
<div style="left:20px;top:676px;width:7px;height:8px;background:#6a6a6a;"></div>
<div style="left:28px;top:676px;width:7px;height:8px;background:#626262;"></div>
<div style="left:36px;top:676px;width:8px;height:8px;background:#6a6a6a;"></div>
<div style="left:45px;top:676px;width:7px;height:8px;background:#6a6a6a;"></div>
<div style="left:53px;top:676px;width:7px;height:8px;background:#626262;"></div>
<div style="left:61px;top:676px;width:8px;height:8px;background:#6a6a6a;"></div>
<div style="left:70px;top:676px;width:7px;height:8px;background:#626262;"></div>
<div style="left:78px;top:676px;width:8px;height:8px;background:#6a6a6a;"></div>
<div style="left:87px;top:676px;width:7px;height:8px;background:#626262;"></div>
<div style="left:95px;top:676px;width:7px;height:8px;background:#6a6a6a;"></div>
<div style="left:103px;top:676px;width:8px;height:8px;background:#6a6a6a;"></div>
<div style="left:11px;top:685px;width:8px;height:7px;background:#626262;"></div>
<div style="left:20px;top:685px;width:7px;height:7px;background:#6a6a6a;"></div>
<div style="left:28px;top:685px;width:7px;height:7px;background:#626262;"></div>
<div style="left:36px;top:685px;width:8px;height:7px;background:#6a6a6a;"></div>
<div style="left:45px;top:685px;width:7px;height:7px;background:#6a6a6a;"></div>
<div style="left:53px;top:685px;width:7px;height:7px;background:#626262;"></div>
<div style="left:61px;top:685px;width:8px;height:7px;background:#6a6a6a;"></div>
<div style="left:70px;top:685px;width:7px;height:7px;background:#626262;"></div>
<div style="left:78px;top:685px;width:8px;height:7px;background:#6a6a6a;"></div>
<div style="left:87px;top:685px;width:7px;height:7px;background:#626262;"></div>
<div style="left:95px;top:685px;width:7px;height:7px;background:#b996fb;"></div>
<div style="left:103px;top:685px;width:8px;height:7px;background:#b996fb;"></div>
<div style="left:20px;top:693px;width:7px;height:8px;background:#626262;"></div>
<div style="left:36px;top:693px;width:8px;height:8px;background:#626262;"></div>
<div style="left:45px;top:693px;width:7px;height:8px;background:#626262;"></div>
<div style="left:61px;top:693px;width:8px;height:8px;background:#626262;"></div>
<div style="left:78px;top:693px;width:8px;height:8px;background:#626262;"></div>
<div style="left:95px;top:693px;width:7px;height:8px;background:#626262;"></div>
<div style="left:103px;top:693px;width:8px;height:8px;background:#626262;"></div>
<div style="left:11px;top:702px;width:8px;height:7px;background:#626262;"></div>
<div style="left:20px;top:702px;width:7px;height:7px;background:#6a6a6a;"></div>
<div style="left:28px;top:702px;width:7px;height:7px;background:#626262;"></div>
<div style="left:36px;top:702px;width:8px;height:7px;background:#6a6a6a;"></div>
<div style="left:45px;top:702px;width:7px;height:7px;background:#6a6a6a;"></div>
<div style="left:53px;top:702px;width:7px;height:7px;background:#626262;"></div>
<div style="left:61px;top:702px;width:8px;height:7px;background:#6a6a6a;"></div>
<div style="left:70px;top:702px;width:7px;height:7px;background:#626262;"></div>
<div style="left:78px;top:702px;width:8px;height:7px;background:#b996fb;"></div>
<div style="left:87px;top:702px;width:7px;height:7px;background:#b996fb;"></div>
<div style="left:95px;top:702px;width:7px;height:7px;background:#6a6a6a;"></div>
<div style="left:103px;top:702px;width:8px;height:7px;background:#6a6a6a;"></div>
<div style="left:20px;top:710px;width:7px;height:7px;background:#626262;"></div>
<div style="left:36px;top:710px;width:8px;height:7px;background:#626262;"></div>
<div style="left:45px;top:710px;width:7px;height:7px;background:#626262;"></div>
<div style="left:61px;top:710px;width:8px;height:7px;background:#626262;"></div>
<div style="left:70px;top:710px;width:7px;height:7px;background:#b996fb;"></div>
<div style="left:78px;top:710px;width:8px;height:7px;background:#626262;"></div>
<div style="left:95px;top:710px;width:7px;height:7px;background:#626262;"></div>
<div style="left:103px;top:710px;width:8px;height:7px;background:#626262;"></div>
<div style="left:11px;top:718px;width:8px;height:8px;background:#626262;"></div>
<div style="left:20px;top:718px;width:7px;height:8px;background:#6a6a6a;"></div>
<div style="left:28px;top:718px;width:7px;height:8px;background:#626262;"></div>
<div style="left:36px;top:718px;width:8px;height:8px;background:#6a6a6a;"></div>
<div style="left:45px;top:718px;width:7px;height:8px;background:#6a6a6a;"></div>
<div style="left:53px;top:718px;width:7px;height:8px;background:#626262;"></div>
<div style="left:61px;top:718px;width:8px;height:8px;background:#6a6a6a;"></div>
<div style="left:70px;top:718px;width:7px;height:8px;background:#626262;"></div>
<div style="left:78px;top:718px;width:8px;height:8px;background:#6a6a6a;"></div>
<div style="left:87px;top:718px;width:7px;height:8px;background:#626262;"></div>
<div style="left:95px;top:718px;width:7px;height:8px;background:#6a6a6a;"></div>
<div style="left:103px;top:718px;width:8px;height:8px;background:#6a6a6a;"></div>
<div style="left:20px;top:727px;width:7px;height:7px;background:#626262;"></div>
<div style="left:36px;top:727px;width:8px;height:7px;background:#626262;"></div>
<div style="left:45px;top:727px;width:7px;height:7px;background:#626262;"></div>
<div style="left:53px;top:727px;width:7px;height:7px;background:#18e0f0;"></div>
<div style="left:61px;top:727px;width:8px;height:7px;background:#b996fb;"></div>
<div style="left:78px;top:727px;width:8px;height:7px;background:#626262;"></div>
<div style="left:95px;top:727px;width:7px;height:7px;background:#626262;"></div>
<div style="left:103px;top:727px;width:8px;height:7px;background:#626262;"></div>
<div style="left:11px;top:735px;width:8px;height:8px;background:#626262;"></div>
<div style="left:20px;top:735px;width:7px;height:8px;background:#6a6a6a;"></div>
<div style="left:28px;top:735px;width:7px;height:8px;background:#626262;"></div>
<div style="left:36px;top:735px;width:8px;height:8px;background:#6a6a6a;"></div>
<div style="left:45px;top:735px;width:7px;height:8px;background:#6a6a6a;"></div>
<div style="left:53px;top:735px;width:7px;height:8px;background:#626262;"></div>
<div style="left:61px;top:735px;width:8px;height:8px;background:#6a6a6a;"></div>
<div style="left:70px;top:735px;width:7px;height:8px;background:#626262;"></div>
<div style="left:78px;top:735px;width:8px;height:8px;background:#6a6a6a;"></div>
<div style="left:87px;top:735px;width:7px;height:8px;background:#626262;"></div>
<div style="left:95px;top:735px;width:7px;height:8px;background:#6a6a6a;"></div>
<div style="left:103px;top:735px;width:8px;height:8px;background:#6a6a6a;"></div>
<div style="left:11px;top:744px;width:8px;height:7px;background:#626262;"></div>
<div style="left:20px;top:744px;width:7px;height:7px;background:#6a6a6a;"></div>
<div style="left:28px;top:744px;width:7px;height:7px;background:#626262;"></div>
<div style="left:36px;top:744px;width:8px;height:7px;background:#b996fb;"></div>
<div style="left:45px;top:744px;width:7px;height:7px;background:#b996fb;"></div>
<div style="left:53px;top:744px;width:7px;height:7px;background:#626262;"></div>
<div style="left:61px;top:744px;width:8px;height:7px;background:#6a6a6a;"></div>
<div style="left:70px;top:744px;width:7px;height:7px;background:#626262;"></div>
<div style="left:78px;top:744px;width:8px;height:7px;background:#6a6a6a;"></div>
<div style="left:87px;top:744px;width:7px;height:7px;background:#626262;"></div>
<div style="left:95px;top:744px;width:7px;height:7px;background:#6a6a6a;"></div>
<div style="left:103px;top:744px;width:8px;height:7px;background:#6a6a6a;"></div>
<div style="left:20px;top:752px;width:7px;height:7px;background:#626262;"></div>
<div style="left:28px;top:752px;width:7px;height:7px;background:#b996fb;"></div>
<div style="left:36px;top:752px;width:8px;height:7px;background:#626262;"></div>
<div style="left:45px;top:752px;width:7px;height:7px;background:#626262;"></div>
<div style="left:61px;top:752px;width:8px;height:7px;background:#626262;"></div>
<div style="left:78px;top:752px;width:8px;height:7px;background:#626262;"></div>
<div style="left:95px;top:752px;width:7px;height:7px;background:#626262;"></div>
<div style="left:103px;top:752px;width:8px;height:7px;background:#626262;"></div>
<div style="left:11px;top:760px;width:8px;height:8px;background:#626262;"></div>
<div style="left:20px;top:760px;width:7px;height:8px;background:#6a6a6a;"></div>
<div style="left:28px;top:760px;width:7px;height:8px;background:#626262;"></div>
<div style="left:36px;top:760px;width:8px;height:8px;background:#6a6a6a;"></div>
<div style="left:45px;top:760px;width:7px;height:8px;background:#6a6a6a;"></div>
<div style="left:53px;top:760px;width:7px;height:8px;background:#626262;"></div>
<div style="left:61px;top:760px;width:8px;height:8px;background:#6a6a6a;"></div>
<div style="left:70px;top:760px;width:7px;height:8px;background:#626262;"></div>
<div style="left:78px;top:760px;width:8px;height:8px;background:#6a6a6a;"></div>
<div style="left:87px;top:760px;width:7px;height:8px;background:#626262;"></div>
<div style="left:95px;top:760px;width:7px;height:8px;background:#6a6a6a;"></div>
<div style="left:103px;top:760px;width:8px;height:8px;background:#6a6a6a;"></div>
<div style="left:11px;top:769px;width:8px;height:7px;background:#b996fb;"></div>
<div style="left:20px;top:769px;width:7px;height:7px;background:#b996fb;"></div>
<div style="left:36px;top:769px;width:8px;height:7px;background:#626262;"></div>
<div style="left:45px;top:769px;width:7px;height:7px;background:#626262;"></div>
<div style="left:61px;top:769px;width:8px;height:7px;background:#626262;"></div>
<div style="left:78px;top:769px;width:8px;height:7px;background:#626262;"></div>
<div style="left:95px;top:769px;width:7px;height:7px;background:#626262;"></div>
<div style="left:103px;top:769px;width:8px;height:7px;background:#626262;"></div>
<span style="top:666px;font-size:7.4px;line-height:10px;color:#2a2a2a;left:117.6px;">In</span>
<span style="top:666px;font-size:7.4px;line-height:10px;color:#2a2a2a;left:138.6px;">Out</span>
<div style="left:116.4px;top:677px;width:58.2px;height:0.7px;background:#8a8a8a;"></div>
<div style="left:117px;top:680px;width:57px;height:8px;background:#a0a0a0;border:0.6px solid #6e6e6e;"></div>
<span style="top:680px;font-size:7px;line-height:10px;color:#8e8e8e;left:119px;">C#</span>
<span style="top:679px;font-size:6px;line-height:10px;color:#6e6e6e;left:170px;transform:translateX(-50%);">&#9662;</span>
<div style="left:117.4px;top:680.4px;width:2px;height:2px;background:#e8e8ff;border:0.6px solid #4030c0;border-radius:50%;"></div>
<div style="left:117px;top:691.4px;width:57px;height:8.2px;background:#a0a0a0;border:0.6px solid #6e6e6e;"></div>
<span style="top:691px;font-size:7px;line-height:10px;color:#8e8e8e;left:119px;">Minor</span>
<span style="top:691px;font-size:6px;line-height:10px;color:#6e6e6e;left:170px;transform:translateX(-50%);">&#9662;</span>
<div style="left:117.4px;top:691.8px;width:2px;height:2px;background:#e8e8ff;border:0.6px solid #4030c0;border-radius:50%;"></div>
<span style="top:704px;font-size:7.4px;line-height:10px;color:#1c1c1c;left:146px;transform:translateX(-50%);">Transpose</span>
<svg style="left:133.6px;top:713.2px;" width="24.8" height="24.8" viewBox="0 0 24.8 24.8"><path d="M7 18.83 A8.4 8.4 0 1 1 17.8 18.83" fill="none" stroke="#2a2a2a" stroke-width="1.4"/><path d="M12.4 11.14 L12.4 4" stroke="#2a2a2a" stroke-width="1.4"/><path d="M10.2 0.8 H14.600000000000001 L12.4 3z" fill="#2a2a2a"/></svg>
<span style="top:734px;font-size:7.4px;line-height:10px;color:#1c1c1c;left:146px;transform:translateX(-50%);">0 st</span>
<div style="left:131px;top:746.6px;width:29px;height:9px;background:#c6c6c6;border:0.6px solid #8a8a8a;"></div>
<span style="top:747px;font-size:7.2px;line-height:10px;color:#9a9a9a;left:145.5px;transform:translateX(-50%);">Fold</span>
<span style="top:761px;font-size:7.4px;line-height:10px;color:#1c1c1c;left:117px;">Lowest</span>
<span style="top:761px;font-size:7.4px;line-height:10px;color:#1c1c1c;left:147px;">Range</span>
<div style="left:171px;top:764px;width:2.4px;height:2.4px;background:#777;border-radius:50%;"></div>
<div style="left:117px;top:770px;width:27px;height:9px;background:#dcdcdc;border:0.6px solid #707070;"></div>
<span style="top:770px;font-size:7.2px;line-height:10px;color:#1c1c1c;left:130.5px;transform:translateX(-50%);">C-2</span>
<div style="left:146.6px;top:770px;width:27.4px;height:9px;background:#18d0e6;border:0.6px solid #0a6a78;"></div>
<span style="top:770px;font-size:7.2px;line-height:10px;color:#0a3a44;left:160.3px;transform:translateX(-50%);">+128 st</span>
<div style="left:183.6px;top:651px;width:680.4px;height:131px;background:#a7a7a7;border-radius:3.5px;"></div>
<div style="left:183.6px;top:651px;width:680.4px;height:12.6px;background:#b4b4b4;border-radius:3.5px 3.5px 0 0;"></div>
<div style="left:186px;top:653.4px;width:8.4px;height:8.4px;background:#ffbd0a;border-radius:50%;border:0.7px solid #6a4a08;"></div>
<svg style="left:196.6px;top:653.2px;" width="9" height="9" viewBox="0 0 9 9"><circle cx="4.4" cy="4.4" r="3.8" fill="#d0d0d0" stroke="#222" stroke-width="0.7"/><path d="M3.2 2.4 L6.4 4.4 L3.2 6.4z" fill="#222"/></svg>
<span style="top:653px;font-size:7.5px;line-height:10px;color:#1c1c1c;left:208.6px;font-weight:bold;letter-spacing:-0.05px;">Drifting Ambient Pad</span>
<div style="left:306.6px;top:653px;width:34.4px;height:11px;background:#242424;border-radius:2px 2px 0 0;"></div>
<div style="left:311px;top:655.8px;width:4.6px;height:4.6px;background:#ffbd0a;"></div>
<span style="top:654px;font-size:7.4px;line-height:10px;color:#e8e8e8;left:319px;">Osc 1</span>
<div style="left:343px;top:653.6px;width:33px;height:9.4px;background:#bcbcbc;border-radius:2px 2px 0 0;"></div>
<div style="left:346.4px;top:655.8px;width:4.6px;height:4.6px;background:#ffbd0a;border:0.5px solid #7a5a08;"></div>
<span style="top:654px;font-size:7.4px;line-height:10px;color:#2a2a2a;left:354.4px;">Osc 2</span>
<div style="left:183.6px;top:663.6px;width:42.4px;height:91.4px;background:#adadad;"></div>
<div style="left:183.6px;top:757px;width:42.4px;height:25px;background:#adadad;border-radius:0 0 0 3.5px;"></div>
<div style="left:187px;top:668px;width:36px;height:8.6px;background:#ffbd0a;border:0.6px solid #7a5a08;"></div>
<span style="top:668px;font-size:7.2px;line-height:10px;color:#1c1c1c;left:205px;transform:translateX(-50%);">Sub</span>
<span style="top:679px;font-size:7.4px;line-height:10px;color:#2a2a2a;left:189px;">Gain</span>
<svg style="left:184.8px;top:684.8px;" width="20.4" height="20.4" viewBox="0 0 20.4 20.4"><path d="M6.21 14.95 A6.2 6.2 0 1 1 14.19 14.95" fill="none" stroke="#2a2a2a" stroke-width="1.4"/><path d="M6.21 14.95 A6.2 6.2 0 0 1 6.13 14.88" fill="none" stroke="#28c8dc" stroke-width="2.0"/><path d="M9.6 10.91 L6.21 14.95" stroke="#2a2a2a" stroke-width="1.4"/></svg>
<span style="top:697px;font-size:7.2px;line-height:10px;color:#2a2a2a;left:199px;">-20 dB</span>
<span style="top:705px;font-size:7.4px;line-height:10px;color:#2a2a2a;left:189px;">Tone</span>
<svg style="left:184.8px;top:711.4px;" width="20.4" height="20.4" viewBox="0 0 20.4 20.4"><path d="M6.21 14.95 A6.2 6.2 0 1 1 14.19 14.95" fill="none" stroke="#2a2a2a" stroke-width="1.4"/><path d="M10.2 11.13 L10.2 16.4" stroke="#2a2a2a" stroke-width="1.4"/></svg>
<span style="top:723px;font-size:7.2px;line-height:10px;color:#2a2a2a;left:200.6px;">0.0 %</span>
<span style="top:732px;font-size:7.4px;line-height:10px;color:#2a2a2a;left:187px;">Octave</span>
<div style="left:187px;top:742.4px;width:10.4px;height:8.4px;background:#dcdcdc;border:0.6px solid #707070;"></div>
<span style="top:742px;font-size:7px;line-height:10px;color:#1c1c1c;left:192.2px;transform:translateX(-50%);">0</span>
<div style="left:199.6px;top:742.4px;width:10.4px;height:8.4px;background:#ffbd0a;border:0.6px solid #707070;"></div>
<span style="top:742px;font-size:7px;line-height:10px;color:#1c1c1c;left:204.8px;transform:translateX(-50%);">-1</span>
<div style="left:212.4px;top:742.4px;width:10.6px;height:8.4px;background:#dcdcdc;border:0.6px solid #707070;"></div>
<span style="top:742px;font-size:7px;line-height:10px;color:#1c1c1c;left:217.7px;transform:translateX(-50%);">-2</span>
<span style="top:757px;font-size:7.4px;line-height:10px;color:#2a2a2a;left:187px;">Transpose</span>
<div style="left:187px;top:767.6px;width:36px;height:9px;background:#dcdcdc;border:0.6px solid #707070;"></div>
<span style="top:767px;font-size:7px;line-height:10px;color:#1c1c1c;left:205px;transform:translateX(-50%);">0 st</span>
<div style="left:226.6px;top:663.6px;width:208.4px;height:116.4px;background:#242424;"></div>
<span style="top:666px;font-size:7.4px;line-height:10px;color:#f0b428;left:230.6px;font-weight:bold;">Basics</span>
<span style="top:666px;font-size:6px;line-height:10px;color:#f0b428;left:271.6px;transform:translateX(-50%);">&#9662;</span>
<div style="left:277px;top:667px;width:0.7px;height:7px;background:#6a6a6a;"></div>
<span style="top:666px;font-size:7.4px;line-height:10px;color:#f0b428;left:281.6px;font-weight:bold;">Pulse Dual</span>
<span style="top:666px;font-size:6px;line-height:10px;color:#f0b428;left:347px;transform:translateX(-50%);">&#9662;</span>
<span style="top:666px;font-size:5.6px;line-height:10px;color:#c8c8c8;left:398px;">&#9666; &#9656;</span>
<div style="left:410.6px;top:666.6px;width:0.7px;height:8px;background:#6a6a6a;"></div>
<div style="left:414px;top:666.6px;width:6.6px;height:1px;background:#d8a826;"></div>
<div style="left:414px;top:668.6px;width:6.6px;height:1px;background:#d8a826;"></div>
<div style="left:414px;top:670.6px;width:6.6px;height:1px;background:#d8a826;"></div>
<div style="left:414px;top:672.6px;width:6.6px;height:1px;background:#d8a826;"></div>
<svg style="left:423.4px;top:666px;" width="9" height="9" viewBox="0 0 9 9"><circle cx="4.4" cy="4.4" r="3.2" fill="none" stroke="#c8c8c8" stroke-width="0.8"/></svg>
<span style="top:677px;font-size:7.4px;line-height:10px;color:#f0b428;left:247.8px;transform:translateX(-50%);font-weight:bold;">C</span>
<div style="left:240.6px;top:686.4px;width:1.2px;height:0.8px;background:#7a6a30;"></div>
<div style="left:243.2px;top:686.4px;width:1.2px;height:0.8px;background:#7a6a30;"></div>
<div style="left:245.8px;top:686.4px;width:1.2px;height:0.8px;background:#7a6a30;"></div>
<div style="left:248.4px;top:686.4px;width:1.2px;height:0.8px;background:#7a6a30;"></div>
<div style="left:251px;top:686.4px;width:1.2px;height:0.8px;background:#7a6a30;"></div>
<div style="left:253.6px;top:686.4px;width:1.2px;height:0.8px;background:#7a6a30;"></div>
<div style="left:247.4px;top:685.6px;width:1px;height:1.6px;background:#e0e0e0;"></div>
<div style="left:246px;top:693px;width:3.6px;height:59px;background:#c69628;"></div>
<span style="top:689px;font-size:4.5px;line-height:10px;color:#aaa;left:251.4px;">&#9666;</span>
<span style="top:758px;font-size:7.4px;line-height:10px;color:#f0b428;left:248px;transform:translateX(-50%);font-weight:bold;">0.0 dB</span>
<span style="top:769px;font-size:7.4px;line-height:10px;color:#f0b428;left:230.6px;font-weight:bold;">None</span>
<span style="top:769px;font-size:6px;line-height:10px;color:#f0b428;left:261.6px;transform:translateX(-50%);">&#9662;</span>
<span style="top:769px;font-size:7.2px;line-height:10px;color:#b8b8b8;left:268px;">FX 1 0.0 %</span>
<span style="top:769px;font-size:7.2px;line-height:10px;color:#b8b8b8;left:312px;">FX 2 0.0 %</span>
<div style="left:352.6px;top:770px;width:0.7px;height:7px;background:#6a6a6a;"></div>
<span style="top:769px;font-size:7.2px;line-height:10px;color:#b8b8b8;left:355.6px;">Semi</span>
<span style="top:769px;font-size:7.2px;line-height:10px;color:#f0b428;left:374px;font-weight:bold;">0 st</span>
<span style="top:769px;font-size:7.2px;line-height:10px;color:#b8b8b8;left:396.6px;">Det</span>
<span style="top:769px;font-size:7.2px;line-height:10px;color:#f0b428;left:410.4px;font-weight:bold;">0 ct</span>
<div style="left:414.3px;top:678px;width:0.8px;height:74px;background:#a88428;"></div>
<div style="left:412.7px;top:712.6px;width:4px;height:4px;background:#242424;border:0.8px solid #e0b030;border-radius:50%;"></div>
<span style="top:759px;font-size:7.4px;line-height:10px;color:#f0b428;left:414.7px;transform:translateX(-50%);font-weight:bold;">51 %</span>
<svg style="left:260px;top:670px;" width="150" height="100" viewBox="0 0 150 100"><path d="M10 11.6 L15.25 12.78 L20.5 13.96 L23.23 14.58 L25.75 15.24 L27.95 15.83 L31 16.52 L36.25 17.73 L38.35 18.21 L38.67 18.16 L41.5 17.62 L42.76 17.38 L46.75 16.76 L52 15.95 L54.73 15.52 L57.25 15.02 L59.14 14.64 L62.5 14.08 L67.75 13.21 L71.11 12.65 L73 12.67" fill="none" stroke="#727272" stroke-width="0.55"/><path d="M73 23.3 L78.08 22.21 L83.17 21.11 L88.25 20.02 L90.08 19.63 L93.33 19 L98.42 18.03 L102.58 17.23 L103.5 17.02 L105.94 17.51 L108.58 18.13 L113.67 19.32 L118.14 20.37 L118.75 20.54 L122.41 21.56 L123.83 21.9 L128.92 23.14 L134 24.37" fill="none" stroke="#727272" stroke-width="0.55"/><path d="M10 14.69 L15.25 15.8 L20.5 16.92 L23.23 17.5 L25.75 18.21 L27.95 18.83 L31 19.5 L36.25 20.65 L38.35 21.11 L38.67 21.07 L41.5 20.54 L42.76 20.31 L46.75 19.8 L52 19.12 L54.73 18.77 L57.25 18.25 L59.14 17.86 L62.5 17.36 L67.75 16.58 L71.11 16.08 L73 16.4" fill="none" stroke="#727272" stroke-width="0.55"/><path d="M73 26.38 L78.08 25.33 L83.17 24.28 L88.25 23.22 L90.08 22.84 L93.33 22.3 L98.42 21.44 L102.58 20.74 L103.5 20.54 L105.94 20.93 L108.58 21.51 L113.67 22.62 L118.14 23.6 L118.75 23.78 L122.41 24.86 L123.83 25.19 L128.92 26.37 L134 27.55" fill="none" stroke="#727272" stroke-width="0.55"/><path d="M10 17.77 L15.25 18.83 L20.5 19.88 L23.23 20.43 L25.75 21.22 L27.95 21.92 L31 22.57 L36.25 23.68 L38.35 24.13 L38.67 24.09 L41.5 23.54 L42.76 23.29 L46.75 22.88 L52 22.35 L54.73 22.07 L57.25 21.5 L59.14 21.06 L62.5 20.61 L67.75 19.91 L71.11 19.46 L73 20.2" fill="none" stroke="#727272" stroke-width="0.55"/><path d="M73 29.46 L78.08 28.42 L83.17 27.37 L88.25 26.33 L90.08 25.95 L93.33 25.49 L98.42 24.76 L102.58 24.16 L103.5 23.95 L105.94 24.23 L108.58 24.77 L113.67 25.82 L118.14 26.75 L118.75 26.95 L122.41 28.15 L123.83 28.47 L128.92 29.63 L134 30.8" fill="none" stroke="#727272" stroke-width="0.55"/><path d="M10 20.86 L15.25 21.85 L20.5 22.85 L23.23 23.36 L25.75 24.29 L27.95 25.11 L31 25.74 L36.25 26.83 L38.35 27.26 L38.67 27.24 L41.5 26.61 L42.76 26.33 L46.75 26.04 L52 25.65 L54.73 25.45 L57.25 24.77 L59.14 24.25 L62.5 23.83 L67.75 23.18 L71.11 22.77 L73 24.07" fill="none" stroke="#727272" stroke-width="0.55"/><path d="M73 32.54 L78.08 31.47 L83.17 30.4 L88.25 29.32 L90.08 28.94 L93.33 28.56 L98.42 27.96 L102.58 27.48 L103.5 27.25 L105.94 27.39 L108.58 27.91 L113.67 28.91 L118.14 29.8 L118.75 30.03 L122.41 31.42 L123.83 31.75 L128.92 32.92 L134 34.1" fill="none" stroke="#727272" stroke-width="0.55"/><path d="M10 23.94 L15.25 24.88 L20.5 25.82 L23.23 26.31 L25.75 27.42 L27.95 28.4 L31 29.03 L36.25 30.1 L38.35 30.53 L38.67 30.52 L41.5 29.77 L42.76 29.44 L46.75 29.26 L52 29.03 L54.73 28.91 L57.25 28.06 L59.14 27.42 L62.5 27.02 L67.75 26.4 L71.11 26 L73 28.04" fill="none" stroke="#727272" stroke-width="0.55"/><path d="M73 35.62 L78.08 34.49 L83.17 33.35 L88.25 32.21 L90.08 31.8 L93.33 31.51 L98.42 31.06 L102.58 30.69 L103.5 30.43 L105.94 30.41 L108.58 30.92 L113.67 31.89 L118.14 32.75 L118.75 33.03 L122.41 34.69 L123.83 35.03 L128.92 36.25 L134 37.46" fill="none" stroke="#727272" stroke-width="0.55"/><path d="M10 27.03 L15.25 27.91 L20.5 28.79 L23.23 29.25 L25.75 30.61 L27.95 31.79 L31 32.41 L36.25 33.49 L38.35 33.92 L38.67 33.91 L41.5 33.01 L42.76 32.61 L46.75 32.55 L52 32.47 L54.73 32.43 L57.25 31.37 L59.14 30.57 L62.5 30.18 L67.75 29.55 L71.11 29.16 L73 32.09" fill="none" stroke="#727272" stroke-width="0.55"/><path d="M73 38.7 L78.08 37.47 L83.17 36.24 L88.25 35.01 L90.08 34.57 L93.33 34.37 L98.42 34.06 L102.58 33.81 L103.5 33.52 L105.94 33.33 L108.58 33.83 L113.67 34.78 L118.14 35.63 L118.75 35.96 L122.41 37.94 L123.83 38.3 L128.92 39.59 L134 40.88" fill="none" stroke="#727272" stroke-width="0.55"/><path d="M10 30.11 L15.25 30.95 L20.5 31.78 L23.23 32.21 L25.75 33.83 L27.95 35.24 L31 35.87 L36.25 36.95 L38.35 37.39 L38.67 37.39 L41.5 36.3 L42.76 35.82 L46.75 35.88 L52 35.96 L54.73 36 L57.25 34.7 L59.14 33.72 L62.5 33.31 L67.75 32.68 L71.11 32.28 L73 36.19" fill="none" stroke="#727272" stroke-width="0.55"/><path d="M73 41.79 L78.08 40.45 L83.17 39.11 L88.25 37.77 L90.08 37.29 L93.33 37.18 L98.42 37.02 L102.58 36.89 L103.5 36.55 L105.94 36.18 L108.58 36.68 L113.67 37.63 L118.14 38.46 L118.75 38.85 L122.41 41.19 L123.83 41.57 L128.92 42.94 L134 44.31" fill="none" stroke="#727272" stroke-width="0.55"/><path d="M10 33.2 L15.25 33.99 L20.5 34.77 L23.23 35.18 L25.75 37.06 L27.95 38.71 L31 39.35 L36.25 40.44 L38.35 40.88 L38.67 40.89 L41.5 39.62 L42.76 39.06 L46.75 39.24 L52 39.47 L54.73 39.59 L57.25 38.04 L59.14 36.88 L62.5 36.46 L67.75 35.81 L71.11 35.4 L73 40.28" fill="none" stroke="#727272" stroke-width="0.55"/><path d="M73 44.87 L78.08 43.43 L83.17 41.99 L88.25 40.54 L90.08 40.03 L93.33 40.01 L98.42 39.98 L102.58 39.96 L103.5 39.58 L105.94 39.05 L108.58 39.54 L113.67 40.48 L118.14 41.32 L118.75 41.76 L122.41 44.42 L123.83 44.82 L128.92 46.27 L134 47.72" fill="none" stroke="#727272" stroke-width="0.55"/><path d="M10 36.29 L15.25 37.03 L20.5 37.78 L23.23 38.17 L25.75 40.29 L27.95 42.14 L31 42.78 L36.25 43.89 L38.35 44.34 L38.67 44.36 L41.5 42.93 L42.76 42.29 L46.75 42.58 L52 42.95 L54.73 43.15 L57.25 41.39 L59.14 40.07 L62.5 39.65 L67.75 38.99 L71.11 38.57 L73 44.32" fill="none" stroke="#727272" stroke-width="0.55"/><path d="M73 47.95 L78.08 46.44 L83.17 44.92 L88.25 43.41 L90.08 42.87 L93.33 42.92 L98.42 43.01 L102.58 43.09 L103.5 42.68 L105.94 42.01 L108.58 42.49 L113.67 43.42 L118.14 44.24 L118.75 44.73 L122.41 47.64 L123.83 48.06 L128.92 49.56 L134 51.06" fill="none" stroke="#727272" stroke-width="0.55"/><path d="M10 39.37 L15.25 40.09 L20.5 40.81 L23.23 41.18 L25.75 43.46 L27.95 45.46 L31 46.11 L36.25 47.22 L38.35 47.67 L38.67 47.7 L41.5 46.17 L42.76 45.49 L46.75 45.87 L52 46.37 L54.73 46.63 L57.25 44.73 L59.14 43.31 L62.5 42.9 L67.75 42.27 L71.11 41.86 L73 48.23" fill="none" stroke="#727272" stroke-width="0.55"/><path d="M73 51.03 L78.08 49.5 L83.17 47.96 L88.25 46.43 L90.08 45.88 L93.33 45.99 L98.42 46.17 L102.58 46.32 L103.5 45.91 L105.94 45.14 L108.58 45.61 L113.67 46.5 L118.14 47.3 L118.75 47.8 L122.41 50.85 L123.83 51.27 L128.92 52.78 L134 54.29" fill="none" stroke="#727272" stroke-width="0.55"/><path d="M10 42.46 L15.25 43.15 L20.5 43.85 L23.23 44.21 L25.75 46.57 L27.95 48.63 L31 49.27 L36.25 50.38 L38.35 50.83 L38.67 50.86 L41.5 49.32 L42.76 48.63 L46.75 49.09 L52 49.69 L54.73 50.01 L57.25 48.07 L59.14 46.62 L62.5 46.25 L67.75 45.68 L71.11 45.31 L73 51.96" fill="none" stroke="#727272" stroke-width="0.55"/><path d="M73 54.11 L78.08 52.62 L83.17 51.13 L88.25 49.64 L90.08 49.11 L93.33 49.26 L98.42 49.5 L102.58 49.7 L103.5 49.29 L105.94 48.48 L108.58 48.92 L113.67 49.77 L118.14 50.51 L118.75 51.02 L122.41 54.05 L123.83 54.45 L128.92 55.92 L134 57.38" fill="none" stroke="#727272" stroke-width="0.55"/><path d="M10 45.54 L15.25 46.23 L20.5 46.92 L23.23 47.28 L25.75 49.59 L27.95 51.61 L31 52.25 L36.25 53.35 L38.35 53.79 L38.67 53.82 L41.5 52.35 L42.76 51.7 L46.75 52.22 L52 52.91 L54.73 53.26 L57.25 51.41 L59.14 50.01 L62.5 49.71 L67.75 49.23 L71.11 48.92 L73 55.49" fill="none" stroke="#727272" stroke-width="0.55"/><path d="M73 57.19 L78.08 55.81 L83.17 54.43 L88.25 53.05 L90.08 52.56 L93.33 52.73 L98.42 53 L102.58 53.22 L103.5 52.83 L105.94 52.05 L108.58 52.45 L113.67 53.22 L118.14 53.9 L118.75 54.37 L122.41 57.23 L123.83 57.61 L128.92 58.97 L134 60.33" fill="none" stroke="#727272" stroke-width="0.55"/><path d="M10 48.63 L15.25 49.32 L20.5 50.01 L23.23 50.37 L25.75 52.54 L27.95 54.43 L31 55.06 L36.25 56.12 L38.35 56.55 L38.67 56.59 L41.5 55.29 L42.76 54.71 L46.75 55.27 L52 56.01 L54.73 56.4 L57.25 54.73 L59.14 53.48 L62.5 53.26 L67.75 52.93 L71.11 52.71 L73 58.83" fill="none" stroke="#727272" stroke-width="0.55"/><path d="M73 60.27 L78.08 59.06 L83.17 57.85 L88.25 56.63 L90.08 56.2 L93.33 56.37 L98.42 56.64 L102.58 56.85 L103.5 56.52 L105.94 55.8 L108.58 56.15 L113.67 56.83 L118.14 57.42 L118.75 57.85 L122.41 60.41 L123.83 60.74 L128.92 61.95 L134 63.15" fill="none" stroke="#727272" stroke-width="0.55"/><path d="M10 51.71 L15.25 52.42 L20.5 53.12 L23.23 53.49 L25.75 55.43 L27.95 57.13 L31 57.73 L36.25 58.76 L38.35 59.18 L38.67 59.22 L41.5 58.15 L42.76 57.67 L46.75 58.27 L52 59.04 L54.73 59.45 L57.25 58.05 L59.14 57 L62.5 56.9 L67.75 56.73 L71.11 56.63 L73 62.03" fill="none" stroke="#727272" stroke-width="0.55"/><path d="M73 63.35 L78.08 62.34 L83.17 61.33 L88.25 60.32 L90.08 59.96 L93.33 60.12 L98.42 60.37 L102.58 60.57 L103.5 60.28 L105.94 59.68 L108.58 59.97 L113.67 60.54 L118.14 61.04 L118.75 61.41 L122.41 63.57 L123.83 63.86 L128.92 64.87 L134 65.89" fill="none" stroke="#727272" stroke-width="0.55"/><path d="M10 54.8 L15.25 55.52 L20.5 56.25 L23.23 56.62 L25.75 58.29 L27.95 59.76 L31 60.33 L36.25 61.33 L38.35 61.73 L38.67 61.77 L41.5 60.98 L42.76 60.62 L46.75 61.23 L52 62.03 L54.73 62.45 L57.25 61.37 L59.14 60.56 L62.5 60.58 L67.75 60.6 L71.11 60.62 L73 65.14" fill="none" stroke="#727272" stroke-width="0.55"/><path d="M73 66.43 L78.08 65.64 L83.17 64.85 L88.25 64.06 L90.08 63.77 L93.33 63.91 L98.42 64.12 L102.58 64.3 L103.5 64.07 L105.94 63.59 L108.58 63.83 L113.67 64.29 L118.14 64.7 L118.75 64.99 L122.41 66.73 L123.83 66.96 L128.92 67.78 L134 68.59" fill="none" stroke="#727272" stroke-width="0.55"/><path d="M10 57.89 L15.25 58.63 L20.5 59.38 L23.23 59.77 L25.75 61.16 L27.95 62.38 L31 62.94 L36.25 63.9 L38.35 64.28 L38.67 64.33 L41.5 63.81 L42.76 63.58 L46.75 64.21 L52 65.03 L54.73 65.45 L57.25 64.71 L59.14 64.15 L62.5 64.28 L67.75 64.5 L71.11 64.63 L73 68.22" fill="none" stroke="#727272" stroke-width="0.55"/><path d="M73 69.51 L78.08 68.93 L83.17 68.35 L88.25 67.76 L90.08 67.55 L93.33 67.67 L98.42 67.85 L102.58 67.99 L103.5 67.82 L105.94 67.46 L108.58 67.65 L113.67 68.01 L118.14 68.33 L118.75 68.55 L122.41 69.87 L123.83 70.04 L128.92 70.67 L134 71.3" fill="none" stroke="#727272" stroke-width="0.55"/><path d="M10 60.97 L15.25 61.75 L20.5 62.53 L23.23 62.93 L25.75 64.06 L27.95 65.05 L31 65.59 L36.25 66.53 L38.35 66.9 L38.67 66.95 L41.5 66.7 L42.76 66.58 L46.75 67.22 L52 68.06 L54.73 68.49 L57.25 68.06 L59.14 67.73 L62.5 67.98 L67.75 68.37 L71.11 68.62 L73 71.34" fill="none" stroke="#727272" stroke-width="0.55"/><path d="M73 72.6 L78.08 72.2 L83.17 71.8 L88.25 71.4 L90.08 71.25 L93.33 71.35 L98.42 71.49 L102.58 71.61 L103.5 71.49 L105.94 71.24 L108.58 71.38 L113.67 71.65 L118.14 71.89 L118.75 72.05 L122.41 73 L123.83 73.13 L128.92 73.59 L134 74.05" fill="none" stroke="#727272" stroke-width="0.55"/><path d="M10 64.06 L15.25 64.87 L20.5 65.68 L23.23 66.1 L25.75 67.01 L27.95 67.81 L31 68.34 L36.25 69.26 L38.35 69.63 L38.67 69.68 L41.5 69.65 L42.76 69.64 L46.75 70.29 L52 71.15 L54.73 71.6 L57.25 71.42 L59.14 71.3 L62.5 71.65 L67.75 72.2 L71.11 72.55 L73 74.54" fill="none" stroke="#727272" stroke-width="0.55"/><path d="M73 75.68 L78.08 75.43 L83.17 75.18 L88.25 74.93 L90.08 74.84 L93.33 74.91 L98.42 75.03 L102.58 75.12 L103.5 75.05 L105.94 74.89 L108.58 74.99 L113.67 75.18 L118.14 75.36 L118.75 75.47 L122.41 76.12 L123.83 76.21 L128.92 76.54 L134 76.86" fill="none" stroke="#727272" stroke-width="0.55"/><path d="M10 67.14 L15.25 67.99 L20.5 68.83 L23.23 69.27 L25.75 70.02 L27.95 70.68 L31 71.21 L36.25 72.12 L38.35 72.49 L38.67 72.54 L41.5 72.69 L42.76 72.76 L46.75 73.43 L52 74.32 L54.73 74.77 L57.25 74.82 L59.14 74.85 L62.5 75.28 L67.75 75.96 L71.11 76.4 L73 77.81" fill="none" stroke="#727272" stroke-width="0.55"/><path d="M73 78.76 L78.08 78.62 L83.17 78.48 L88.25 78.35 L90.08 78.3 L93.33 78.36 L98.42 78.45 L102.58 78.53 L103.5 78.49 L105.94 78.39 L108.58 78.47 L113.67 78.61 L118.14 78.73 L118.75 78.8 L122.41 79.23 L123.83 79.29 L128.92 79.51 L134 79.74" fill="none" stroke="#727272" stroke-width="0.55"/><path d="M10 70.23 L15.25 71.11 L20.5 71.99 L23.23 72.45 L25.75 73.08 L27.95 73.64 L31 74.18 L36.25 75.1 L38.35 75.47 L38.67 75.52 L41.5 75.82 L42.76 75.95 L46.75 76.64 L52 77.55 L54.73 78.03 L57.25 78.23 L59.14 78.38 L62.5 78.88 L67.75 79.67 L71.11 80.17 L73 81.18" fill="none" stroke="#727272" stroke-width="0.55"/><path d="M73 81.84 L78.08 81.78 L83.17 81.72 L88.25 81.66 L90.08 81.64 L93.33 81.69 L98.42 81.77 L102.58 81.84 L103.5 81.82 L105.94 81.77 L108.58 81.82 L113.67 81.92 L118.14 82.01 L118.75 82.06 L122.41 82.32 L123.83 82.37 L128.92 82.52 L134 82.67" fill="none" stroke="#727272" stroke-width="0.55"/><path d="M10 73.31 L15.25 74.23 L20.5 75.15 L23.23 75.63 L25.75 76.2 L27.95 76.69 L31 77.24 L36.25 78.19 L38.35 78.57 L38.67 78.62 L41.5 79.02 L42.76 79.19 L46.75 79.91 L52 80.85 L54.73 81.35 L57.25 81.66 L59.14 81.9 L62.5 82.46 L67.75 83.33 L71.11 83.88 L73 84.62" fill="none" stroke="#727272" stroke-width="0.55"/><path d="M73 84.92 L78.08 84.91 L83.17 84.9 L88.25 84.89 L90.08 84.89 L93.33 84.94 L98.42 85.01 L102.58 85.06 L103.5 85.06 L105.94 85.04 L108.58 85.08 L113.67 85.15 L118.14 85.22 L118.75 85.25 L122.41 85.41 L123.83 85.44 L128.92 85.54 L134 85.65" fill="none" stroke="#727272" stroke-width="0.55"/><path d="M10 76.4 L15.25 77.36 L20.5 78.33 L23.23 78.83 L25.75 79.36 L27.95 79.82 L31 80.39 L36.25 81.37 L38.35 81.76 L38.67 81.82 L41.5 82.28 L42.76 82.49 L46.75 83.23 L52 84.21 L54.73 84.72 L57.25 85.11 L59.14 85.41 L62.5 86.01 L67.75 86.95 L71.11 87.55 L73 88.12" fill="none" stroke="#727272" stroke-width="0.55"/><path d="M73 88 L78.08 88.02 L83.17 88.04 L88.25 88.06 L90.08 88.07 L93.33 88.1 L98.42 88.17 L102.58 88.22 L103.5 88.22 L105.94 88.22 L108.58 88.25 L113.67 88.31 L118.14 88.37 L118.75 88.38 L122.41 88.49 L123.83 88.51 L128.92 88.58 L134 88.66" fill="none" stroke="#727272" stroke-width="0.55"/><path d="M10 11.6 V76.4 L42 49.5 M73 12.5 L73.4 88" stroke="#7a7a7a" stroke-width="0.6" fill="none"/><path d="M74 86 L103.5 17.4 L134 83 M134 24.2 L134 88.6" stroke="#7a7a7a" stroke-width="0.6" fill="none"/><path d="M10 43.03 L15.25 43.42 L20.5 43.8 L23.23 44.01 L25.75 46.44 L27.95 48.56 L31 49.06 L36.25 49.91 L38.35 50.25 L38.67 50.3 L41.5 48.7 L42.76 47.99 L46.75 48.68 L52 49.58 L54.73 50.05 L57.25 48.01 L59.14 46.48 L62.5 46.21 L67.75 45.8 L71.11 45.53 L73 53.02" fill="none" stroke="#f0b428" stroke-width="1.3" stroke-linejoin="round"/><path d="M73 53.06 L78.08 51.73 L83.17 50.39 L88.25 49.06 L90.08 48.58 L93.33 48.95 L98.42 49.55 L102.58 50.03 L103.5 49.63 L105.94 48.57 L108.58 48.89 L113.67 49.49 L118.14 50.03 L118.75 50.55 L122.41 53.68 L123.83 54.04 L128.92 55.33 L134 56.62" fill="none" stroke="#f0b428" stroke-width="1.3" stroke-linejoin="round"/></svg>
<div style="left:437px;top:663.6px;width:160.6px;height:55.4px;background:#242424;"></div>
<div style="left:437px;top:719px;width:160.6px;height:10.4px;background:#303030;"></div>
<div style="left:437px;top:730.4px;width:160.6px;height:49.6px;background:#a9a9a9;"></div>
<div style="left:516.2px;top:733px;width:0.8px;height:44px;background:#8a8a8a;"></div>
<div style="left:440.4px;top:667.6px;width:6.4px;height:6.2px;background:#ffbd0a;"></div>
<svg style="left:450px;top:666px;" width="16" height="9" viewBox="0 0 16 9"><path d="M1 3 H9 C11 3 11 7 12.4 7" stroke="#f0b428" stroke-width="0.9" fill="none"/><path d="M12.6 4 h3 l-1.5 2z" fill="#f0b428"/></svg>
<div style="left:472.4px;top:667px;width:9.6px;height:7.4px;background:#ffbd0a;"></div>
<span style="top:666px;font-size:7px;line-height:10px;color:#1c1c1c;left:477.2px;transform:translateX(-50%);">24</span>
<span style="top:666px;font-size:7.4px;line-height:10px;color:#f0b428;left:486.6px;font-weight:bold;">Clean&#9662;</span>
<div style="left:516.6px;top:666.6px;width:0.7px;height:8px;background:#6a6a6a;"></div>
<div style="left:523px;top:667.6px;width:6.4px;height:6.2px;background:#ffbd0a;"></div>
<svg style="left:533px;top:666px;" width="18" height="9" viewBox="0 0 18 9"><path d="M1 2.6 H2.4 L5.6 7 H7.6 L10.8 2.6 H12.2" stroke="#f0b428" stroke-width="0.9" fill="none"/><path d="M13.4 4 h3 l-1.5 2z" fill="#f0b428"/></svg>
<div style="left:554.4px;top:667px;width:9.6px;height:7.4px;background:#18d0e6;"></div>
<span style="top:666px;font-size:7px;line-height:10px;color:#0a2a30;left:559.2px;transform:translateX(-50%);">12</span>
<span style="top:666px;font-size:7.4px;line-height:10px;color:#f0b428;left:568.6px;font-weight:bold;">Clean&#9662;</span>
<svg style="left:437px;top:680px;" width="161" height="40" viewBox="0 0 161 40"><path d="M0 17.4 H68 C77 17.4 79 18 80 36 L81.2 36 C82 18 84 17.4 93 17.4 H148 C156 17.4 159.4 15 160.4 5" fill="none" stroke="#28c8dc" stroke-width="1.2"/><circle cx="80.6" cy="18.6" r="3.6" fill="#f0b428"/><circle cx="140.4" cy="17.6" r="3.6" fill="none" stroke="#f0b428" stroke-width="0.9"/><path d="M140.4 14 V21.2 M136.8 17.6 H144" stroke="#f0b428" stroke-width="0.7"/></svg>
<span style="top:694px;font-size:5px;line-height:10px;color:#3a2a08;left:517.6px;transform:translateX(-50%);">2</span>
<svg style="left:441px;top:721.4px;" width="10" height="6" viewBox="0 0 10 6"><circle cx="2.4" cy="3" r="1.5" fill="none" stroke="#aaa" stroke-width="0.7"/><circle cx="6.6" cy="3" r="1.5" fill="none" stroke="#aaa" stroke-width="0.7"/></svg>
<span style="top:720px;font-size:7.2px;line-height:10px;color:#b8b8b8;left:457.4px;">Serial</span>
<span style="top:719px;font-size:6px;line-height:10px;color:#b8b8b8;left:485px;transform:translateX(-50%);">&#9662;</span>
<span style="top:732px;font-size:7.4px;line-height:10px;color:#2a2a2a;left:443px;">Res</span>
<span style="top:732px;font-size:7.4px;line-height:10px;color:#2a2a2a;left:474px;">Frequency</span>
<svg style="left:438.8px;top:739.8px;" width="19.2" height="19.2" viewBox="0 0 19.2 19.2"><path d="M6 13.89 A5.6 5.6 0 1 1 13.2 13.89" fill="none" stroke="#2a2a2a" stroke-width="1.3"/><path d="M6 13.89 A5.6 5.6 0 0 1 12.4 4.75" fill="none" stroke="#28c8dc" stroke-width="1.9"/><path d="M10.33 9.18 L14.45 6.8" stroke="#2a2a2a" stroke-width="1.3"/></svg>
<span style="top:750px;font-size:7.2px;line-height:10px;color:#2a2a2a;left:452.4px;">61 %</span>
<svg style="left:475.8px;top:738.4px;" width="31.2" height="31.2" viewBox="0 0 31.2 31.2"><path d="M8.14 24.49 A11.6 11.6 0 1 1 23.06 24.49" fill="none" stroke="#2a2a2a" stroke-width="1.6"/><path d="M8.14 24.49 A11.6 11.6 0 1 1 26.36 19.95" fill="none" stroke="#28c8dc" stroke-width="3"/><path d="M17.21 16.25 L26.36 19.95" stroke="#2a2a2a" stroke-width="1.6"/></svg>
<span style="top:767px;font-size:7.2px;line-height:10px;color:#2a2a2a;left:491.4px;transform:translateX(-50%);">10.0 kHz</span>
<span style="top:732px;font-size:7.4px;line-height:10px;color:#2a2a2a;left:525.4px;">Frequency</span>
<span style="top:732px;font-size:7.4px;line-height:10px;color:#2a2a2a;left:564px;">Res</span>
<svg style="left:527.2px;top:738.4px;" width="31.2" height="31.2" viewBox="0 0 31.2 31.2"><path d="M8.14 24.49 A11.6 11.6 0 1 1 23.06 24.49" fill="none" stroke="#2a2a2a" stroke-width="1.6"/><path d="M8.14 24.49 A11.6 11.6 0 0 1 15.6 4" fill="none" stroke="#28c8dc" stroke-width="3"/><path d="M15.6 13.86 L15.6 4" stroke="#2a2a2a" stroke-width="1.6"/></svg>
<span style="top:767px;font-size:7.2px;line-height:10px;color:#2a2a2a;left:542.8px;transform:translateX(-50%);">640 Hz</span>
<svg style="left:560.8px;top:739px;" width="19.2" height="19.2" viewBox="0 0 19.2 19.2"><path d="M6 13.89 A5.6 5.6 0 1 1 13.2 13.89" fill="none" stroke="#2a2a2a" stroke-width="1.3"/><path d="M6 13.89 A5.6 5.6 0 0 1 11.52 4.34" fill="none" stroke="#28c8dc" stroke-width="1.9"/><path d="M10.24 9.06 L13.89 6" stroke="#2a2a2a" stroke-width="1.3"/></svg>
<span style="top:750px;font-size:7.2px;line-height:10px;color:#2a2a2a;left:574.4px;">57 %</span>
<div style="left:599.6px;top:663.6px;width:219.4px;height:116.4px;background:#242424;"></div>
<div style="left:633px;top:653px;width:52px;height:11px;background:#242424;border-radius:2px 2px 0 0;"></div>
<span style="top:654px;font-size:7.3px;line-height:10px;color:#e8e8e8;left:659px;transform:translateX(-50%);">Mod Sources</span>
<div style="left:687px;top:653.6px;width:31px;height:9.4px;background:#bcbcbc;border-radius:2px 2px 0 0;"></div>
<span style="top:654px;font-size:7.3px;line-height:10px;color:#2a2a2a;left:702.5px;transform:translateX(-50%);">Matrix</span>
<div style="left:720px;top:653.6px;width:24px;height:9.4px;background:#bcbcbc;border-radius:2px 2px 0 0;"></div>
<span style="top:654px;font-size:7.3px;line-height:10px;color:#2a2a2a;left:732px;transform:translateX(-50%);">MIDI</span>
<div style="left:746px;top:653.6px;width:25px;height:9.4px;background:#bcbcbc;border-radius:2px 2px 0 0;"></div>
<span style="top:654px;font-size:7.3px;line-height:10px;color:#2a2a2a;left:758.5px;transform:translateX(-50%);">MPE</span>
<svg style="left:843px;top:653.2px;" width="9" height="9" viewBox="0 0 9 9"><circle cx="4.4" cy="4.4" r="3.8" fill="#d0d0d0" stroke="#222" stroke-width="0.7"/><path d="M2.4 4.8 A2.1 2.1 0 0 1 6 3 M6.4 4 A2.1 2.1 0 0 1 2.8 5.8" stroke="#222" stroke-width="0.8" fill="none"/></svg>
<svg style="left:854px;top:653.2px;" width="9" height="9" viewBox="0 0 9 9"><circle cx="4.4" cy="4.4" r="3.8" fill="#d0d0d0" stroke="#222" stroke-width="0.7"/><rect x="2.4" y="2.4" width="4" height="4" fill="#222"/><rect x="3.2" y="2.4" width="2.2" height="1.4" fill="#d0d0d0"/></svg>
<span style="top:666px;font-size:7.4px;line-height:10px;color:#28c8dc;left:620.8px;transform:translateX(-50%);font-weight:bold;">Amp</span>
<span style="top:666px;font-size:7.4px;line-height:10px;color:#b4b4b4;left:665px;transform:translateX(-50%);">Env 2</span>
<span style="top:666px;font-size:7.4px;line-height:10px;color:#b4b4b4;left:709px;transform:translateX(-50%);">Env 3</span>
<span style="top:666px;font-size:7.4px;line-height:10px;color:#b4b4b4;left:753px;transform:translateX(-50%);">LFO 1</span>
<span style="top:666px;font-size:7.4px;line-height:10px;color:#b4b4b4;left:797px;transform:translateX(-50%);">LFO 2</span>
<div style="left:599.6px;top:676.3px;width:219.4px;height:0.6px;background:#555;"></div>
<div style="left:599.6px;top:676px;width:43.4px;height:1.2px;background:#28c8dc;"></div>
<span style="top:680px;font-size:7.4px;line-height:10px;color:#28c8dc;left:785px;font-weight:bold;">None</span>
<span style="top:680px;font-size:6px;line-height:10px;color:#28c8dc;left:812.6px;transform:translateX(-50%);">&#9662;</span>
<svg style="left:599.6px;top:663.6px;" width="220" height="100" viewBox="0 0 220 100"><path d="M11.4 83.4 L56 29.4 C60 39 72 44.6 82.4 44.9 H140.4 C144 64 158 77 177.6 80" fill="none" stroke="#28c8dc" stroke-width="1.2" stroke-linejoin="round"/><path d="M9 30 V26 H13.6 M9 80.4 V84.8 H13.6 M205 26 H209.4 V30.6 M205 84.8 H209.4 V80.4" fill="none" stroke="#28c8dc" stroke-width="0.9"/><circle cx="34.4" cy="55.4" r="1.1" fill="#aaa"/><circle cx="68" cy="40.6" r="1.1" fill="#aaa"/><circle cx="162.6" cy="74.6" r="1.1" fill="#aaa"/><rect x="54.6" y="27.8" width="3.2" height="3.2" fill="none" stroke="#f0b428" stroke-width="0.8"/><rect x="80.8" y="43.4" width="3.2" height="3.2" fill="none" stroke="#f0b428" stroke-width="0.8"/><rect x="176" y="78.4" width="3.2" height="3.2" fill="none" stroke="#f0b428" stroke-width="0.8"/></svg>
<span style="top:748px;font-size:7.4px;line-height:10px;color:#f0f0f0;left:691px;font-weight:bold;">Time</span>
<span style="top:748px;font-size:7.4px;line-height:10px;color:#8a8a8a;left:710px;">Slope</span>
<div style="left:599.6px;top:758px;width:219.4px;height:0.6px;background:#555;"></div>
<div style="left:688.6px;top:757.6px;width:20.4px;height:1.2px;background:#d8d8d8;"></div>
<span style="top:760px;font-size:7px;line-height:10px;color:#b4b4b4;left:648.6px;">A</span>
<span style="top:769px;font-size:7.2px;line-height:10px;color:#28c8dc;left:648.6px;font-weight:bold;">4.62 s</span>
<span style="top:760px;font-size:7px;line-height:10px;color:#b4b4b4;left:679px;">D</span>
<span style="top:769px;font-size:7.2px;line-height:10px;color:#28c8dc;left:679px;font-weight:bold;">600 ms</span>
<span style="top:760px;font-size:7px;line-height:10px;color:#b4b4b4;left:710px;">S</span>
<span style="top:769px;font-size:7.2px;line-height:10px;color:#28c8dc;left:710px;font-weight:bold;">-6.0 dB</span>
<span style="top:760px;font-size:7px;line-height:10px;color:#b4b4b4;left:743px;">R</span>
<span style="top:769px;font-size:7.2px;line-height:10px;color:#28c8dc;left:743px;font-weight:bold;">2.90 s</span>
<div style="left:821px;top:663.6px;width:43px;height:118.4px;background:#a9a9a9;border-radius:0 0 3.5px 0;"></div>
<span style="top:666px;font-size:7.4px;line-height:10px;color:#2a2a2a;left:823px;">Volume</span>
<div style="left:823.4px;top:674.6px;width:38px;height:8.4px;background:#dcdcdc;border:0.6px solid #707070;"></div>
<div style="left:824px;top:675.2px;width:27px;height:7.2px;background:#22c8e0;"></div>
<span style="top:674px;font-size:7.2px;line-height:10px;color:#1c1c1c;left:842.4px;transform:translateX(-50%);">-5.0 dB</span>
<div style="left:822px;top:686.2px;width:41px;height:0.6px;background:#8e8e8e;"></div>
<div style="left:823.4px;top:689.4px;width:21.2px;height:8.2px;background:#ffbd0a;border:0.6px solid #7a5a08;"></div>
<span style="top:689px;font-size:7.2px;line-height:10px;color:#1c1c1c;left:834px;transform:translateX(-50%);">Poly</span>
<div style="left:848px;top:689.4px;width:13.4px;height:8.2px;background:#dcdcdc;border:0.6px solid #707070;"></div>
<span style="top:689px;font-size:7px;line-height:10px;color:#1c1c1c;left:850px;">8</span>
<span style="top:689px;font-size:5.5px;line-height:10px;color:#1c1c1c;left:857.6px;transform:translateX(-50%);">&#9660;</span>
<span style="top:698px;font-size:7.4px;line-height:10px;color:#2a2a2a;left:823px;">Glide</span>
<div style="left:823.4px;top:707.6px;width:38px;height:8px;background:#a4a4a4;border:0.6px solid #707070;"></div>
<span style="top:707px;font-size:7.2px;line-height:10px;color:#3a3a3a;left:842.4px;transform:translateX(-50%);">0.00 ms</span>
<div style="left:822px;top:719.4px;width:41px;height:0.6px;background:#8e8e8e;"></div>
<span style="top:723px;font-size:7.4px;line-height:10px;color:#2a2a2a;left:823px;">Unison</span>
<div style="left:823.4px;top:731.6px;width:38px;height:8.4px;background:#dcdcdc;border:0.6px solid #707070;"></div>
<span style="top:731px;font-size:7px;line-height:10px;color:#1c1c1c;left:825px;letter-spacing:-0.15px;">Shimmer</span>
<span style="top:732px;font-size:5.5px;line-height:10px;color:#1c1c1c;left:857.6px;transform:translateX(-50%);">&#9660;</span>
<span style="top:741px;font-size:7.4px;line-height:10px;color:#2a2a2a;left:823px;">Voices</span>
<div style="left:823.4px;top:749.6px;width:38px;height:8.4px;background:#dcdcdc;border:0.6px solid #707070;"></div>
<div style="left:824px;top:750.2px;width:5.6px;height:7.2px;background:#22c8e0;"></div>
<span style="top:749px;font-size:7.2px;line-height:10px;color:#1c1c1c;left:842.4px;transform:translateX(-50%);">3</span>
<span style="top:759px;font-size:7.4px;line-height:10px;color:#2a2a2a;left:823px;">Amount</span>
<div style="left:823.4px;top:767.6px;width:38px;height:8.4px;background:#dcdcdc;border:0.6px solid #707070;"></div>
<div style="left:824px;top:768.2px;width:14px;height:7.2px;background:#22c8e0;"></div>
<span style="top:767px;font-size:7.2px;line-height:10px;color:#1c1c1c;left:842.4px;transform:translateX(-50%);">38 %</span>
<div style="left:867px;top:679px;width:3px;height:75px;background:#22e070;"></div>
<div style="left:867px;top:679px;width:3px;height:11px;background:#3a3a3a;"></div>
<div style="left:867px;top:690px;width:3px;height:16px;background:#b8c030;"></div>
<div style="left:868.3px;top:679px;width:0.4px;height:27px;background:#777;"></div>
<div style="left:872px;top:651px;width:122.2px;height:131px;background:#a7a7a7;border-radius:3.5px;"></div>
<div style="left:872px;top:651px;width:122.2px;height:12.6px;background:#b4b4b4;border-radius:3.5px 3.5px 0 0;"></div>
<div style="left:874.4px;top:653.4px;width:8.4px;height:8.4px;background:#ffbd0a;border-radius:50%;border:0.7px solid #6a4a08;"></div>
<span style="top:653px;font-size:7.5px;line-height:10px;color:#1c1c1c;left:885.6px;font-weight:bold;">Droney Cave</span>
<span style="top:666px;font-size:7.4px;line-height:10px;color:#2a2a2a;left:892px;transform:translateX(-50%);">Send</span>
<svg style="left:880.4px;top:671.4px;" width="23.2" height="23.2" viewBox="0 0 23.2 23.2"><path d="M6.71 17.42 A7.6 7.6 0 1 1 16.49 17.42" fill="none" stroke="#2a2a2a" stroke-width="1.4"/><path d="M6.71 17.42 A7.6 7.6 0 0 1 14.2 4.46" fill="none" stroke="#28c8dc" stroke-width="2.2"/><path d="M12.61 11.06 L18.31 8.03" stroke="#2a2a2a" stroke-width="1.4"/></svg>
<span style="top:690px;font-size:7.2px;line-height:10px;color:#2a2a2a;left:892px;transform:translateX(-50%);">-3.1 dB</span>
<span style="top:706px;font-size:7.4px;line-height:10px;color:#2a2a2a;left:892px;transform:translateX(-50%);">Predelay</span>
<svg style="left:880.4px;top:711.4px;" width="23.2" height="23.2" viewBox="0 0 23.2 23.2"><path d="M6.71 17.42 A7.6 7.6 0 1 1 16.49 17.42" fill="none" stroke="#2a2a2a" stroke-width="1.4"/><path d="M6.71 17.42 A7.6 7.6 0 0 1 4.26 13.57" fill="none" stroke="#28c8dc" stroke-width="2.2"/><path d="M10.48 11.8 L4.12 12.92" stroke="#2a2a2a" stroke-width="1.4"/></svg>
<span style="top:731px;font-size:7.2px;line-height:10px;color:#2a2a2a;left:892px;transform:translateX(-50%);">10.0 ms</span>
<div style="left:876px;top:742.6px;width:14.6px;height:7.8px;background:#ffbd0a;border:0.6px solid #7a5a08;"></div>
<span style="top:742px;font-size:7.2px;line-height:10px;color:#1c1c1c;left:883.3px;transform:translateX(-50%);">ms</span>
<div style="left:893.6px;top:742.6px;width:14.4px;height:7.8px;background:#dcdcdc;border:0.6px solid #707070;"></div>
<span style="top:742px;font-size:6.5px;line-height:10px;color:#1c1c1c;left:900.8px;transform:translateX(-50%);">&#9834;</span>
<span style="top:760px;font-size:7.4px;line-height:10px;color:#2a2a2a;left:892px;transform:translateX(-50%);">Feedback</span>
<div style="left:876px;top:769.6px;width:32px;height:8px;background:#dcdcdc;border:0.6px solid #707070;"></div>
<span style="top:769px;font-size:7.2px;line-height:10px;color:#1c1c1c;left:892px;transform:translateX(-50%);">0.0 %</span>
<div style="left:912.7px;top:663.6px;width:81.5px;height:78.4px;background:#242424;"></div>
<svg style="left:912.7px;top:663.6px;" width="81.5" height="56" viewBox="0 0 81.5 56"><path d="M3 26.44 L3.5 26.18 L4 25.62 L4.5 25.63 L5 24.97 L5.5 24.78 L6 15 L6.5 2.5 L7 2.5 L7.5 15 L8 23.54 L8.5 23.53 L9 23 L9.5 22.37 L10 23.55 L10.5 23.41 L11 22.79 L11.5 22.31 L12 22.93 L12.5 23.24 L13 22.36 L13.5 23.83 L14 22.61 L14.5 23.51 L15 23.75 L15.5 23.81 L16 23.55 L16.5 22.82 L17 23.79 L17.5 23.22 L18 23.17 L18.5 23.58 L19 23.35 L19.5 24.06 L20 24.09 L20.5 23.9 L21 23.26 L21.5 23.64 L22 23.82 L22.5 23.47 L23 23.67 L23.5 23.9 L24 23.26 L24.5 23.41 L25 24.04 L25.5 23.62 L26 23.71 L26.5 23.28 L27 23.49 L27.5 24.08 L28 23.22 L28.5 24.33 L29 23.97 L29.5 23.57 L30 24.34 L30.5 23.94 L31 24.51 L31.5 23.77 L32 23.67 L32.5 23.92 L33 23.58 L33.5 24.27 L34 23.84 L34.5 23.97 L35 24.01 L35.5 24.17 L36 23.75 L36.5 23.65 L37 24.2 L37.5 24.01 L38 24.7 L38.5 24 L39 24.08 L39.5 23.72 L40 23.93 L40.5 24.53 L41 24.43 L41.5 24.15 L42 24.85 L42.5 24.4 L43 24.72 L43.5 24.79 L44 24.86 L44.5 24.15 L45 24.82 L45.5 24.71 L46 24.58 L46.5 24.11 L47 24.92 L47.5 24.56 L48 24.48 L48.5 24.16 L49 24.24 L49.5 24.22 L50 24.8 L50.5 24.68 L51 24.75 L51.5 24.26 L52 24.21 L52.5 24.98 L53 24.97 L53.5 24.93 L54 24.94 L54.5 24.72 L55 24.64 L55.5 24.95 L56 25.19 L56.5 24.83 L57 24.88 L57.5 24.72 L58 24.39 L58.5 24.64 L59 24.8 L59.5 24.73 L60 24.69 L60.5 25.23 L61 24.52 L61.5 24.64 L62 24.57 L62.5 24.65 L63 25 L63.5 25 L64 25.26 L64.5 24.83 L65 25.31 L65.5 25.31 L66 25.21 L66.5 25.25 L67 25.12 L67.5 25.36 L68 25.41 L68.5 25.3 L69 25.35 L69.5 25.15 L70 25.42 L70.5 24.77 L71 24.98 L71.5 25.35 L72 25.28 L72.5 25.21 L73 25.21 L73.5 25.4 L74 24.86 L74.5 24.77 L75 25.17 L75.5 25.16 L76 25.47 L76.5 25.46 L77 25.29 L77.5 25.36 L78 24.96 L78.5 25.45 L79 25.55 L79.5 24.9 L80 25.21 L80.5 25.48 L81 25.21 L81.5 25.58 L82 25.24 L82.5 24.93 L83 25.02 L83.5 25.15 L84 25.45 L84.5 25.39 L84.5 28.61 L84 28.55 L83.5 28.85 L83 28.98 L82.5 29.07 L82 28.76 L81.5 28.42 L81 28.79 L80.5 28.52 L80 28.79 L79.5 29.1 L79 28.45 L78.5 28.55 L78 29.04 L77.5 28.64 L77 28.71 L76.5 28.54 L76 28.53 L75.5 28.84 L75 28.83 L74.5 29.23 L74 29.14 L73.5 28.6 L73 28.79 L72.5 28.79 L72 28.72 L71.5 28.65 L71 29.02 L70.5 29.23 L70 28.58 L69.5 28.85 L69 28.65 L68.5 28.7 L68 28.59 L67.5 28.64 L67 28.88 L66.5 28.75 L66 28.79 L65.5 28.69 L65 28.69 L64.5 29.17 L64 28.74 L63.5 29 L63 29 L62.5 29.35 L62 29.43 L61.5 29.36 L61 29.48 L60.5 28.77 L60 29.31 L59.5 29.27 L59 29.2 L58.5 29.36 L58 29.61 L57.5 29.28 L57 29.12 L56.5 29.17 L56 28.81 L55.5 29.05 L55 29.36 L54.5 29.28 L54 29.06 L53.5 29.07 L53 29.03 L52.5 29.02 L52 29.79 L51.5 29.74 L51 29.25 L50.5 29.32 L50 29.2 L49.5 29.78 L49 29.76 L48.5 29.84 L48 29.52 L47.5 29.44 L47 29.08 L46.5 29.89 L46 29.42 L45.5 29.29 L45 29.18 L44.5 29.85 L44 29.14 L43.5 29.21 L43 29.28 L42.5 29.6 L42 29.15 L41.5 29.85 L41 29.57 L40.5 29.47 L40 30.07 L39.5 30.28 L39 29.92 L38.5 30 L38 29.3 L37.5 29.99 L37 29.8 L36.5 30.35 L36 30.25 L35.5 29.83 L35 29.99 L34.5 30.03 L34 30.16 L33.5 29.73 L33 30.42 L32.5 30.08 L32 30.33 L31.5 30.23 L31 29.49 L30.5 30.06 L30 29.66 L29.5 30.43 L29 30.03 L28.5 29.67 L28 30.78 L27.5 29.92 L27 30.51 L26.5 30.72 L26 30.29 L25.5 30.38 L25 29.96 L24.5 30.59 L24 30.74 L23.5 30.1 L23 30.33 L22.5 30.53 L22 30.18 L21.5 30.36 L21 30.74 L20.5 30.1 L20 29.91 L19.5 29.94 L19 30.65 L18.5 30.42 L18 30.83 L17.5 30.78 L17 30.21 L16.5 31.18 L16 30.45 L15.5 30.19 L15 30.25 L14.5 30.49 L14 31.39 L13.5 30.17 L13 31.64 L12.5 30.76 L12 31.07 L11.5 31.69 L11 31.21 L10.5 30.59 L10 30.45 L9.5 31.63 L9 31 L8.5 30.47 L8 30.46 L7.5 39 L7 52 L6.5 52 L6 39 L5.5 29.22 L5 29.03 L4.5 28.37 L4 28.38 L3.5 27.82 L3 27.56z" fill="#f0b428"/></svg>
<div style="left:917.4px;top:720.4px;width:6.2px;height:6.2px;background:#ffbd0a;"></div>
<span style="top:719px;font-size:7.4px;line-height:10px;color:#c8c8c8;left:928.5px;">Attack</span>
<span style="top:719px;font-size:7.4px;line-height:10px;color:#c8c8c8;left:964.5px;">Decay</span>
<span style="top:730px;font-size:7.2px;line-height:10px;color:#f0b428;left:928px;font-weight:bold;">0.00 ms</span>
<span style="top:730px;font-size:7.2px;line-height:10px;color:#f0b428;left:965px;font-weight:bold;">20.0 s</span>
<span style="top:746px;font-size:7.4px;line-height:10px;color:#2a2a2a;left:916px;">Convolution IR</span>
<div style="left:915.2px;top:759px;width:79px;height:8px;background:#dcdcdc;border:0.6px solid #555;border-right:none;"></div>
<span style="top:758px;font-size:7px;line-height:10px;color:#1c1c1c;left:917px;">Halls</span>
<div style="left:915.2px;top:770px;width:79px;height:8px;background:#dcdcdc;border:0.6px solid #555;border-right:none;"></div>
<span style="top:769px;font-size:7px;line-height:10px;color:#1c1c1c;left:917px;">Berliner Hall LR</span>
<svg style="left:7.6px;top:789.2px;" width="11" height="11" viewBox="0 0 11 11"><circle cx="5.2" cy="5.2" r="4.8" fill="#a8a8a8"/><rect x="4.5" y="4.4" width="1.4" height="3.6" fill="#868686"/><circle cx="5.2" cy="2.8" r="0.9" fill="#868686"/></svg>
<div style="left:29px;top:789px;width:588.6px;height:12px;background:#a6a6a6;border-radius:2px;"></div>
<div style="left:624.4px;top:789px;width:12.6px;height:12px;background:#a6a6a6;border-radius:2px 0 0 2px;"></div>
<svg style="left:627.4px;top:791.6px;" width="7" height="7" viewBox="0 0 7 7"><path d="M1 0.6 L6 3.4 L1 6.2z" fill="#1c1c1c"/></svg>
<div style="left:638.6px;top:789px;width:138.4px;height:12px;background:#b4b4b4;"></div>
<div style="left:717px;top:789px;width:24.6px;height:12px;background:#b0d0d9;"></div>
<div style="left:716.4px;top:789px;width:0.6px;height:12px;background:#666;"></div>
<div style="left:656px;top:792.6px;width:24px;height:0.6px;background:#8a8a8a;"></div>
<div style="left:690px;top:795.6px;width:14px;height:0.6px;background:#8a8a8a;"></div>
<div style="left:642px;top:798px;width:18px;height:0.6px;background:#8a8a8a;"></div>
<div style="left:700px;top:797.6px;width:16px;height:0.6px;background:#8a8a8a;"></div>
<div style="left:718px;top:792.4px;width:20px;height:0.6px;background:#8a8a8a;"></div>
<div style="left:722px;top:799px;width:18px;height:0.6px;background:#8a8a8a;"></div>
<div style="left:783px;top:788.4px;width:13.6px;height:13.2px;background:#ffbd0a;border-radius:1px;"></div>
<svg style="left:786.4px;top:792px;" width="7" height="6" viewBox="0 0 7 6"><path d="M3.4 0.8 L6.2 5 H0.6z" fill="#1c1c1c"/></svg>
<span style="top:791px;font-size:7.5px;line-height:10px;color:#1c1c1c;left:802px;font-weight:bold;">Drift Pad</span>
<div style="left:837px;top:788.6px;width:123px;height:13.4px;background:#3a3a3a;"></div>
<div style="left:837px;top:788.6px;width:12px;height:13.4px;background:#8a8a8a;"></div>
<div style="left:838px;top:790px;width:10px;height:11px;background:#5a5a6a;"></div>
<div style="left:850px;top:789.4px;width:8px;height:12px;background:#9a9a9a;"></div>
<div style="left:859px;top:789.4px;width:39px;height:12px;background:#262626;"></div>
<div style="left:866px;top:797px;width:22px;height:3.6px;background:#9a9a9a;"></div>
<div style="left:868px;top:791px;width:22px;height:3px;background:#4a4430;"></div>
<div style="left:899px;top:789.4px;width:24px;height:12px;background:#262626;"></div>
<div style="left:904px;top:791px;width:14px;height:4px;background:#3a3a3a;"></div>
<div style="left:924px;top:789.4px;width:7px;height:12px;background:#9a9a9a;"></div>
<div style="left:932px;top:789.4px;width:4px;height:12px;background:#8e8e8e;"></div>
<div style="left:937px;top:789.4px;width:23px;height:12px;background:#303030;"></div>
<div style="left:938px;top:797.4px;width:20px;height:3.6px;background:#9a9a9a;"></div>
<div style="left:940px;top:791.6px;width:16px;height:3.4px;background:#4a4028;"></div>
<div style="left:972.4px;top:795px;width:1.5px;height:5px;background:#d8a826;"></div>
<div style="left:974.6px;top:791px;width:1.5px;height:9px;background:#d8a826;"></div>
<div style="left:976.8px;top:793.6px;width:1.5px;height:6.4px;background:#d8a826;"></div>
<div style="left:979px;top:790px;width:1.5px;height:10px;background:#d8a826;"></div>
<div style="left:981.2px;top:792.4px;width:1.5px;height:7.6px;background:#d8a826;"></div>
<span style="top:791px;font-size:6px;line-height:10px;color:#a2a2a2;left:989.4px;transform:translateX(-50%);">&#9662;</span>
</div></body></html>
